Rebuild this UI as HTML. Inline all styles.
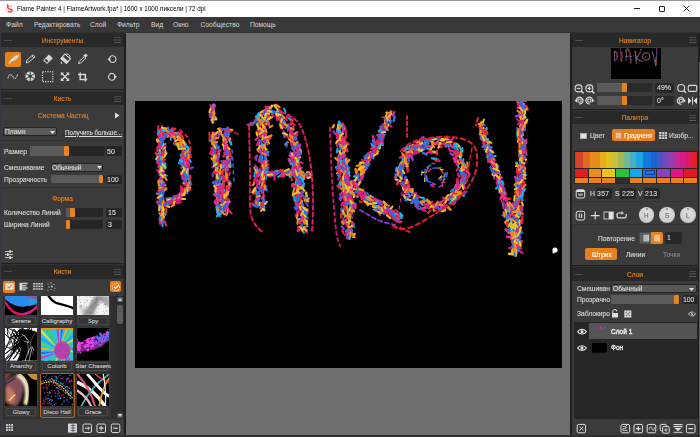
<!DOCTYPE html>
<html><head><meta charset="utf-8">
<style>
*{margin:0;padding:0;box-sizing:border-box}
html,body{width:700px;height:437px;overflow:hidden;background:#6e6e6e;font-family:"Liberation Sans",sans-serif}
.a{position:absolute}
.t{position:absolute;white-space:nowrap;line-height:1}
.hdr{position:absolute;background:#272828}
.body{position:absolute;background:#3b3b3b}
.dash{position:absolute;height:1.2px;width:8px;background:#4c4c4c}
.hamb{position:absolute;width:7.6px;height:6px;background:linear-gradient(#4a4a4a 0 1px,transparent 1px 1.8px,#404040 1.8px 2.8px,transparent 2.8px 3.2px,#404040 3.2px 4.2px,transparent 4.2px 5px,#585858 5px 6px)}
.or{color:#e8821e}
.wt{color:#d8d8d8}
.box{position:absolute;background:#262626;border-radius:2px}
.sl{position:absolute;background:#262626;border-radius:1px}
.slf{position:absolute;background:#5a5a5a;left:0;top:0;bottom:0}
.s{position:absolute;white-space:nowrap;line-height:1;font-size:7.4px;transform:scaleX(0.9);transform-origin:0 0;-webkit-text-stroke:0.15px currentColor}
.dd{position:absolute;background:#5a5a58;border:1px solid #232323;border-radius:2px}
.hd{position:absolute;top:0;bottom:0;width:4.5px;background:#e8821e;border-radius:1px}
</style></head><body>
<!-- title bar -->
<div class="a" style="left:0;top:0;width:700px;height:1px;background:#9a9a9a"></div>
<div class="a" style="left:0;top:1px;width:700px;height:16px;background:#ffffff"></div>
<!-- menu bar -->
<div class="a" style="left:0;top:17px;width:700px;height:16px;background:#383838"></div>
<div class="a" style="left:0;top:31.5px;width:700px;height:1.5px;background:#313131"></div>


<!-- title content -->
<svg class="a" style="left:5px;top:3.5px" width="9" height="9" viewBox="0 0 9 9">
<path d="M2.2 1 L3.3 2.4 C2.2 3 2.6 4.4 4 4.8 C5.6 5.3 7.4 5.4 7 6.8 C6.6 7.9 4.8 8.2 3.4 7.6" fill="none" stroke="#e03a28" stroke-width="1.4" stroke-linecap="round"/>
<path d="M5.2 2.6 C5.6 2 6.4 2 6.8 2.6" fill="none" stroke="#e86040" stroke-width="1"/>
<path d="M1.2 4.6 C0.8 7 2.4 8.8 4.2 8.6" fill="none" stroke="#f4a0a8" stroke-width="0.8"/>
</svg>
<div class="t" style="left:17px;top:5px;font-size:7.6px;transform:scaleX(0.83);transform-origin:0 0;color:#000">Flame Painter 4 | FlameArtwork.fpa* | 1600 x 1000 пиксели | 72 dpi</div>
<div class="a" style="left:634px;top:8px;width:6px;height:1px;background:#222"></div>
<div class="a" style="left:658.5px;top:5.5px;width:6px;height:6px;border:1px solid #222;border-radius:1px"></div>
<svg class="a" style="left:683px;top:5px" width="7" height="7" viewBox="0 0 7 7"><path d="M0.5 0.5 L6.5 6.5 M6.5 0.5 L0.5 6.5" stroke="#222" stroke-width="0.9"/></svg>
<!-- menu -->
<div class="t wt" style="left:6px;top:21.5px;font-size:6.8px">Файл</div>
<div class="t wt" style="left:34px;top:21.5px;font-size:6.7px">Редактировать</div>
<div class="t wt" style="left:90px;top:21.5px;font-size:6.7px">Слой</div>
<div class="t wt" style="left:117px;top:21.5px;font-size:6.7px">Фильтр</div>
<div class="t wt" style="left:151px;top:21.5px;font-size:6.7px">Вид</div>
<div class="t wt" style="left:173px;top:21.5px;font-size:6.7px">Окно</div>
<div class="t wt" style="left:200.5px;top:21.5px;font-size:6.7px">Сообщество</div>
<div class="t wt" style="left:250px;top:21.5px;font-size:6.7px">Помощь</div>

<!-- left panel -->
<div class="a" style="left:0;top:33px;width:126px;height:404px;background:#1f1f1f"></div><div class="a" style="left:0;top:33px;width:126px;height:1px;background:#2a2a2a"></div>
<div class="a" style="left:0;top:17px;width:1px;height:420px;background:#3a3540"></div>
<!-- tools -->
<div class="hdr" style="left:1px;top:34px;width:123px;height:12.5px"></div>
<div class="body" style="left:1px;top:46.5px;width:123px;height:42.5px"></div>
<div class="a" style="left:1px;top:90px;width:123px;height:2px;background:#333"></div>
<div class="hdr" style="left:1px;top:92px;width:123px;height:13px"></div>
<div class="body" style="left:1px;top:105px;width:123px;height:158px"></div>
<div class="a" style="left:1px;top:264px;width:123px;height:1px;background:#333"></div>
<div class="hdr" style="left:1px;top:265px;width:123px;height:13.5px"></div>
<div class="body" style="left:1px;top:278.5px;width:123px;height:156.5px"></div>


<!-- tools panel content -->
<div class="dash" style="left:3.5px;top:39.5px"></div>
<div class="s or" style="left:1px;width:123px;text-align:center;transform-origin:50% 0;top:36.8px">Инструменты</div>
<div class="hamb" style="left:113.5px;top:37px"></div>
<div class="a" style="left:5px;top:51.5px;width:15.7px;height:15.6px;background:#e8801c;border-radius:2px"></div>
<svg class="a" style="left:0;top:0" width="126" height="90" viewBox="0 0 126 90">
<g fill="none" stroke="#d6d6d6" stroke-width="1">
<!-- feather -->
<path d="M9 63 C11 59.5 14 56 18.6 54.8 C18.6 57.6 15.6 60.4 12.2 60.8 Z" fill="#c0dcec" stroke="#e0eef6" stroke-width="0.5"/>
<path d="M8.5 64 L13 59" stroke="#f0f8fc" stroke-width="0.8"/>
<!-- pencil -->
<path d="M26.3 63 L27 60 L33 54.8 L35 56.8 L29 62 Z M32 55.8 L34 57.8"/>
<!-- eraser -->
<path d="M43.6 60.2 L49 54.8 L52.4 58.2 L47 63.6 Z" fill="#d6d6d6" stroke="#d6d6d6" stroke-width="0.8"/>
<path d="M44.6 60.2 L46 58.8 L48.4 61.2 L47 62.6 Z" fill="#3b3b3b" stroke="none"/>
<!-- bucket -->
<g transform="rotate(40 65.6 58.6)">
<rect x="62" y="55.6" width="7.4" height="6.2" fill="none" stroke="#d6d6d6" stroke-width="1.1"/>
<rect x="62" y="58.8" width="7.4" height="3" fill="#d6d6d6" stroke="none"/>
<path d="M63 55.2 C63.5 53 67.5 53 68.4 55.2" stroke-width="0.9"/>
</g>
<path d="M61.2 61.5 C60.2 63 60.8 64 61.6 64 C62.4 64 62.8 63 61.2 61.5Z" fill="#d6d6d6" stroke="none"/>
<!-- eyedropper -->
<path d="M78.5 63.5 L79 61.8 L84.3 56.5 L85.8 58 L80.5 63.3 Z"/>
<path d="M83.5 56 L85 54.5 C86 53.6 87.6 55 86.7 56 L85.5 57.3" fill="#d6d6d6"/>
<!-- undo -->
<path d="M109.5 57.6 A3.4 3.4 0 1 1 109.6 60.8" stroke-width="1.1"/>
<path d="M107.4 59.3 L110.4 57 L110.4 61.4 Z" fill="#d6d6d6" stroke="none"/>
<!-- wave dotted -->
<path d="M8 78.5 C8.5 74 12 74 12.8 76.5 C13.5 79 16.5 79.5 17.5 74.5" stroke-width="1.2" stroke-dasharray="1.1 0.7"/>
<!-- circle segments -->
<g fill="#cfcfcf" stroke="none">
<path d="M30.2 76.2 L30.2 71.2 A5 5 0 0 1 34.5 73.7 Z"/>
<path d="M30.2 76.2 L34.5 73.7 A5 5 0 0 1 34.5 78.7 Z"/>
<path d="M30.2 76.2 L34.5 78.7 A5 5 0 0 1 30.2 81.2 Z"/>
<path d="M30.2 76.2 L30.2 81.2 A5 5 0 0 1 25.9 78.7 Z"/>
<path d="M30.2 76.2 L25.9 78.7 A5 5 0 0 1 25.9 73.7 Z"/>
<path d="M30.2 76.2 L25.9 73.7 A5 5 0 0 1 30.2 71.2 Z"/>
</g>
<g stroke="#3b3b3b" stroke-width="0.8"><path d="M30.2 76.2 L30.2 70.5 M30.2 76.2 L35.2 73.3 M30.2 76.2 L35.2 79.1 M30.2 76.2 L30.2 82 M30.2 76.2 L25.2 79.1 M30.2 76.2 L25.2 73.3"/></g>
<circle cx="30.2" cy="76.2" r="1.6" fill="#3b3b3b" stroke="none"/>
<!-- dotted square -->
<rect x="42.5" y="71.8" width="10.3" height="9.8" stroke-width="1.1" stroke-dasharray="1.3 1.1"/>
<!-- move arrows -->
<path d="M61.5 73.3 L68.5 80.3 M68.5 73.3 L61.5 80.3" stroke-width="1.4"/>
<path d="M60.8 72.6 L64 72.6 L60.8 75.8 Z M69.2 72.6 L66 72.6 L69.2 75.8 Z M60.8 81 L64 81 L60.8 77.8 Z M69.2 81 L66 81 L69.2 77.8 Z" fill="#d6d6d6" stroke="none"/>
<!-- crop -->
<path d="M80.2 72.4 L80.2 79.4 L87.2 79.4 M78 74.4 L85.4 74.4 L85.4 81.6" stroke-width="1.5"/>
<!-- redo -->
<path d="M114.8 75 A3.4 3.4 0 1 0 115 78.3" stroke-width="1.1"/>
<path d="M117 76.8 L114 74.6 L114 79 Z" fill="#d6d6d6" stroke="none"/>
</g>
</svg>


<!-- brush panel -->
<div class="dash" style="left:3.5px;top:97.5px"></div>
<div class="s or" style="left:1px;width:123px;text-align:center;transform-origin:50% 0;top:94.5px">Кисть</div>
<div class="hamb" style="left:113.5px;top:95.5px"></div>
<div class="s or" style="left:38px;top:111.5px">Система Частиц</div>
<svg class="a" style="left:114px;top:112px" width="6" height="7" viewBox="0 0 6 7"><path d="M1 0.5 L5.5 3.5 L1 6.5 Z" fill="#e0e0e0"/></svg>
<div class="dd" style="left:3px;top:127px;width:54px;height:9.3px"></div>
<div class="s wt" style="left:4.6px;top:128px">Пламя</div>
<svg class="a" style="left:50px;top:130.5px" width="5" height="3" viewBox="0 0 5 3"><path d="M0 0 L5 0 L2.5 3 Z" fill="#e8e8e8"/></svg>
<div class="s wt" style="left:65px;top:128.5px;font-size:7px;text-decoration:underline">Получить больше...</div>
<div class="a" style="left:1px;top:140px;width:123px;height:1px;background:#333"></div><div class="a" style="left:1px;top:187px;width:123px;height:1px;background:#343434"></div>

<div class="s wt" style="left:4.2px;top:147.5px">Размер</div>
<div class="sl" style="left:29.5px;top:146.3px;width:75px;height:10px"><div class="slf" style="width:34.5px"></div><div class="hd" style="left:34.4px;width:4.8px"></div></div>
<div class="box" style="left:105.7px;top:146px;width:16.3px;height:10.4px"></div>
<div class="s wt" style="left:107.3px;top:147.5px;font-size:7.8px">50</div>

<div class="s wt" style="left:4px;top:164px">Смешивание</div>
<div class="dd" style="left:50.5px;top:162.9px;width:52.7px;height:9px;background:#595957"></div>
<div class="s wt" style="left:51.8px;top:163.8px">Обычный</div>
<svg class="a" style="left:96.8px;top:166px" width="5" height="3" viewBox="0 0 5 3"><path d="M0 0 L5 0 L2.5 3 Z" fill="#e8e8e8"/></svg>

<div class="s wt" style="left:4px;top:175.8px">Прозрачность</div>
<div class="sl" style="left:50.5px;top:174.6px;width:54px;height:8.7px"><div class="slf" style="width:48.5px"></div><div class="hd" style="left:48.3px;width:4.6px"></div></div>
<div class="box" style="left:105.7px;top:174.5px;width:16.3px;height:9.5px"></div>
<div class="s wt" style="left:107px;top:175.6px;font-size:7.8px">100</div>

<div class="s or" style="left:1px;width:123px;text-align:center;transform-origin:50% 0;top:194.8px">Форма</div>

<div class="s wt" style="left:4px;top:209px">Количество Линий</div>
<div class="sl" style="left:65.9px;top:207.8px;width:37.6px;height:9.1px"><div class="slf" style="width:4.8px"></div><div class="hd" style="left:4.6px;width:4.5px"></div></div>
<div class="box" style="left:105.9px;top:207.8px;width:16.1px;height:9.6px"></div>
<div class="s wt" style="left:107.8px;top:209px;font-size:7.8px">15</div>

<div class="s wt" style="left:4px;top:221px">Ширина Линий</div>
<div class="sl" style="left:65.9px;top:219.9px;width:37.6px;height:9.1px"><div class="hd" style="left:0.5px;width:4px"></div></div>
<div class="box" style="left:105.9px;top:219.8px;width:16.1px;height:9.6px"></div>
<div class="s wt" style="left:107.8px;top:221px;font-size:7.8px">3</div>

<svg class="a" style="left:4.6px;top:250px" width="8" height="9.2" viewBox="0 0 8 9.2">
<g stroke="#d8d8d8" stroke-width="0.9"><path d="M0 1.6 H8 M0 4.6 H8 M0 7.6 H8"/></g>
<g fill="#e0e0e0"><rect x="4.4" y="0.2" width="1.6" height="2.8"/><rect x="2" y="3.2" width="1.6" height="2.8"/><rect x="4.4" y="6.2" width="1.6" height="2.8"/></g>
</svg>


<!-- brushes panel -->
<div class="dash" style="left:3.5px;top:271px"></div>
<div class="s or" style="left:1px;width:123px;text-align:center;transform-origin:50% 0;top:268px">Кисти</div>
<div class="hamb" style="left:113.5px;top:269px"></div>
<div class="a" style="left:3.4px;top:280.5px;width:12px;height:12px;background:#e8801c;border-radius:2px"></div>
<svg class="a" style="left:5px;top:283px" width="9" height="7" viewBox="0 0 9 7"><rect x="0.3" y="0.3" width="8.4" height="6.4" fill="#d8e4ec"/><path d="M2.5 3.3 L4 4.8 L6.8 1.8" stroke="#e8801c" stroke-width="1.1" fill="none"/></svg>
<svg class="a" style="left:18px;top:282px" width="42" height="9" viewBox="0 0 42 9">
<g fill="#d8d8d8"><rect x="1.5" y="0.8" width="3" height="7.6"/><rect x="4.5" y="0.8" width="5" height="1.3"/><rect x="4.5" y="3.1" width="4" height="1.3"/><rect x="4.5" y="5.3" width="5" height="1.3"/><rect x="4.5" y="7.3" width="3.5" height="1.1"/></g>
<g fill="#bdbdbd"><rect x="15" y="1" width="10" height="1.6"/><rect x="15" y="3.6" width="10" height="1.6"/><rect x="15" y="6.2" width="10" height="1.6"/></g>
<g stroke="#3b3b3b" stroke-width="0.5"><path d="M17.5 0 V9 M20 0 V9 M22.5 0 V9"/></g>
<g fill="#cfcfcf"><circle cx="30" cy="2" r="0.6"/><circle cx="33" cy="1" r="0.7"/><circle cx="36" cy="2.5" r="0.6"/><circle cx="31" cy="5" r="0.7"/><circle cx="34" cy="4.5" r="1"/><circle cx="37" cy="6" r="0.6"/><circle cx="30" cy="8" r="0.6"/><circle cx="33" cy="7.5" r="0.6"/><circle cx="36" cy="8.3" r="0.5"/></g>
</svg>
<div class="a" style="left:109.5px;top:280.6px;width:11.7px;height:11.8px;background:#e8801c;border-radius:2px"></div>
<svg class="a" style="left:110.5px;top:281.6px" width="10" height="10" viewBox="0 0 10 10"><circle cx="5" cy="5" r="3.6" stroke="#f0e8e0" stroke-width="1" fill="none" stroke-dasharray="1.2 0.9"/><path d="M3.2 5 L4.6 6.4 L7.8 3" stroke="#fff" stroke-width="1.1" fill="none"/></svg>
<div class="a" style="left:3px;top:295.5px;width:121px;height:123px;background:#2e2e2e;overflow:hidden"><svg width="0" height="0" style="position:absolute"><defs><filter id="bl1" x="-20%" y="-20%" width="140%" height="140%"><feGaussianBlur stdDeviation="0.8"/></filter><filter id="bl2" x="-20%" y="-20%" width="140%" height="140%"><feGaussianBlur stdDeviation="1.5"/></filter></defs></svg><div class="a" style="left:0.6px;top:-14.3px;width:35.2px;height:45.3px;background:#383838;border:1px solid #343434;border-radius:2px"></div><svg class="a" style="left:1.9px;top:-13.0px" width="32.3" height="32.6" viewBox="0 0 32 32" preserveAspectRatio="none"><rect width="32" height="32" fill="#000"/>
<path d="M0 0 L0 16 C6 21 12 23.5 18 23.3 C24 23 29 21 32 19.5 L32 0 Z" fill="#2a88ee"/>
<path d="M22 0 L32 0 L32 22 C30 21 27 22 24 23 Z" fill="#20a8e0" opacity="0.6"/>
<path d="M20 13 L32 13 L32 15.8 C28 16 24 15 20 13Z" fill="#8a5a9a"/>
<path d="M-1 17 C4 26 10 30.8 16 30.8 C22 30.8 28 27 33 22" stroke="#e41462" stroke-width="2.2" fill="none"/>
<path d="M16 30.8 C22 30.8 28 27 33 22" stroke="#e01890" stroke-width="2.2" fill="none"/></svg><div class="a" style="left:2.6px;top:21.3px;width:30.5px;height:8.3px;background:#333;border:1px solid #484848;border-radius:1px"></div><div class="s" style="left:-0.1px;width:36.3px;text-align:center;transform:none;font-size:6.1px;top:22.3px;color:#c8c8c8">Serene</div><div class="a" style="left:36.5px;top:-14.3px;width:35.2px;height:45.3px;background:#383838;border:1px solid #343434;border-radius:2px"></div><svg class="a" style="left:37.8px;top:-13.0px" width="32.3" height="32.6" viewBox="0 0 32 32" preserveAspectRatio="none"><rect width="32" height="32" fill="#fff"/>
<path d="M7 12 C9 15 11 18 15 19.5 C21 21.5 28 22 33 25.5" stroke="#000" stroke-width="2.3" fill="none"/></svg><div class="a" style="left:38.5px;top:21.3px;width:30.5px;height:8.3px;background:#333;border:1px solid #484848;border-radius:1px"></div><div class="s" style="left:35.8px;width:36.3px;text-align:center;transform:none;font-size:6.1px;top:22.3px;color:#c8c8c8">Calligraphy</div><div class="a" style="left:72.7px;top:-14.3px;width:35.2px;height:45.3px;background:#383838;border:1px solid #343434;border-radius:2px"></div><svg class="a" style="left:74.0px;top:-13.0px" width="32.3" height="32.6" viewBox="0 0 32 32" preserveAspectRatio="none"><rect width="32" height="32" fill="#f2f2f2"/><g filter="url(#bl1)"><path d="M6 32 C10 26 14 18 18 13 L26 13 C22 18 18 26 16 32Z" fill="#777" opacity="0.8"/><path d="M20 13 L32 13 L32 24 C28 22 24 18 20 13Z" fill="#888" opacity="0.7"/><ellipse cx="10" cy="28" rx="6" ry="4" fill="#999" opacity="0.6"/></g><rect x="14.5" y="23.6" width="0.9" height="0.9" fill="rgb(179,179,179)" opacity="0.5"/><rect x="14.5" y="29.2" width="0.9" height="0.9" fill="rgb(108,108,108)" opacity="0.5"/><rect x="5.9" y="22.7" width="0.9" height="0.9" fill="rgb(107,107,107)" opacity="0.5"/><rect x="3.0" y="18.8" width="0.9" height="0.9" fill="rgb(83,83,83)" opacity="0.5"/><rect x="17.2" y="29.9" width="0.9" height="0.9" fill="rgb(70,70,70)" opacity="0.5"/><rect x="19.1" y="20.5" width="0.9" height="0.9" fill="rgb(175,175,175)" opacity="0.5"/><rect x="20.9" y="24.7" width="0.9" height="0.9" fill="rgb(100,100,100)" opacity="0.5"/><rect x="19.9" y="28.8" width="0.9" height="0.9" fill="rgb(76,76,76)" opacity="0.5"/><rect x="1.9" y="16.6" width="0.9" height="0.9" fill="rgb(121,121,121)" opacity="0.5"/><rect x="19.2" y="27.8" width="0.9" height="0.9" fill="rgb(143,143,143)" opacity="0.5"/><rect x="14.1" y="29.0" width="0.9" height="0.9" fill="rgb(192,192,192)" opacity="0.5"/><rect x="7.5" y="18.6" width="0.9" height="0.9" fill="rgb(61,61,61)" opacity="0.5"/><rect x="21.2" y="21.7" width="0.9" height="0.9" fill="rgb(131,131,131)" opacity="0.5"/><rect x="13.0" y="23.5" width="0.9" height="0.9" fill="rgb(81,81,81)" opacity="0.5"/><rect x="22.6" y="19.0" width="0.9" height="0.9" fill="rgb(118,118,118)" opacity="0.5"/><rect x="16.4" y="13.6" width="0.9" height="0.9" fill="rgb(87,87,87)" opacity="0.5"/><rect x="12.8" y="29.1" width="0.9" height="0.9" fill="rgb(158,158,158)" opacity="0.5"/><rect x="2.1" y="13.3" width="0.9" height="0.9" fill="rgb(60,60,60)" opacity="0.5"/><rect x="6.8" y="30.6" width="0.9" height="0.9" fill="rgb(73,73,73)" opacity="0.5"/><rect x="15.0" y="31.6" width="0.9" height="0.9" fill="rgb(161,161,161)" opacity="0.5"/><rect x="13.4" y="23.8" width="0.9" height="0.9" fill="rgb(110,110,110)" opacity="0.5"/><rect x="24.9" y="18.1" width="0.9" height="0.9" fill="rgb(82,82,82)" opacity="0.5"/><rect x="10.0" y="13.3" width="0.9" height="0.9" fill="rgb(164,164,164)" opacity="0.5"/><rect x="24.3" y="15.2" width="0.9" height="0.9" fill="rgb(123,123,123)" opacity="0.5"/><rect x="22.6" y="13.2" width="0.9" height="0.9" fill="rgb(179,179,179)" opacity="0.5"/><rect x="25.5" y="16.4" width="0.9" height="0.9" fill="rgb(108,108,108)" opacity="0.5"/><rect x="14.3" y="16.6" width="0.9" height="0.9" fill="rgb(93,93,93)" opacity="0.5"/><rect x="13.4" y="20.3" width="0.9" height="0.9" fill="rgb(161,161,161)" opacity="0.5"/><rect x="13.5" y="17.0" width="0.9" height="0.9" fill="rgb(129,129,129)" opacity="0.5"/><rect x="27.7" y="31.5" width="0.9" height="0.9" fill="rgb(137,137,137)" opacity="0.5"/><rect x="31.9" y="13.4" width="0.9" height="0.9" fill="rgb(107,107,107)" opacity="0.5"/><rect x="12.6" y="29.2" width="0.9" height="0.9" fill="rgb(85,85,85)" opacity="0.5"/><rect x="1.3" y="15.8" width="0.9" height="0.9" fill="rgb(173,173,173)" opacity="0.5"/><rect x="8.3" y="27.7" width="0.9" height="0.9" fill="rgb(144,144,144)" opacity="0.5"/><rect x="26.6" y="20.3" width="0.9" height="0.9" fill="rgb(79,79,79)" opacity="0.5"/><rect x="2.9" y="24.1" width="0.9" height="0.9" fill="rgb(122,122,122)" opacity="0.5"/><rect x="0.5" y="20.0" width="0.9" height="0.9" fill="rgb(176,176,176)" opacity="0.5"/><rect x="4.1" y="24.2" width="0.9" height="0.9" fill="rgb(94,94,94)" opacity="0.5"/><rect x="27.7" y="16.5" width="0.9" height="0.9" fill="rgb(99,99,99)" opacity="0.5"/><rect x="9.9" y="17.3" width="0.9" height="0.9" fill="rgb(123,123,123)" opacity="0.5"/><rect x="23.2" y="16.0" width="0.9" height="0.9" fill="rgb(110,110,110)" opacity="0.5"/><rect x="22.0" y="20.4" width="0.9" height="0.9" fill="rgb(183,183,183)" opacity="0.5"/><rect x="19.3" y="21.0" width="0.9" height="0.9" fill="rgb(86,86,86)" opacity="0.5"/><rect x="3.5" y="22.7" width="0.9" height="0.9" fill="rgb(125,125,125)" opacity="0.5"/><rect x="7.6" y="26.4" width="0.9" height="0.9" fill="rgb(125,125,125)" opacity="0.5"/><rect x="13.5" y="30.2" width="0.9" height="0.9" fill="rgb(185,185,185)" opacity="0.5"/><rect x="9.4" y="16.3" width="0.9" height="0.9" fill="rgb(77,77,77)" opacity="0.5"/><rect x="4.0" y="22.1" width="0.9" height="0.9" fill="rgb(78,78,78)" opacity="0.5"/><rect x="9.0" y="30.4" width="0.9" height="0.9" fill="rgb(112,112,112)" opacity="0.5"/><rect x="24.0" y="14.3" width="0.9" height="0.9" fill="rgb(165,165,165)" opacity="0.5"/><rect x="14.3" y="14.1" width="0.9" height="0.9" fill="rgb(105,105,105)" opacity="0.5"/><rect x="9.0" y="23.1" width="0.9" height="0.9" fill="rgb(93,93,93)" opacity="0.5"/><rect x="3.0" y="15.6" width="0.9" height="0.9" fill="rgb(175,175,175)" opacity="0.5"/><rect x="31.4" y="25.5" width="0.9" height="0.9" fill="rgb(193,193,193)" opacity="0.5"/><rect x="18.7" y="15.7" width="0.9" height="0.9" fill="rgb(68,68,68)" opacity="0.5"/><rect x="29.6" y="22.0" width="0.9" height="0.9" fill="rgb(151,151,151)" opacity="0.5"/><rect x="22.4" y="31.3" width="0.9" height="0.9" fill="rgb(65,65,65)" opacity="0.5"/><rect x="19.1" y="14.4" width="0.9" height="0.9" fill="rgb(77,77,77)" opacity="0.5"/><rect x="23.4" y="19.1" width="0.9" height="0.9" fill="rgb(78,78,78)" opacity="0.5"/><rect x="2.4" y="23.4" width="0.9" height="0.9" fill="rgb(71,71,71)" opacity="0.5"/><rect x="28.8" y="27.0" width="0.9" height="0.9" fill="rgb(93,93,93)" opacity="0.5"/><rect x="25.4" y="30.4" width="0.9" height="0.9" fill="rgb(150,150,150)" opacity="0.5"/><rect x="2.7" y="22.0" width="0.9" height="0.9" fill="rgb(79,79,79)" opacity="0.5"/><rect x="27.9" y="20.9" width="0.9" height="0.9" fill="rgb(67,67,67)" opacity="0.5"/><rect x="27.6" y="23.9" width="0.9" height="0.9" fill="rgb(157,157,157)" opacity="0.5"/><rect x="12.1" y="13.2" width="0.9" height="0.9" fill="rgb(78,78,78)" opacity="0.5"/><rect x="2.6" y="25.1" width="0.9" height="0.9" fill="rgb(125,125,125)" opacity="0.5"/><rect x="28.2" y="26.8" width="0.9" height="0.9" fill="rgb(159,159,159)" opacity="0.5"/><rect x="29.9" y="26.2" width="0.9" height="0.9" fill="rgb(177,177,177)" opacity="0.5"/><rect x="14.1" y="28.9" width="0.9" height="0.9" fill="rgb(81,81,81)" opacity="0.5"/><rect x="16.6" y="22.8" width="0.9" height="0.9" fill="rgb(139,139,139)" opacity="0.5"/><rect x="19.2" y="22.1" width="0.9" height="0.9" fill="rgb(118,118,118)" opacity="0.5"/><rect x="30.6" y="15.1" width="0.9" height="0.9" fill="rgb(184,184,184)" opacity="0.5"/><rect x="8.2" y="13.2" width="0.9" height="0.9" fill="rgb(137,137,137)" opacity="0.5"/><rect x="4.6" y="24.6" width="0.9" height="0.9" fill="rgb(192,192,192)" opacity="0.5"/><rect x="5.4" y="30.2" width="0.9" height="0.9" fill="rgb(173,173,173)" opacity="0.5"/><rect x="15.9" y="17.6" width="0.9" height="0.9" fill="rgb(163,163,163)" opacity="0.5"/><rect x="21.3" y="16.8" width="0.9" height="0.9" fill="rgb(170,170,170)" opacity="0.5"/><rect x="25.7" y="27.3" width="0.9" height="0.9" fill="rgb(111,111,111)" opacity="0.5"/><rect x="28.2" y="20.3" width="0.9" height="0.9" fill="rgb(141,141,141)" opacity="0.5"/><rect x="6.7" y="15.6" width="0.9" height="0.9" fill="rgb(149,149,149)" opacity="0.5"/><rect x="26.8" y="29.1" width="0.9" height="0.9" fill="rgb(76,76,76)" opacity="0.5"/><rect x="30.4" y="18.3" width="0.9" height="0.9" fill="rgb(103,103,103)" opacity="0.5"/><rect x="3.6" y="22.0" width="0.9" height="0.9" fill="rgb(114,114,114)" opacity="0.5"/><rect x="26.6" y="20.3" width="0.9" height="0.9" fill="rgb(193,193,193)" opacity="0.5"/><rect x="15.8" y="19.0" width="0.9" height="0.9" fill="rgb(175,175,175)" opacity="0.5"/><rect x="10.3" y="28.7" width="0.9" height="0.9" fill="rgb(131,131,131)" opacity="0.5"/><rect x="27.9" y="13.8" width="0.9" height="0.9" fill="rgb(131,131,131)" opacity="0.5"/><rect x="18.3" y="18.9" width="0.9" height="0.9" fill="rgb(64,64,64)" opacity="0.5"/><rect x="20.5" y="20.7" width="0.9" height="0.9" fill="rgb(108,108,108)" opacity="0.5"/></svg><div class="a" style="left:74.7px;top:21.3px;width:30.5px;height:8.3px;background:#333;border:1px solid #484848;border-radius:1px"></div><div class="s" style="left:72.0px;width:36.3px;text-align:center;transform:none;font-size:6.1px;top:22.3px;color:#c8c8c8">Spy</div><div class="a" style="left:0.6px;top:31.2px;width:35.2px;height:45.3px;background:#383838;border:1px solid #343434;border-radius:2px"></div><svg class="a" style="left:1.9px;top:32.5px" width="32.3" height="32.6" viewBox="0 0 32 32" preserveAspectRatio="none"><rect width="32" height="32" fill="#fff"/><path d="M14 2 C20 0 26 2 32 4 L32 32 L12 32 C16 24 18 16 14 8Z" fill="#000"/><path d="M-4.4 29.8 Q1.5 20.1 8.8 0.9" stroke="#000" stroke-width="0.8" fill="none"/><path d="M10.7 22.5 Q21.9 6.4 29.9 35.3" stroke="#000" stroke-width="0.8" fill="none"/><path d="M-0.5 -4.5 Q5.7 8.7 17.5 25.0" stroke="#000" stroke-width="0.7" fill="none"/><path d="M12.4 16.9 Q12.6 25.3 22.7 26.8" stroke="#000" stroke-width="1.1" fill="none"/><path d="M-2.8 34.2 Q14.5 20.0 26.7 0.5" stroke="#000" stroke-width="1.1" fill="none"/><path d="M4.4 18.9 Q30.2 14.8 32.5 28.5" stroke="#000" stroke-width="0.9" fill="none"/><path d="M0.1 25.3 Q23.0 6.8 30.3 21.9" stroke="#000" stroke-width="1.1" fill="none"/><path d="M19.5 36.0 Q10.3 29.1 19.9 28.2" stroke="#000" stroke-width="1.1" fill="none"/><path d="M3.7 -1.5 Q24.6 15.6 16.3 18.1" stroke="#000" stroke-width="0.4" fill="none"/><path d="M15.2 -2.3 Q10.7 25.2 29.6 2.3" stroke="#000" stroke-width="0.5" fill="none"/><path d="M-1.3 16.7 Q22.1 30.3 26.8 30.3" stroke="#000" stroke-width="0.8" fill="none"/><path d="M18.7 -1.4 Q9.3 23.3 8.2 17.1" stroke="#000" stroke-width="0.9" fill="none"/><path d="M8.1 30.4 Q12.2 27.0 20.7 8.1" stroke="#000" stroke-width="1.1" fill="none"/><path d="M0.2 30.7 Q18.3 6.4 35.8 17.0" stroke="#000" stroke-width="0.8" fill="none"/><path d="M7.6 20.4 Q16.5 12.8 1.0 35.7" stroke="#000" stroke-width="1.0" fill="none"/><path d="M9.1 15.6 Q17.2 13.2 25.6 -2.2" stroke="#000" stroke-width="1.2" fill="none"/><path d="M18.1 6.3 Q13.9 26.1 17.5 0.3" stroke="#000" stroke-width="1.1" fill="none"/><path d="M6.9 8.3 Q29.6 4.1 7.1 21.0" stroke="#000" stroke-width="1.0" fill="none"/><path d="M-4.4 3.2 Q10.3 11.4 8.4 23.9" stroke="#000" stroke-width="0.9" fill="none"/><path d="M-2.4 25.7 Q8.0 6.3 4.5 16.4" stroke="#000" stroke-width="0.8" fill="none"/><path d="M5.9 10.8 Q5.1 6.5 15.3 17.2" stroke="#000" stroke-width="0.9" fill="none"/><path d="M11.0 17.2 Q27.4 7.4 31.5 20.7" stroke="#000" stroke-width="1.0" fill="none"/><path d="M15.3 32.9 Q29.5 7.0 11.7 8.2" stroke="#000" stroke-width="1.2" fill="none"/><path d="M17.2 0.6 Q8.3 3.1 8.9 25.5" stroke="#000" stroke-width="1.1" fill="none"/><path d="M5.5 28.2 Q21.9 0.6 4.7 11.9" stroke="#000" stroke-width="0.6" fill="none"/><path d="M12.1 33.3 Q16.2 24.3 35.8 -0.2" stroke="#000" stroke-width="0.8" fill="none"/><path d="M12.1 2.9 Q1.2 17.7 2.6 -0.5" stroke="#000" stroke-width="0.8" fill="none"/><path d="M9.2 1.2 Q26.9 31.7 6.8 3.6" stroke="#000" stroke-width="1.1" fill="none"/><path d="M-2.6 -2.4 Q24.5 10.5 35.2 14.4" stroke="#000" stroke-width="0.8" fill="none"/><path d="M7.9 13.1 Q22.4 27.0 22.2 -4.4" stroke="#000" stroke-width="0.5" fill="none"/><path d="M6.3 26.1 Q5.3 16.4 15.0 3.2" stroke="#000" stroke-width="0.4" fill="none"/><path d="M17.3 28.7 Q20.1 12.9 26.1 31.2" stroke="#000" stroke-width="0.9" fill="none"/><path d="M7.6 36.3 Q29.2 23.8 29.8 5.8" stroke="#000" stroke-width="1.0" fill="none"/><path d="M15.4 12.0 Q22.2 24.6 33.2 32.0" stroke="#000" stroke-width="1.0" fill="none"/><path d="M23.3 26.2 Q22.4 0.3 15.6 9.4" stroke="#fff" stroke-width="0.4" fill="none"/><path d="M28.7 22.3 Q26.0 10.8 19.3 34.7" stroke="#fff" stroke-width="0.6" fill="none"/><path d="M27.1 18.8 Q25.6 22.4 23.0 37.0" stroke="#fff" stroke-width="0.6" fill="none"/><path d="M36.5 -1.1 Q18.6 12.8 28.2 26.0" stroke="#fff" stroke-width="0.3" fill="none"/><path d="M18.5 12.7 Q30.3 17.6 16.3 5.5" stroke="#fff" stroke-width="0.5" fill="none"/></svg><div class="a" style="left:2.6px;top:66.8px;width:30.5px;height:8.3px;background:#333;border:1px solid #484848;border-radius:1px"></div><div class="s" style="left:-0.1px;width:36.3px;text-align:center;transform:none;font-size:6.1px;top:67.8px;color:#c8c8c8">Anarchy</div><div class="a" style="left:36.5px;top:31.2px;width:35.2px;height:45.3px;background:#383838;border:1px solid #343434;border-radius:2px"></div><svg class="a" style="left:37.8px;top:32.5px" width="32.3" height="32.6" viewBox="0 0 32 32" preserveAspectRatio="none"><rect width="32" height="32" fill="#30c0e0"/><path d="M26.0 21.0 L52.9 29.4 L51.8 33.0 L26.0 21.7Z" fill="#f0e020"/><path d="M25.8 22.3 L50.2 36.5 L48.3 39.8 L25.7 23.0Z" fill="#40d040"/><path d="M25.4 23.6 L46.0 42.9 L43.4 45.6 L25.1 24.2Z" fill="#20c0f0"/><path d="M24.7 24.7 L40.5 48.1 L37.3 50.2 L24.2 25.2Z" fill="#e030c0"/><path d="M23.7 25.7 L34.0 52.0 L30.4 53.4 L23.2 26.1Z" fill="#2070f0"/><path d="M22.6 26.4 L26.7 54.3 L22.9 54.9 L22.0 26.7Z" fill="#f0b020"/><path d="M21.3 26.8 L19.1 55.0 L15.3 54.7 L20.7 27.0Z" fill="#50e050"/><path d="M20.0 27.0 L11.6 53.9 L8.0 52.8 L19.3 27.0Z" fill="#30a0f0"/><path d="M18.7 26.8 L4.5 51.2 L1.2 49.3 L18.0 26.7Z" fill="#f0e020"/><path d="M17.4 26.4 L-1.9 47.0 L-4.6 44.4 L16.8 26.1Z" fill="#40d040"/><path d="M16.3 25.7 L-7.1 41.5 L-9.2 38.3 L15.8 25.2Z" fill="#20c0f0"/><path d="M15.3 24.7 L-11.0 35.0 L-12.4 31.4 L14.9 24.2Z" fill="#e030c0"/><path d="M14.6 23.6 L-13.3 27.7 L-13.9 23.9 L14.3 23.0Z" fill="#2070f0"/><path d="M14.2 22.3 L-14.0 20.1 L-13.7 16.3 L14.0 21.7Z" fill="#f0b020"/><path d="M14.0 21.0 L-12.9 12.6 L-11.8 9.0 L14.0 20.3Z" fill="#50e050"/><path d="M14.2 19.7 L-10.2 5.5 L-8.3 2.2 L14.3 19.0Z" fill="#30a0f0"/><path d="M14.6 18.4 L-6.0 -0.9 L-3.4 -3.6 L14.9 17.8Z" fill="#f0e020"/><path d="M15.3 17.3 L-0.5 -6.1 L2.7 -8.2 L15.8 16.8Z" fill="#40d040"/><path d="M16.3 16.3 L6.0 -10.0 L9.6 -11.4 L16.8 15.9Z" fill="#20c0f0"/><path d="M17.4 15.6 L13.3 -12.3 L17.1 -12.9 L18.0 15.3Z" fill="#e030c0"/><path d="M18.7 15.2 L20.9 -13.0 L24.7 -12.7 L19.3 15.0Z" fill="#2070f0"/><path d="M20.0 15.0 L28.4 -11.9 L32.0 -10.8 L20.7 15.0Z" fill="#f0b020"/><path d="M21.3 15.2 L35.5 -9.2 L38.8 -7.3 L22.0 15.3Z" fill="#50e050"/><path d="M22.6 15.6 L41.9 -5.0 L44.6 -2.4 L23.2 15.9Z" fill="#30a0f0"/><path d="M23.7 16.3 L47.1 0.5 L49.2 3.7 L24.2 16.8Z" fill="#f0e020"/><path d="M24.7 17.3 L51.0 7.0 L52.4 10.6 L25.1 17.8Z" fill="#40d040"/><path d="M25.4 18.4 L53.3 14.3 L53.9 18.1 L25.7 19.0Z" fill="#20c0f0"/><path d="M25.8 19.7 L54.0 21.9 L53.7 25.7 L26.0 20.3Z" fill="#e030c0"/><ellipse cx="21" cy="22" rx="8" ry="9" fill="#e02a9a" opacity="0.85"/><circle cx="21.5" cy="22.5" r="6.5" fill="none" stroke="#7040c0" stroke-width="0.9" stroke-dasharray="1 0.8"/><circle cx="21.5" cy="22.5" r="4.5" fill="none" stroke="#7040c0" stroke-width="0.9" stroke-dasharray="1 0.8"/><circle cx="21.5" cy="22.5" r="2.5" fill="none" stroke="#7040c0" stroke-width="0.9" stroke-dasharray="1 0.8"/><path d="M0 0 L32 0 L32 1.2 L0 1.2Z" fill="#f09020"/></svg><div class="a" style="left:38.5px;top:66.8px;width:30.5px;height:8.3px;background:#333;border:1px solid #484848;border-radius:1px"></div><div class="s" style="left:35.8px;width:36.3px;text-align:center;transform:none;font-size:6.1px;top:67.8px;color:#c8c8c8">Colorib</div><div class="a" style="left:72.7px;top:31.2px;width:35.2px;height:45.3px;background:#383838;border:1px solid #343434;border-radius:2px"></div><svg class="a" style="left:74.0px;top:32.5px" width="32.3" height="32.6" viewBox="0 0 32 32" preserveAspectRatio="none"><rect width="32" height="32" fill="#000"/><path d="M0 12 C6 14 12 18 18 16 C24 13 28 8 32 6 L32 12 C26 16 20 22 12 22 C6 22 2 24 0 26Z" fill="#d838d8" opacity="0.6"/><circle cx="30.9" cy="-2.4" r="1.4" fill="#6060f0"/><circle cx="2.4" cy="14.9" r="1.2" fill="#f040f0"/><circle cx="24.3" cy="16.0" r="0.9" fill="#e040e0"/><circle cx="31.0" cy="8.4" r="1.1" fill="#6060f0"/><circle cx="19.1" cy="8.5" r="1.1" fill="#4080f0"/><circle cx="19.1" cy="13.1" r="1.1" fill="#4080f0"/><circle cx="15.5" cy="12.4" r="1.2" fill="#f040f0"/><circle cx="23.9" cy="16.4" r="0.5" fill="#8050f0"/><circle cx="7.8" cy="18.3" r="1.3" fill="#f040f0"/><circle cx="12.5" cy="15.0" r="1.5" fill="#f040f0"/><circle cx="23.9" cy="18.1" r="0.6" fill="#4080f0"/><circle cx="29.0" cy="10.1" r="1.3" fill="#6060f0"/><circle cx="8.0" cy="16.5" r="0.6" fill="#f040f0"/><circle cx="25.9" cy="7.7" r="0.7" fill="#6060f0"/><circle cx="30.7" cy="6.7" r="1.2" fill="#8050f0"/><circle cx="14.6" cy="18.3" r="0.7" fill="#f040f0"/><circle cx="1.7" cy="17.7" r="1.0" fill="#f040f0"/><circle cx="21.4" cy="10.4" r="1.2" fill="#6060f0"/><circle cx="20.5" cy="9.9" r="1.5" fill="#e040e0"/><circle cx="23.5" cy="7.1" r="1.0" fill="#e040e0"/><circle cx="16.1" cy="11.7" r="0.8" fill="#4080f0"/><circle cx="19.5" cy="14.8" r="1.2" fill="#e040e0"/><circle cx="24.1" cy="10.3" r="1.5" fill="#e040e0"/><circle cx="1.3" cy="21.6" r="0.6" fill="#f040f0"/><circle cx="8.7" cy="12.5" r="0.6" fill="#f040f0"/><circle cx="17.3" cy="14.3" r="1.3" fill="#8050f0"/><circle cx="29.2" cy="8.4" r="1.0" fill="#4080f0"/><circle cx="11.3" cy="16.9" r="0.9" fill="#f040f0"/><circle cx="15.8" cy="17.1" r="1.4" fill="#f040f0"/><circle cx="14.3" cy="18.2" r="1.4" fill="#f040f0"/><circle cx="26.8" cy="8.7" r="0.9" fill="#4080f0"/><circle cx="4.8" cy="14.7" r="0.7" fill="#f040f0"/><circle cx="26.8" cy="6.2" r="1.0" fill="#e040e0"/><circle cx="11.8" cy="13.4" r="0.6" fill="#f040f0"/><circle cx="28.0" cy="8.8" r="1.4" fill="#6060f0"/><circle cx="14.8" cy="14.1" r="1.4" fill="#f040f0"/><circle cx="0.3" cy="17.4" r="1.2" fill="#f040f0"/><circle cx="22.2" cy="16.4" r="1.3" fill="#6060f0"/><circle cx="22.2" cy="9.9" r="1.2" fill="#4080f0"/><circle cx="10.5" cy="17.1" r="1.5" fill="#f040f0"/><circle cx="10.3" cy="11.7" r="1.5" fill="#f040f0"/><circle cx="22.0" cy="11.8" r="1.0" fill="#4080f0"/><circle cx="25.7" cy="7.9" r="1.6" fill="#6060f0"/><circle cx="23.4" cy="12.3" r="0.6" fill="#e040e0"/><circle cx="26.5" cy="12.9" r="1.4" fill="#6060f0"/><circle cx="23.6" cy="10.3" r="1.4" fill="#4080f0"/><circle cx="17.3" cy="14.4" r="0.6" fill="#e040e0"/><circle cx="14.5" cy="10.3" r="1.4" fill="#f040f0"/><circle cx="26.0" cy="8.8" r="1.1" fill="#e040e0"/><circle cx="30.9" cy="7.5" r="0.6" fill="#6060f0"/><circle cx="17.5" cy="12.6" r="0.8" fill="#8050f0"/><circle cx="3.4" cy="17.3" r="0.8" fill="#f040f0"/><circle cx="0.8" cy="18.9" r="1.4" fill="#f040f0"/><circle cx="13.5" cy="13.0" r="1.3" fill="#f040f0"/><circle cx="15.6" cy="15.4" r="1.0" fill="#f040f0"/><circle cx="11.2" cy="13.6" r="1.4" fill="#f040f0"/><circle cx="10.7" cy="17.6" r="1.4" fill="#f040f0"/><circle cx="2.3" cy="21.6" r="1.2" fill="#f040f0"/><circle cx="1.5" cy="19.7" r="0.9" fill="#f040f0"/><circle cx="0.1" cy="11.2" r="0.9" fill="#f040f0"/><circle cx="2.9" cy="15.1" r="0.5" fill="#f040f0"/><circle cx="11.6" cy="15.8" r="0.5" fill="#f040f0"/><circle cx="3.5" cy="24.4" r="0.8" fill="#f040f0"/><circle cx="5.2" cy="14.6" r="1.2" fill="#f040f0"/><circle cx="21.9" cy="9.1" r="0.8" fill="#4080f0"/><circle cx="28.4" cy="10.3" r="0.8" fill="#6060f0"/><circle cx="3.7" cy="15.3" r="0.7" fill="#f040f0"/><circle cx="2.0" cy="15.0" r="1.0" fill="#f040f0"/><circle cx="18.7" cy="12.5" r="0.7" fill="#8050f0"/><circle cx="11.5" cy="14.5" r="1.1" fill="#f040f0"/><circle cx="19.2" cy="8.1" r="0.7" fill="#6060f0"/><circle cx="9.0" cy="16.7" r="0.7" fill="#f040f0"/><circle cx="24.2" cy="8.0" r="1.4" fill="#6060f0"/><circle cx="15.5" cy="16.7" r="0.9" fill="#f040f0"/><circle cx="30.6" cy="3.9" r="1.0" fill="#8050f0"/><circle cx="7.1" cy="12.5" r="0.6" fill="#f040f0"/><circle cx="30.3" cy="7.7" r="1.4" fill="#4080f0"/><circle cx="1.9" cy="16.4" r="1.5" fill="#f040f0"/><circle cx="28.6" cy="12.1" r="1.4" fill="#6060f0"/><circle cx="22.8" cy="5.4" r="1.0" fill="#e040e0"/><circle cx="24.7" cy="13.2" r="1.2" fill="#e040e0"/><circle cx="31.8" cy="11.3" r="1.1" fill="#4080f0"/><circle cx="1.7" cy="17.6" r="0.7" fill="#f040f0"/><circle cx="29.3" cy="6.4" r="1.4" fill="#e040e0"/><circle cx="2.6" cy="18.3" r="0.6" fill="#f040f0"/><circle cx="15.4" cy="18.0" r="1.0" fill="#f040f0"/><circle cx="30.6" cy="1.6" r="0.5" fill="#4080f0"/><circle cx="6.0" cy="14.3" r="0.7" fill="#f040f0"/><circle cx="21.8" cy="11.1" r="1.1" fill="#8050f0"/><circle cx="16.8" cy="9.5" r="1.5" fill="#e040e0"/><circle cx="30.8" cy="5.3" r="1.6" fill="#4080f0"/><circle cx="21.3" cy="13.5" r="0.9" fill="#8050f0"/><circle cx="22.0" cy="12.7" r="1.3" fill="#6060f0"/><circle cx="25.1" cy="10.9" r="1.2" fill="#8050f0"/><circle cx="0.4" cy="16.4" r="0.8" fill="#f040f0"/><circle cx="18.1" cy="15.4" r="1.3" fill="#6060f0"/><circle cx="27.4" cy="10.7" r="0.8" fill="#e040e0"/><circle cx="12.0" cy="10.8" r="1.1" fill="#f040f0"/><circle cx="9.5" cy="14.3" r="1.2" fill="#f040f0"/><circle cx="8.2" cy="19.0" r="0.7" fill="#f040f0"/><circle cx="23.4" cy="6.3" r="1.3" fill="#6060f0"/><circle cx="10.6" cy="21.7" r="1.4" fill="#f040f0"/><circle cx="3.0" cy="19.6" r="1.2" fill="#f040f0"/><circle cx="22.7" cy="11.1" r="0.7" fill="#e040e0"/><circle cx="1.2" cy="14.9" r="0.6" fill="#f040f0"/><circle cx="1.0" cy="20.6" r="1.6" fill="#f040f0"/><circle cx="13.9" cy="14.3" r="1.4" fill="#f040f0"/><circle cx="29.7" cy="4.3" r="1.2" fill="#e040e0"/><circle cx="24.5" cy="10.5" r="1.5" fill="#4080f0"/><circle cx="19.9" cy="8.6" r="1.2" fill="#6060f0"/></svg><div class="a" style="left:74.7px;top:66.8px;width:30.5px;height:8.3px;background:#333;border:1px solid #484848;border-radius:1px"></div><div class="s" style="left:72.0px;width:36.3px;text-align:center;transform:none;font-size:6.1px;top:67.8px;color:#c8c8c8">Star Chasers</div><div class="a" style="left:0.6px;top:77.0px;width:35.2px;height:45.3px;background:#383838;border:1px solid #343434;border-radius:2px"></div><svg class="a" style="left:1.9px;top:78.3px" width="32.3" height="32.6" viewBox="0 0 32 32" preserveAspectRatio="none"><rect width="32" height="32" fill="#000"/><g filter="url(#bl2)">
<path d="M0 4 C6 0 14 0 18 4 C20 12 18 24 12 32 L0 32Z" fill="#b06878" opacity="0.75"/>
<path d="M0 14 C4 10 8 14 10 22 C10 28 6 32 2 32 L0 32Z" fill="#d88060" opacity="0.8"/><path d="M0 26 L10 32 L0 32Z" fill="#000"/>
<path d="M22 10 C30 14 32 24 26 32 L32 32 L32 10Z" fill="#000"/>
</g>
<path d="M2 6 L8 2 M0 10 L10 4" stroke="#303040" stroke-width="1.5"/>
<path d="M12 1 C20 4 24 14 20 30" stroke="#fffbe0" stroke-width="3.5" fill="none" filter="url(#bl1)"/>
<path d="M14 0 C22 4 25 14 21 30" stroke="#f8e090" stroke-width="1.2" fill="none"/>
<path d="M22 0 L32 0 L32 6 C28 6 25 4 22 0Z" fill="#c09040"/>
<path d="M0 0 L6 0 L0 5Z" fill="#804030"/>
<path d="M4 26 L10 20" stroke="#f0d080" stroke-width="1.4"/></svg><div class="a" style="left:2.6px;top:112.6px;width:30.5px;height:8.3px;background:#333;border:1px solid #484848;border-radius:1px"></div><div class="s" style="left:-0.1px;width:36.3px;text-align:center;transform:none;font-size:6.1px;top:113.6px;color:#c8c8c8">Glowy</div><div class="a" style="left:36.5px;top:77.0px;width:35.2px;height:45.3px;background:#383838;border:1px solid #b8641e;border-radius:2px"></div><svg class="a" style="left:37.8px;top:78.3px" width="32.3" height="32.6" viewBox="0 0 32 32" preserveAspectRatio="none"><rect width="32" height="32" fill="#000"/><rect x="10.2" y="25.2" width="1.3" height="1.1" fill="#3070e8"/><rect x="21.1" y="19.5" width="1.3" height="1.1" fill="#e02080"/><rect x="8.3" y="6.0" width="1.3" height="1.1" fill="#d02040"/><rect x="20.8" y="3.4" width="1.3" height="1.1" fill="#9030d0"/><rect x="6.6" y="10.6" width="1.3" height="1.1" fill="#d02040"/><rect x="26.4" y="19.6" width="1.3" height="1.1" fill="#3070e8"/><rect x="8.1" y="17.2" width="1.3" height="1.1" fill="#d02040"/><rect x="17.5" y="11.3" width="1.3" height="1.1" fill="#2090e0"/><rect x="16.4" y="18.4" width="1.3" height="1.1" fill="#3070e8"/><rect x="31.6" y="16.5" width="1.3" height="1.1" fill="#3070e8"/><rect x="18.2" y="0.9" width="1.3" height="1.1" fill="#3070e8"/><rect x="24.9" y="4.4" width="1.3" height="1.1" fill="#9030d0"/><rect x="18.4" y="22.3" width="1.3" height="1.1" fill="#d02040"/><rect x="2.9" y="27.9" width="1.3" height="1.1" fill="#d02040"/><rect x="14.8" y="4.0" width="1.3" height="1.1" fill="#3070e8"/><rect x="7.6" y="18.2" width="1.3" height="1.1" fill="#2090e0"/><rect x="17.9" y="17.9" width="1.3" height="1.1" fill="#d02040"/><rect x="5.4" y="23.9" width="1.3" height="1.1" fill="#d02040"/><rect x="19.2" y="3.9" width="1.3" height="1.1" fill="#e02080"/><rect x="9.2" y="28.7" width="1.3" height="1.1" fill="#3070e8"/><rect x="24.3" y="11.6" width="1.3" height="1.1" fill="#3070e8"/><rect x="5.9" y="17.5" width="1.3" height="1.1" fill="#e02080"/><rect x="14.5" y="12.9" width="1.3" height="1.1" fill="#3070e8"/><rect x="9.8" y="21.5" width="1.3" height="1.1" fill="#9030d0"/><rect x="19.7" y="20.5" width="1.3" height="1.1" fill="#e02080"/><rect x="5.1" y="13.2" width="1.3" height="1.1" fill="#e02080"/><rect x="4.6" y="12.4" width="1.3" height="1.1" fill="#2090e0"/><rect x="13.0" y="10.8" width="1.3" height="1.1" fill="#3070e8"/><rect x="8.4" y="18.2" width="1.3" height="1.1" fill="#d02040"/><rect x="1.7" y="25.1" width="1.3" height="1.1" fill="#3070e8"/><rect x="12.9" y="15.9" width="1.3" height="1.1" fill="#e02080"/><rect x="15.0" y="13.2" width="1.3" height="1.1" fill="#2090e0"/><rect x="29.2" y="18.1" width="1.3" height="1.1" fill="#9030d0"/><rect x="24.1" y="15.5" width="1.3" height="1.1" fill="#9030d0"/><rect x="26.8" y="27.4" width="1.3" height="1.1" fill="#9030d0"/><rect x="26.4" y="3.8" width="1.3" height="1.1" fill="#e02080"/><rect x="29.0" y="16.8" width="1.3" height="1.1" fill="#2090e0"/><rect x="16.7" y="13.5" width="1.3" height="1.1" fill="#e02080"/><rect x="10.3" y="1.7" width="1.3" height="1.1" fill="#2090e0"/><rect x="28.8" y="23.4" width="1.3" height="1.1" fill="#2090e0"/><rect x="10.3" y="25.3" width="1.3" height="1.1" fill="#2090e0"/><rect x="28.1" y="7.8" width="1.3" height="1.1" fill="#9030d0"/><rect x="7.8" y="27.9" width="1.3" height="1.1" fill="#e02080"/><rect x="15.2" y="3.4" width="1.3" height="1.1" fill="#3070e8"/><rect x="17.4" y="21.0" width="1.3" height="1.1" fill="#3070e8"/><rect x="28.2" y="32.0" width="1.3" height="1.1" fill="#d02040"/><rect x="27.7" y="13.5" width="1.3" height="1.1" fill="#3070e8"/><rect x="7.1" y="23.9" width="1.3" height="1.1" fill="#2090e0"/><rect x="3.9" y="2.3" width="1.3" height="1.1" fill="#2090e0"/><rect x="25.4" y="4.0" width="1.3" height="1.1" fill="#2090e0"/><rect x="18.4" y="14.5" width="1.3" height="1.1" fill="#d02040"/><rect x="7.8" y="9.6" width="1.3" height="1.1" fill="#d02040"/><rect x="5.5" y="14.1" width="1.3" height="1.1" fill="#9030d0"/><rect x="26.1" y="12.7" width="1.3" height="1.1" fill="#d02040"/><rect x="22.2" y="7.4" width="1.3" height="1.1" fill="#d02040"/><rect x="1.0" y="28.8" width="1.3" height="1.1" fill="#d02040"/><rect x="10.4" y="4.6" width="1.3" height="1.1" fill="#9030d0"/><rect x="28.1" y="6.5" width="1.3" height="1.1" fill="#e02080"/><rect x="6.3" y="26.8" width="1.3" height="1.1" fill="#d02040"/><rect x="28.8" y="0.5" width="1.3" height="1.1" fill="#2090e0"/><rect x="6.5" y="20.2" width="1.3" height="1.1" fill="#3070e8"/><rect x="30.4" y="31.2" width="1.3" height="1.1" fill="#e02080"/><rect x="9.8" y="26.2" width="1.3" height="1.1" fill="#d02040"/><rect x="27.8" y="22.8" width="1.3" height="1.1" fill="#3070e8"/><rect x="10.7" y="30.6" width="1.3" height="1.1" fill="#9030d0"/><rect x="13.3" y="5.4" width="1.3" height="1.1" fill="#d02040"/><rect x="3.9" y="22.1" width="1.3" height="1.1" fill="#d02040"/><rect x="5.8" y="7.5" width="1.3" height="1.1" fill="#d02040"/><rect x="25.3" y="11.9" width="1.3" height="1.1" fill="#2090e0"/><rect x="28.3" y="18.9" width="1.3" height="1.1" fill="#3070e8"/><rect x="31.3" y="28.7" width="1.3" height="1.1" fill="#3070e8"/><rect x="21.3" y="8.9" width="1.3" height="1.1" fill="#e02080"/><rect x="14.8" y="2.4" width="1.3" height="1.1" fill="#2090e0"/><rect x="2.4" y="29.0" width="1.3" height="1.1" fill="#e02080"/><rect x="19.2" y="9.1" width="1.3" height="1.1" fill="#d02040"/><rect x="13.6" y="18.2" width="1.3" height="1.1" fill="#3070e8"/><rect x="9.1" y="24.2" width="1.3" height="1.1" fill="#3070e8"/><rect x="5.7" y="23.5" width="1.3" height="1.1" fill="#e02080"/><rect x="6.0" y="28.7" width="1.3" height="1.1" fill="#e02080"/><rect x="19.9" y="29.3" width="1.3" height="1.1" fill="#2090e0"/><rect x="12.3" y="29.7" width="1.3" height="1.1" fill="#9030d0"/><rect x="1.9" y="2.0" width="1.3" height="1.1" fill="#d02040"/><rect x="10.3" y="15.5" width="1.3" height="1.1" fill="#e02080"/><rect x="16.5" y="16.2" width="1.3" height="1.1" fill="#2090e0"/><rect x="23.8" y="17.0" width="1.3" height="1.1" fill="#2090e0"/><rect x="24.9" y="5.3" width="1.3" height="1.1" fill="#2090e0"/><rect x="13.9" y="21.4" width="1.3" height="1.1" fill="#2090e0"/><rect x="24.7" y="25.2" width="1.3" height="1.1" fill="#3070e8"/><rect x="8.3" y="17.4" width="1.3" height="1.1" fill="#2090e0"/><rect x="19.3" y="8.4" width="1.3" height="1.1" fill="#3070e8"/><rect x="19.1" y="22.9" width="1.3" height="1.1" fill="#2090e0"/><rect x="14.3" y="28.2" width="1.3" height="1.1" fill="#d02040"/><rect x="4.9" y="0.6" width="1.3" height="1.1" fill="#9030d0"/><rect x="25.8" y="16.1" width="1.3" height="1.1" fill="#d02040"/><rect x="27.4" y="1.0" width="1.3" height="1.1" fill="#e02080"/><rect x="29.0" y="18.2" width="1.3" height="1.1" fill="#2090e0"/><rect x="18.5" y="23.1" width="1.3" height="1.1" fill="#2090e0"/><rect x="4.7" y="10.0" width="1.3" height="1.1" fill="#e02080"/><rect x="22.3" y="26.2" width="1.3" height="1.1" fill="#2090e0"/><rect x="25.0" y="24.5" width="1.3" height="1.1" fill="#9030d0"/><rect x="2.8" y="26.3" width="1.3" height="1.1" fill="#3070e8"/><rect x="12.1" y="7.9" width="1.3" height="1.1" fill="#9030d0"/><rect x="22.1" y="26.6" width="1.3" height="1.1" fill="#9030d0"/><rect x="2.0" y="13.1" width="1.3" height="1.1" fill="#d02040"/><rect x="22.4" y="22.5" width="1.3" height="1.1" fill="#e02080"/><rect x="4.1" y="24.2" width="1.3" height="1.1" fill="#2090e0"/><rect x="31.6" y="4.6" width="1.3" height="1.1" fill="#9030d0"/><rect x="16.7" y="31.5" width="1.3" height="1.1" fill="#e02080"/><rect x="7.7" y="28.5" width="1.3" height="1.1" fill="#3070e8"/><rect x="2.9" y="17.8" width="1.3" height="1.1" fill="#9030d0"/><rect x="13.6" y="2.4" width="1.3" height="1.1" fill="#e02080"/><rect x="21.8" y="22.9" width="1.3" height="1.1" fill="#2090e0"/><rect x="7.4" y="8.1" width="1.3" height="1.1" fill="#2090e0"/><rect x="27.4" y="13.4" width="1.3" height="1.1" fill="#e02080"/><rect x="29.8" y="11.6" width="1.3" height="1.1" fill="#d02040"/><rect x="30.3" y="29.5" width="1.3" height="1.1" fill="#3070e8"/><rect x="1.3" y="12.9" width="1.3" height="1.1" fill="#e02080"/><rect x="23.6" y="18.2" width="1.3" height="1.1" fill="#2090e0"/><rect x="29.6" y="5.7" width="1.3" height="1.1" fill="#9030d0"/><rect x="29.9" y="6.8" width="1.3" height="1.1" fill="#9030d0"/><rect x="25.0" y="6.9" width="1.3" height="1.1" fill="#d02040"/><rect x="7.9" y="25.4" width="1.3" height="1.1" fill="#3070e8"/><rect x="15.4" y="12.8" width="1.3" height="1.1" fill="#2090e0"/><rect x="15.0" y="9.9" width="1.3" height="1.1" fill="#9030d0"/><rect x="15.7" y="20.1" width="1.3" height="1.1" fill="#3070e8"/><rect x="27.6" y="6.5" width="1.3" height="1.1" fill="#9030d0"/><rect x="13.4" y="1.5" width="1.3" height="1.1" fill="#d02040"/><rect x="11.6" y="8.8" width="1.3" height="1.1" fill="#e02080"/><rect x="16.6" y="23.7" width="1.3" height="1.1" fill="#2090e0"/><rect x="12.6" y="29.6" width="1.3" height="1.1" fill="#3070e8"/><path d="M0 10 C8 6 14 7 20 12 C26 17 29 22 32 24" stroke="#e8c838" stroke-width="1.3" fill="none" stroke-dasharray="1.6 0.8"/><path d="M0 8 C8 4 15 5 21 10 C27 15 30 20 33 22" stroke="#30b8e8" stroke-width="1" fill="none" stroke-dasharray="1.2 1"/><path d="M10 4 C16 10 20 16 30 22" stroke="#f08028" stroke-width="1.1" fill="none" stroke-dasharray="1.4 1"/></svg><div class="a" style="left:38.5px;top:112.6px;width:30.5px;height:8.3px;background:#333;border:1px solid #484848;border-radius:1px"></div><div class="s" style="left:35.8px;width:36.3px;text-align:center;transform:none;font-size:6.1px;top:113.6px;color:#c8c8c8">Disco Hall</div><div class="a" style="left:72.7px;top:77.0px;width:35.2px;height:45.3px;background:#383838;border:1px solid #343434;border-radius:2px"></div><svg class="a" style="left:74.0px;top:78.3px" width="32.3" height="32.6" viewBox="0 0 32 32" preserveAspectRatio="none"><rect width="32" height="32" fill="#000"/>
<path d="M0 8 C10 12 20 20 28 32" stroke="#f4f4f4" stroke-width="3.5" fill="none"/>
<path d="M0 0 C8 8 14 18 18 32" stroke="#e85070" stroke-width="2" fill="none"/>
<path d="M4 32 C10 20 20 8 32 0" stroke="#40b8b8" stroke-width="1.6" fill="none"/>
<path d="M10 0 C18 8 24 18 32 22" stroke="#fff" stroke-width="2.8" fill="none"/>
<path d="M22 32 C24 20 27 10 32 4" stroke="#e0a030" stroke-width="1.8" fill="none"/>
<path d="M0 16 C6 20 12 26 14 32" stroke="#f0b8c0" stroke-width="2.2" fill="none"/>
<path d="M18 0 C22 4 26 6 32 8" stroke="#e04848" stroke-width="1.6" fill="none"/>
<path d="M26 0 C28 10 29 20 28 32" stroke="#f0f0f0" stroke-width="1.2" fill="none"/></svg><div class="a" style="left:74.7px;top:112.6px;width:30.5px;height:8.3px;background:#333;border:1px solid #484848;border-radius:1px"></div><div class="s" style="left:72.0px;width:36.3px;text-align:center;transform:none;font-size:6.1px;top:113.6px;color:#c8c8c8">Grace</div><div class="a" style="left:113px;top:0;width:8px;height:123px;background:#2a2a2a"></div>
<div class="a" style="left:114px;top:1.3px;width:6px;height:5.2px;background:#5a5a5a;border-radius:1px"></div>
<svg class="a" style="left:115px;top:2.3px" width="4" height="3" viewBox="0 0 4 3"><path d="M0 3 L2 0 L4 3Z" fill="#ddd"/></svg>
<div class="a" style="left:114px;top:9px;width:5.5px;height:19.5px;background:#5c5c5c;border-radius:2px"></div>
<div class="a" style="left:114px;top:117.5px;width:6px;height:5.2px;background:#5a5a5a;border-radius:1px"></div>
<svg class="a" style="left:115px;top:118.8px" width="4" height="3" viewBox="0 0 4 3"><path d="M0 0 L2 3 L4 0Z" fill="#ddd"/></svg>
</div>
<svg class="a" style="left:0;top:420px" width="126" height="15" viewBox="0 420 126 15">
<g fill="#d8d8d8">
<rect x="6" y="424" width="1.8" height="1.8"/><rect x="8.6" y="424" width="1.8" height="1.8"/><rect x="11.2" y="424" width="1.8" height="1.8"/>
<rect x="6" y="426.6" width="1.8" height="1.8"/><rect x="8.6" y="426.6" width="1.8" height="1.8"/><rect x="11.2" y="426.6" width="1.8" height="1.8"/>
<rect x="6" y="429.2" width="1.8" height="1.8"/><rect x="8.6" y="429.2" width="1.8" height="1.8"/><rect x="11.2" y="429.2" width="1.8" height="1.8"/>
</g>
<rect x="68" y="423.6" width="9" height="9" fill="#d8d8d8"/>
<path d="M70.5 425.5 H75.5 M70.5 428 H75.5 M70.5 430.5 H75.5 M73 424 V432" stroke="#3b3b3b" stroke-width="0.7"/>
<g fill="none" stroke="#d8d8d8" stroke-width="1">
<rect x="83" y="424" width="8.5" height="8.5" rx="1.5"/>
<rect x="97" y="424" width="8.5" height="8.5" rx="1.5"/>
<rect x="111.3" y="424" width="8.5" height="8.5" rx="1.5"/>
<path d="M85 428.2 H89.5 M87.8 426.6 L89.6 428.2 L87.8 429.8"/>
<path d="M101.2 426 V430.5 M99 428.2 H103.5" stroke-width="1.2"/>
<path d="M113.3 428.2 H117.8" stroke-width="1.2"/>
</g>
</svg>


<!-- canvas -->
<div class="a" style="left:135px;top:101px;width:427px;height:267px;background:#000"></div>

<!-- ART --><svg class="a" style="left:0;top:0" width="700" height="437" viewBox="0 0 700 437"><defs><clipPath id="cc"><rect x="135" y="101" width="427" height="267"/></clipPath></defs><g id="art" clip-path="url(#cc)"><g stroke-linecap="round" fill="none"><path d="M162.3 125.8L161.3 128.9M157.9 130.4L158.5 125.9M163.0 133.7L161.0 129.9M166.8 134.1L162.7 133.8M165.7 152.8L163.9 149.9M161.0 158.5L161.8 156.0M162.5 161.4L165.0 159.4M158.7 164.6L158.2 161.5M163.2 164.2L163.4 161.3M159.5 163.0L158.3 167.3M163.4 167.1L163.3 172.0M166.3 188.0L161.6 186.4M164.4 204.6L165.7 202.3M165.7 204.7L162.6 202.8M166.2 208.5L166.1 213.3M161.4 218.1L162.2 215.0M170.8 131.5L174.1 129.7M169.1 133.6L173.5 134.8M184.6 146.2L183.3 150.9M182.3 148.4L183.2 151.7M183.6 159.6L180.9 159.4M187.5 167.3L185.1 165.0M186.4 165.7L188.0 168.5M183.9 174.1L183.6 169.6M188.6 177.2L187.3 173.9M182.3 176.6L182.6 179.2M185.3 181.5L187.1 178.2M185.1 185.0L182.7 183.2M180.9 186.3L181.7 189.6M183.4 192.0L184.5 188.0M183.0 189.1L180.4 192.7M179.8 196.3L182.4 193.0M166.6 203.9L168.5 200.9M164.7 204.8L169.4 203.4M214.6 113.8L214.0 110.1M209.8 137.7L209.3 132.8M212.6 136.8L215.1 139.0M209.4 138.3L209.6 141.3M211.7 142.7L212.1 140.5M213.9 147.3L213.5 144.9M211.2 148.0L216.0 147.1M210.1 153.6L212.3 149.6M215.9 159.5L216.0 154.8M219.5 166.3L221.4 164.1M217.4 168.8L218.6 165.2M217.8 173.7L213.8 171.6M216.3 182.8L216.9 186.4M220.2 188.1L218.4 184.5M222.1 192.2L222.1 187.9M220.0 200.2L222.0 197.3M219.0 213.7L217.0 211.7M227.5 137.4L226.4 133.5M223.6 139.2L224.5 134.8M226.9 149.3L230.0 152.5M229.5 152.8L231.3 156.9M226.7 157.5L227.4 159.6M225.6 161.0L222.2 161.2M224.7 169.6L226.7 165.7M226.1 173.3L225.4 177.0M223.4 175.6L223.5 179.2M229.6 186.3L228.0 181.7M229.7 186.1L228.3 189.5M224.0 187.2L222.0 191.2M228.4 191.9L226.2 190.0M225.2 195.6L227.2 198.8M227.8 199.9L230.1 201.8M265.4 111.1L266.7 109.0M263.0 113.5L264.7 111.2M269.1 114.1L267.6 118.7M267.7 121.7L267.7 117.6M263.3 118.3L262.7 122.2M266.2 121.9L264.8 124.2M264.3 142.3L262.6 140.3M267.4 144.6L268.0 142.3M263.8 145.7L265.2 143.4M257.1 155.9L254.8 157.6M266.3 162.7L267.8 161.1M257.4 167.4L257.1 169.9M264.6 179.6L264.6 183.1M260.0 188.3L262.9 186.3M255.9 190.4L253.7 193.9M257.3 198.1L254.7 202.0M247.6 124.7L252.5 124.9M256.8 120.7L256.4 117.7M273.1 111.4L275.9 112.1M278.1 109.3L281.4 111.6M290.0 119.7L292.6 121.1M285.6 127.8L282.1 126.9M292.4 123.3L294.7 124.9M289.2 138.6L286.3 135.3M299.5 151.2L297.7 146.7M296.5 149.3L298.4 150.8M299.7 150.9L297.2 154.0M297.2 156.4L295.8 160.7M295.3 164.5L292.6 160.8M299.6 166.4L297.6 169.9M294.3 172.0L293.1 167.8M299.1 176.3L302.3 174.2M291.9 180.3L291.0 176.4M303.2 187.4L303.2 185.0M298.6 190.8L300.5 186.8M298.6 197.2L297.8 194.9M296.5 194.6L297.3 198.2M303.7 198.6L303.8 196.1M300.6 204.6L300.8 208.2M307.2 213.5L305.6 210.1M303.2 231.8L304.0 228.0M270.1 176.5L273.9 174.3M275.8 173.2L271.5 171.5M277.0 172.1L274.1 173.5M282.6 176.1L285.4 173.3M346.1 133.8L346.1 137.5M344.7 150.5L343.2 153.7M344.4 156.6L344.6 154.3M346.1 179.4L345.5 176.1M340.7 180.4L341.8 183.7M344.3 197.2L343.2 194.4M345.3 200.3L343.0 197.3M348.9 198.6L347.3 201.8M346.2 207.5L345.8 202.9M347.9 217.1L345.7 220.6M350.3 226.9L350.7 229.6M349.8 236.1L347.5 238.5M348.7 186.6L348.1 182.9M353.5 202.5L352.0 198.9M353.5 210.2L352.8 207.3M350.8 184.5L354.1 184.2M358.3 173.2L355.7 175.3M359.7 168.0L357.1 171.1M363.2 163.0L362.2 159.5M367.3 156.6L366.6 159.9M368.9 154.9L368.1 159.1M372.9 146.0L370.8 149.0M379.3 132.1L383.8 131.4M385.8 127.9L383.2 128.9M383.4 127.5L386.2 126.4M357.9 186.5L358.7 189.2M357.6 193.3L358.2 195.4M361.6 202.4L359.6 201.4M370.3 204.3L367.5 203.5M381.7 209.2L383.9 212.5M392.2 215.1L389.5 212.5M389.2 214.3L392.9 216.2M393.6 218.4L390.9 214.9M398.1 212.3L395.8 210.1M375.0 205.8L375.8 209.0M374.9 209.8L379.9 210.0M379.9 215.3L378.7 212.1M396.4 213.9L393.7 212.1M431.1 141.0L427.0 140.3M440.5 144.5L436.6 142.6M440.7 143.2L438.2 142.6M445.0 137.9L447.5 137.0M449.1 139.5L445.8 138.1M445.9 146.9L444.1 144.4M453.6 144.7L454.8 142.8M454.6 148.8L456.4 150.8M454.0 152.0L455.8 153.7M458.7 154.8L460.6 156.1M458.2 160.2L455.7 159.6M461.1 159.5L462.8 161.7M465.3 169.1L466.5 172.8M462.0 176.5L463.2 172.7M467.3 180.3L465.8 182.6M457.8 179.4L456.7 181.7M464.9 188.3L463.8 185.0M447.5 207.7L445.2 207.4M444.3 200.2L440.3 202.5M440.5 203.8L435.8 204.3M433.0 205.7L436.4 206.1M435.6 204.5L432.0 204.5M428.5 208.7L431.6 207.0M427.9 212.9L430.7 210.3M420.9 203.2L423.8 202.6M414.9 204.6L417.8 204.2M405.5 187.1L406.0 191.2M406.0 190.4L403.8 186.4M404.9 182.0L405.1 185.7M402.6 182.2L401.1 183.9M398.4 183.6L397.8 180.6M396.6 180.0L394.8 177.0M403.3 164.7L403.1 167.2M404.1 158.1L406.6 157.3M416.1 150.3L418.8 146.6M424.6 145.0L422.1 144.8M433.7 158.9L436.8 161.3M487.9 139.3L485.3 138.7M484.1 142.8L481.4 139.6M489.7 143.5L487.7 140.7M488.8 145.2L486.8 141.9M489.9 149.8L493.1 151.7M491.4 151.4L491.3 155.5M499.6 173.6L497.9 172.0M496.0 172.0L497.0 176.7M500.6 185.5L499.3 180.8M502.0 182.7L503.8 184.1M503.7 189.4L501.9 186.5M504.8 191.2L506.2 194.3M519.5 105.5L517.2 101.9M524.3 104.0L521.1 107.2M519.0 121.3L517.2 119.0M521.2 119.1L521.0 122.2M518.8 136.0L521.1 134.9M521.6 139.0L523.2 142.1M522.4 146.0L518.9 148.6M525.6 148.9L526.0 152.3M518.9 156.6L521.2 153.6M522.9 163.6L521.1 161.0M516.6 171.6L518.2 167.7M517.6 176.8L517.5 172.6M523.6 178.0L522.8 182.1M521.3 184.0L521.6 189.0M518.4 193.0L518.2 190.2M518.7 194.6L520.9 197.5M516.0 196.9L517.8 199.6M521.2 199.2L521.9 201.6M518.1 202.6L519.3 199.3M513.6 217.0L512.8 213.9M521.5 219.1L522.6 216.4M514.1 216.4L514.2 219.2M517.3 220.8L514.4 217.3M512.8 228.2L514.2 224.1M512.0 235.6L512.8 239.3M512.3 236.3L511.2 239.2M515.7 240.0L515.4 235.4M516.3 244.9L520.9 243.0M515.1 250.1L518.7 249.9M507.0 219.9L506.8 217.3M513.9 218.2L513.6 220.8M505.0 221.8L506.6 224.3M515.8 248.7L513.9 250.2" stroke="#e82a3a" stroke-width="2.0"/><path d="M163.4 128.9L165.4 130.1M161.5 160.8L161.8 157.3M161.5 176.8L160.9 180.7M163.0 177.8L161.1 182.0M161.4 186.2L160.2 191.1M160.0 195.6L159.5 199.4M169.6 130.8L172.0 130.3M185.7 158.7L186.0 154.4M182.4 155.2L180.4 159.5M189.9 168.2L192.9 167.6M182.0 174.4L182.7 179.0M210.9 119.8L212.6 117.9M215.4 145.4L216.4 143.4M212.7 148.0L212.9 150.7M217.5 158.6L216.5 162.8M216.1 164.3L212.3 167.2M212.7 176.3L212.7 173.4M218.8 173.0L219.2 177.4M217.7 178.1L219.7 179.8M220.4 190.3L222.6 193.0M222.1 203.5L223.0 199.9M222.8 201.6L220.5 205.0M227.4 148.5L227.4 146.2M228.1 152.3L224.2 153.1M228.6 167.1L227.2 169.1M226.4 177.6L227.6 174.9M266.2 117.7L266.5 113.7M262.9 128.0L265.3 126.2M263.1 128.1L263.1 125.6M264.8 133.6L263.2 135.7M256.1 160.0L256.9 155.4M268.2 168.0L267.0 170.5M266.6 186.3L265.4 188.3M258.1 192.2L259.5 196.5M251.3 122.4L248.7 125.0M256.9 117.4L254.6 121.3M259.4 116.7L259.2 119.8M268.3 112.9L263.8 113.8M283.7 124.9L280.3 121.5M284.7 123.5L286.0 125.4M290.3 139.4L291.1 142.5M293.6 141.5L293.2 144.2M292.5 141.3L291.7 145.4M300.0 144.3L299.6 148.6M299.2 159.0L298.1 161.2M292.3 167.9L292.2 170.7M296.4 182.4L295.9 177.9M296.7 190.7L296.2 193.2M298.5 196.8L297.9 192.5M307.9 205.7L305.9 202.8M303.2 206.9L303.7 210.6M299.3 222.4L299.4 219.1M281.0 171.2L278.2 171.5M287.9 173.3L285.9 171.6M294.8 174.9L290.8 173.0M296.3 171.1L300.5 171.3M338.9 129.0L337.7 124.5M336.8 129.8L336.9 132.1M333.4 131.1L335.2 134.1M342.2 133.8L342.8 131.2M342.4 154.3L339.0 151.7M343.2 155.4L343.8 152.5M338.3 179.1L340.3 174.6M347.7 178.4L346.9 175.8M345.0 182.4L347.3 181.8M342.7 182.0L345.8 185.4M343.2 191.7L344.8 189.0M348.5 202.3L347.8 199.7M345.4 203.8L344.5 200.0M344.7 207.9L344.3 204.3M344.2 207.7L345.6 210.3M350.0 213.9L352.1 217.7M344.1 229.1L341.5 226.3M347.6 233.3L346.8 237.7M367.4 168.2L365.2 169.3M367.9 161.8L366.7 163.8M372.4 152.6L375.7 150.9M375.3 145.6L374.0 147.8M380.9 140.1L378.2 144.3M382.7 124.3L383.7 128.3M387.1 118.4L389.4 117.0M355.0 193.1L351.3 192.2M362.4 199.4L360.7 195.6M424.8 149.3L421.9 150.0M420.0 143.2L421.9 141.3M424.5 144.0L427.8 142.0M449.6 142.8L451.2 146.0M461.2 161.9L460.6 158.3M463.2 163.1L462.7 166.1M453.6 197.6L451.2 199.7M444.7 209.7L441.6 210.9M437.1 207.7L432.9 206.9M415.6 206.0L418.9 209.4M413.6 193.0L417.1 196.0M409.9 196.8L405.9 197.4M401.7 194.9L406.0 194.3M405.3 186.4L401.6 183.9M406.5 156.6L405.8 153.2M484.1 130.8L480.2 130.9M482.9 136.9L483.1 140.4M487.9 161.8L489.9 159.0M496.8 164.0L498.5 166.6M494.5 178.9L493.5 174.6M502.1 189.6L499.1 192.5M521.1 115.0L521.2 117.2M523.1 122.2L522.9 124.5M523.3 134.9L521.5 130.6M520.2 137.8L520.5 135.1M520.8 145.2L519.3 141.3M523.8 158.5L521.1 161.4M523.0 171.1L523.3 174.5M520.1 178.0L520.1 175.3M520.3 179.0L519.7 176.7M521.2 193.2L519.5 188.7M516.0 193.9L514.9 197.8M522.3 206.2L521.4 210.8M515.6 250.1L515.4 254.8M506.7 209.6L505.7 205.1M502.5 215.2L506.7 214.4M516.1 219.0L514.1 215.7M517.2 238.7L516.3 240.7M511.9 241.0L512.4 243.6" stroke="#9040c4" stroke-width="2.0"/><path d="M159.6 132.7L160.5 129.0M161.6 146.7L165.4 143.8M158.1 155.4L159.6 151.5M159.2 155.1L160.7 152.4M162.7 168.5L162.1 165.6M164.7 174.5L166.6 175.8M161.3 184.9L161.7 182.1M165.5 185.3L162.3 184.0M160.0 195.0L156.7 193.6M163.3 194.0L160.6 197.7M160.0 200.4L162.0 197.1M160.2 205.2L159.7 207.7M165.4 214.8L161.9 213.4M162.1 217.2L159.3 213.1M162.8 221.0L162.3 225.5M162.0 221.4L162.6 226.2M170.3 135.2L170.8 139.6M189.9 149.3L187.7 148.1M187.5 154.6L188.0 150.6M183.8 153.2L188.1 154.6M189.5 159.8L190.7 161.9M182.8 160.1L178.9 162.9M183.5 169.2L185.4 167.7M185.4 171.5L186.7 174.9M187.2 176.5L188.0 172.8M187.0 174.6L188.5 179.2M189.6 181.7L188.6 178.1M190.4 181.8L189.3 186.4M181.0 198.2L181.4 195.3M177.4 196.7L174.2 198.6M176.3 197.7L172.7 200.6M213.9 110.6L212.5 108.3M211.9 115.1L216.0 117.7M214.2 120.1L213.5 115.4M213.1 139.8L215.5 143.8M215.8 165.4L213.4 162.2M216.0 162.5L217.9 164.9M217.2 167.9L213.7 164.3M221.3 173.7L221.0 171.4M220.6 180.2L221.7 177.0M216.3 194.4L215.0 190.3M216.2 207.0L218.4 203.3M217.4 206.7L219.0 208.8M218.5 212.2L217.0 216.5M226.9 166.3L227.3 170.7M226.1 167.2L225.9 171.1M226.6 173.9L225.4 170.9M224.3 190.0L224.5 192.8M224.2 200.3L226.1 198.8M226.9 201.6L226.6 204.8M225.5 205.1L224.7 202.3M265.5 130.1L264.2 126.8M263.8 127.3L264.6 130.9M268.7 139.6L266.0 142.5M261.6 143.8L264.2 145.9M261.9 160.2L262.3 156.1M266.5 160.2L265.1 156.5M264.5 166.9L262.3 163.5M254.8 172.7L254.5 176.6M263.1 181.3L263.5 176.9M264.4 187.2L266.7 190.3M256.0 190.5L256.4 194.7M263.4 204.5L263.8 200.1M264.5 206.6L263.7 210.0M258.9 112.9L257.3 115.4M273.0 113.0L269.1 110.1M274.3 112.2L278.2 112.6M277.2 110.7L275.9 114.9M284.2 108.6L285.6 112.2M287.8 117.5L291.4 119.9M293.4 134.8L291.0 130.7M296.1 153.7L299.1 156.6M299.0 163.7L298.1 160.4M293.0 166.6L292.5 163.3M295.3 169.3L298.9 171.3M298.7 180.9L300.6 176.8M295.9 201.1L296.0 204.6M303.5 211.0L305.6 208.3M307.6 226.5L306.2 222.9M306.3 226.5L306.9 224.1M303.8 232.6L302.4 230.8M265.7 170.9L263.9 174.9M277.2 170.5L274.7 171.5M276.7 174.3L279.1 171.6M280.5 170.4L277.6 172.4M281.8 173.9L278.2 177.1M294.4 174.3L291.0 173.4M295.3 170.8L298.5 174.2M307.7 174.1L305.7 175.6M338.4 127.0L339.9 130.9M340.0 130.6L337.1 134.6M340.4 147.6L340.6 150.0M336.9 152.5L337.6 148.7M342.2 153.4L344.5 150.4M341.2 160.6L345.3 162.8M340.4 161.8L341.5 165.4M348.7 170.4L346.2 166.2M340.3 168.2L341.0 171.3M349.6 176.0L349.0 173.2M344.0 188.1L346.6 184.2M340.3 188.0L338.9 185.5M346.0 189.4L346.4 187.0M346.5 200.2L349.6 198.7M346.6 202.8L349.4 203.4M345.9 207.1L347.9 203.6M344.4 217.3L345.3 215.3M346.5 222.2L343.2 221.4M349.0 228.6L345.7 231.4M348.1 231.5L347.7 234.7M347.1 163.2L345.8 165.9M348.2 170.7L349.2 173.5M345.8 174.3L349.5 172.4M351.7 181.0L347.5 182.7M350.8 200.6L351.3 204.9M354.4 203.2L352.2 206.3M357.1 178.4L360.5 181.1M361.1 171.7L361.7 174.4M365.0 159.6L365.7 157.4M373.5 158.3L373.5 155.7M372.2 155.3L373.7 153.7M372.5 148.8L373.7 146.5M371.4 143.7L373.6 147.6M374.8 143.3L374.2 147.3M377.3 134.8L380.5 137.2M381.7 129.5L378.7 131.0M352.0 191.6L350.1 189.9M357.8 196.8L353.7 195.9M374.2 203.6L372.2 200.5M375.5 206.6L378.1 207.1M377.4 211.3L373.5 209.4M379.9 210.3L377.9 207.8M378.0 211.3L380.7 210.9M393.2 212.8L396.1 215.5M400.0 213.0L402.6 215.9M381.6 212.2L384.0 213.7M395.1 215.2L398.1 217.2M421.2 150.3L417.0 150.4M422.3 143.8L426.6 143.1M429.0 140.3L433.3 138.9M438.2 141.5L434.6 144.0M439.6 139.4L441.7 140.9M448.5 146.5L445.8 143.7M453.3 146.7L457.8 146.2M456.5 147.5L458.2 149.9M461.0 149.3L458.6 145.5M462.3 147.9L462.4 151.7M457.6 152.2L457.8 156.5M459.9 160.2L461.1 156.0M462.7 163.2L463.4 159.1M457.5 164.4L458.8 167.6M459.7 170.2L461.3 173.3M464.6 178.9L466.7 177.7M461.7 182.9L460.5 185.3M455.9 189.9L456.9 186.3M451.8 190.3L455.5 188.3M461.0 193.9L464.0 196.1M456.3 199.0L457.1 194.7M453.0 195.7L449.4 194.8M452.5 199.3L450.7 202.2M434.8 206.8L431.5 206.4M423.7 199.5L425.9 200.9M424.2 198.2L419.8 197.3M412.7 190.8L412.2 195.2M407.4 192.5L409.7 195.7M410.9 192.1L407.9 191.0M402.2 178.3L400.6 180.2M401.1 175.7L403.2 172.8M409.2 148.2L406.7 149.5M411.4 145.4L409.2 146.2M415.2 145.7L414.6 149.2M427.0 148.5L430.7 149.5M431.7 158.2L436.4 158.8M488.9 142.3L487.8 139.1M488.2 149.5L484.6 149.6M495.7 156.1L492.6 156.6M494.7 166.8L494.6 163.2M499.4 182.0L497.4 177.8M501.6 180.9L500.1 182.8M502.8 181.8L502.7 186.5M496.0 188.6L499.1 184.9M502.0 191.2L498.4 188.4M504.5 192.7L501.0 191.8M504.6 194.0L503.9 196.3M503.5 197.4L508.0 198.6M506.6 200.8L506.1 198.0M503.0 205.1L503.4 202.7M521.0 103.5L523.5 100.4M521.5 125.2L525.0 127.9M524.6 125.2L524.8 129.9M521.4 131.5L523.2 135.4M517.4 136.9L517.3 131.9M520.8 137.3L518.9 133.7M524.5 146.6L525.9 143.0M525.9 175.1L523.8 173.2M519.0 179.7L515.2 176.8M517.7 178.2L516.7 180.5M515.0 185.5L518.5 188.1M519.4 189.6L518.2 187.6M525.0 189.0L522.9 192.1M522.7 193.3L522.0 198.1M523.1 195.0L519.3 197.1M520.1 195.9L517.8 198.8M518.1 206.4L517.5 203.1M514.2 208.8L513.9 204.1M519.7 215.9L520.6 212.5M520.2 223.6L518.8 226.7M519.3 228.2L515.9 231.8M519.3 235.4L517.7 237.2M512.3 239.6L511.8 236.9M513.5 246.0L515.1 243.5M515.9 246.2L513.1 247.1M514.5 245.9L517.0 249.6M514.2 252.9L513.1 249.0M505.9 206.9L508.0 211.0M512.7 207.8L512.5 212.8M509.3 209.3L509.7 213.3M507.9 216.3L505.5 213.5M505.2 217.0L503.9 214.8M510.5 213.5L509.7 218.4M510.3 217.7L511.3 222.6M511.3 230.2L512.8 232.3M513.1 240.4L512.8 244.0" stroke="#22aee6" stroke-width="2.0"/><path d="M160.9 128.9L161.1 132.3M159.4 143.1L161.3 140.9M164.0 148.2L165.4 145.5M160.7 163.1L162.0 159.9M161.9 175.2L163.8 171.1M158.9 194.7L162.0 192.6M161.4 209.4L162.1 213.9M173.6 136.0L177.1 135.7M178.1 136.1L178.8 139.7M186.8 165.7L186.1 161.0M187.3 168.9L187.4 171.9M185.1 182.5L184.1 177.6M182.2 190.4L181.3 186.8M186.6 191.7L183.5 195.0M180.0 199.9L182.0 195.8M173.3 200.6L174.5 196.3M174.4 202.2L171.2 201.9M213.3 122.8L211.8 120.1M215.6 135.9L214.6 139.9M214.3 142.8L212.8 145.2M211.9 148.8L212.6 152.2M218.3 157.4L217.8 162.2M216.7 183.0L217.1 178.9M219.7 185.0L222.8 183.6M218.6 188.8L220.5 184.3M221.7 192.6L221.6 196.6M228.2 139.1L226.3 135.1M227.5 136.9L230.1 139.7M228.0 147.6L226.7 145.8M227.2 150.5L226.9 154.6M223.2 178.2L223.9 180.8M225.3 181.1L225.0 178.5M223.5 192.6L228.0 194.7M224.7 194.3L224.3 198.4M224.4 201.9L227.1 203.3M227.4 206.8L226.8 209.2M213.0 135.9L214.1 132.6M266.4 110.0L263.2 112.7M258.3 124.0L260.3 127.6M265.0 158.3L265.7 155.8M261.1 162.1L264.0 160.6M259.5 160.3L261.7 161.4M263.2 166.4L264.1 163.2M259.8 169.3L260.5 172.7M257.9 174.0L258.1 176.6M256.6 180.1L258.7 183.8M262.6 187.9L262.4 191.0M251.8 203.7L255.6 205.1M269.0 107.0L265.7 106.7M277.3 119.9L277.1 116.3M290.2 133.8L290.6 130.5M290.2 135.9L291.3 131.6M292.0 132.9L293.7 134.9M295.2 138.5L296.4 136.1M293.3 140.0L292.6 137.1M295.1 147.3L297.2 149.7M298.2 149.6L297.1 153.5M292.0 160.3L291.5 155.7M298.1 174.3L297.4 178.2M292.4 184.3L294.1 187.3M296.5 189.7L297.4 192.1M298.6 212.5L300.7 208.1M307.4 209.2L307.5 211.8M296.0 216.2L297.6 211.9M303.5 214.8L303.4 218.0M297.9 230.9L300.3 228.0M306.7 232.1L306.3 229.1M261.8 177.4L264.7 173.6M268.9 172.3L271.7 174.3M271.7 172.2L275.4 174.5M282.0 173.9L283.7 171.7M287.1 171.7L282.7 172.8M345.7 132.4L345.3 128.2M337.2 134.4L337.6 138.2M339.5 141.5L341.8 139.9M342.1 143.6L340.1 141.5M343.5 143.4L340.3 146.4M337.7 186.1L340.9 183.7M348.1 195.8L345.6 192.9M344.8 201.0L344.6 204.3M341.6 205.3L342.8 202.8M349.2 229.7L347.4 232.3M346.3 169.1L342.9 171.8M346.9 181.8L344.6 177.8M347.3 181.7L347.2 184.8M347.7 188.4L349.9 191.4M349.7 195.5L351.3 197.5M350.7 199.1L350.8 201.6M353.2 180.8L352.7 184.8M361.0 177.3L362.0 173.6M370.1 157.0L368.4 161.5M374.2 140.8L372.9 136.2M382.5 138.3L381.3 142.7M384.1 131.6L382.2 136.1M350.6 190.0L348.9 187.1M361.5 195.5L364.5 196.1M363.5 199.5L365.8 200.0M372.8 200.1L370.5 201.5M374.8 198.7L378.3 200.7M380.1 212.5L377.8 209.8M385.6 208.0L382.7 207.2M385.2 212.4L382.6 212.0M418.7 147.5L416.3 148.3M421.1 145.6L425.5 143.6M419.9 140.2L422.4 137.7M449.4 141.5L453.0 138.6M457.7 162.4L457.1 164.6M464.1 163.5L465.0 166.0M463.3 168.1L465.3 170.9M459.4 176.9L458.0 173.8M457.4 181.4L456.9 179.1M455.6 186.6L458.4 183.4M459.1 186.4L457.6 190.0M417.1 201.2L419.5 202.9M416.2 193.6L412.1 193.8M405.9 182.3L408.3 181.6M405.3 178.9L405.7 183.0M398.6 175.1L398.7 170.3M404.4 159.0L406.6 161.4M408.5 153.1L409.6 157.6M410.9 151.7L407.2 153.6M415.8 150.8L413.4 153.3M413.1 145.1L411.4 147.1M483.8 132.7L484.5 135.4M485.9 137.5L484.9 142.2M491.3 152.2L488.3 148.9M496.4 171.3L495.0 173.3M505.9 200.6L507.7 202.3M506.7 204.4L508.9 207.3M522.7 103.4L524.5 105.9M523.4 121.9L522.8 124.4M524.0 125.6L526.7 122.2M520.3 130.3L520.4 134.6M521.8 139.1L520.2 135.6M519.9 149.9L522.7 147.1M525.6 147.3L521.9 150.5M523.8 165.9L524.9 168.7M522.0 165.5L520.9 169.9M515.1 177.4L516.9 180.9M520.6 180.8L518.4 182.4M518.1 186.2L516.5 181.8M517.0 205.0L518.6 208.6M515.3 212.0L517.3 209.7M519.9 222.9L521.9 220.3M516.8 228.4L517.5 224.5M517.9 226.1L517.8 229.4M518.1 232.3L517.6 234.8M512.7 238.9L515.3 242.1M515.4 248.9L513.8 253.2M516.7 253.4L515.5 250.5" stroke="#e01c84" stroke-width="2.5"/><path d="M162.8 134.0L163.4 130.2M158.0 139.2L157.5 141.4M159.9 142.9L157.1 139.6M163.0 144.3L160.7 147.6M159.5 150.1L161.5 147.3M164.1 148.9L165.6 152.2M163.6 157.3L166.2 153.4M156.4 159.1L158.1 156.4M160.6 168.2L161.2 163.7M162.1 181.6L159.8 180.3M162.4 210.7L163.4 213.1M162.4 213.1L163.6 217.9M161.8 214.3L161.8 217.7M160.9 222.3L160.9 218.4M171.0 135.1L167.5 134.7M183.6 150.2L187.8 150.8M184.0 195.1L184.8 190.5M166.9 205.9L169.0 206.8M213.9 114.6L213.1 110.0M216.1 119.2L213.9 117.7M214.7 137.8L212.8 134.5M214.1 144.4L215.6 148.0M218.8 151.5L218.7 155.0M216.5 184.5L214.5 186.0M222.1 204.2L225.2 201.7M224.1 203.8L220.7 205.3M222.6 207.7L224.8 206.2M226.4 145.0L223.7 141.6M224.8 150.0L223.8 147.4M227.8 189.8L227.4 186.7M221.3 208.9L223.5 210.9M265.2 115.4L268.6 111.9M263.8 126.7L261.5 123.3M256.6 172.0L254.6 167.7M263.8 175.7L263.9 178.6M263.8 177.2L262.4 179.4M253.3 190.9L255.4 188.0M254.3 190.1L252.7 192.3M264.2 210.1L261.2 207.2M263.3 111.1L261.2 112.3M272.0 105.7L270.1 108.5M277.4 115.7L277.9 111.4M288.8 127.3L286.9 125.2M300.4 149.9L300.5 153.4M299.8 157.1L295.0 158.4M296.4 157.1L296.4 160.3M295.1 158.1L297.7 161.7M296.5 164.2L298.6 167.1M296.4 185.4L296.7 183.0M301.1 188.4L302.2 186.4M298.8 187.4L297.3 190.5M306.7 196.1L306.1 192.7M305.5 199.4L308.0 201.2M302.5 205.8L301.4 201.9M306.9 210.5L303.4 207.4M302.1 230.0L304.3 227.2M268.3 175.2L264.5 174.4M306.4 174.4L309.0 172.5M307.4 172.3L311.2 175.0M338.9 124.3L337.7 129.0M343.5 128.8L343.4 126.4M340.2 135.7L342.9 133.7M346.3 149.1L343.3 150.5M345.9 163.9L344.4 167.6M336.3 167.3L338.7 169.6M339.4 175.0L337.3 173.2M344.7 184.4L340.9 181.2M344.1 191.8L343.3 187.9M349.8 200.2L352.6 204.0M353.2 226.4L351.9 222.0M346.8 166.0L347.1 170.7M346.4 186.9L346.9 189.4M351.0 184.3L351.0 186.6M359.0 169.5L361.1 166.6M363.2 166.1L366.0 164.4M368.6 158.1L371.5 155.5M370.7 152.2L370.6 155.1M380.3 144.3L379.5 148.4M389.7 120.7L389.2 116.5M386.3 115.4L388.2 113.9M386.6 112.7L388.2 114.5M356.4 189.2L351.7 188.9M363.1 190.9L359.4 189.1M368.0 197.2L370.5 196.0M373.4 203.3L376.5 202.7M375.9 207.2L373.1 206.6M386.1 204.5L383.6 201.8M398.7 215.1L395.6 216.7M397.4 216.6L401.1 217.9M397.0 218.2L399.9 221.9M419.1 148.1L419.2 151.5M419.5 144.3L422.0 143.0M423.1 148.8L421.3 150.8M441.5 139.5L443.8 140.5M456.4 143.8L458.9 146.2M458.4 153.1L459.9 156.9M463.9 177.6L461.5 179.9M455.7 191.9L451.3 193.8M441.9 211.0L445.0 210.3M406.1 199.2L404.3 196.2M403.0 185.9L403.6 189.7M395.8 179.4L400.2 181.1M413.8 149.2L417.0 148.4M432.5 151.7L435.8 152.3M481.7 126.9L481.2 122.9M481.3 132.1L480.4 127.6M498.9 171.4L496.4 169.3M492.7 174.4L494.7 175.5M499.0 178.7L498.5 183.3M499.7 190.8L501.9 194.0M521.4 116.8L522.4 112.5M527.1 119.8L525.1 123.4M521.5 122.6L520.4 126.4M520.0 139.0L521.4 136.3M518.3 141.9L518.8 138.3M522.3 157.3L519.5 154.4M525.8 159.6L523.6 156.3M518.7 187.0L515.3 189.3M516.7 216.5L517.5 213.2M518.3 220.8L516.6 225.3M519.5 220.5L518.9 225.4M520.5 231.5L519.3 226.9M518.0 239.7L514.5 241.6M518.7 243.3L518.0 240.2M513.2 249.0L513.5 252.0M516.0 251.4L515.7 255.7M510.0 208.7L509.0 211.2M507.5 221.1L509.5 216.8M507.4 220.3L505.8 222.6M508.5 226.5L509.6 223.7M516.3 251.2L516.7 248.5M509.0 253.7L512.7 254.2" stroke="#ecc42a" stroke-width="2.5"/><path d="M158.8 131.6L158.1 134.6M161.3 143.1L160.0 146.4M160.7 158.8L161.1 153.9M161.4 161.7L159.3 158.7M160.9 163.4L163.4 164.3M165.1 163.5L165.4 168.2M160.4 182.8L163.2 182.1M159.5 197.9L160.7 200.2M160.9 207.5L162.4 205.0M160.4 135.1L164.4 133.9M162.4 129.9L166.2 131.0M171.6 130.6L167.7 132.6M174.6 137.6L172.0 136.5M174.1 143.5L177.9 145.6M182.3 142.5L184.7 142.9M179.0 144.7L182.9 147.6M184.1 146.1L187.8 147.2M180.9 155.0L185.2 156.2M180.3 160.4L183.4 163.2M184.9 162.0L184.7 165.0M171.2 199.4L173.7 199.1M211.5 107.1L213.7 104.5M212.4 135.2L213.0 139.6M214.3 157.1L214.8 152.4M216.4 157.6L216.5 161.4M216.1 167.1L217.4 169.2M220.0 183.7L217.8 184.5M219.3 199.1L217.3 197.7M218.9 197.6L220.3 200.7M217.6 212.9L216.8 208.5M220.8 213.8L218.3 212.1M217.6 212.9L219.6 215.9M225.1 132.7L228.1 136.0M223.4 135.6L224.8 133.7M229.4 139.8L231.3 144.2M229.4 159.8L226.7 157.0M227.1 159.3L229.1 160.3M230.5 166.8L229.8 162.1M225.0 166.4L225.7 163.6M223.5 163.5L222.8 167.4M228.9 202.3L228.3 199.4M211.4 140.7L213.6 136.2M265.8 109.4L267.8 111.2M267.9 115.0L268.4 112.6M257.8 119.6L259.2 117.0M262.9 118.9L266.7 120.9M259.7 140.6L258.5 143.1M261.8 147.0L261.9 144.6M264.9 155.1L268.1 152.1M266.3 164.8L265.8 168.5M258.0 174.2L257.5 169.9M259.3 181.3L259.5 183.5M263.6 201.0L263.1 197.9M257.1 124.7L260.0 121.5M259.5 121.2L256.9 124.4M262.1 119.5L259.4 120.5M260.0 114.6L256.1 116.6M290.9 128.1L287.2 127.7M289.1 159.3L290.9 163.9M300.9 175.9L297.8 173.0M302.2 177.6L302.7 181.7M303.9 183.6L303.0 187.2M294.8 200.6L294.3 196.8M302.5 210.6L302.3 212.9M298.8 218.9L303.2 219.0M265.2 172.0L267.7 171.7M270.6 174.3L273.4 175.4M290.3 174.3L289.9 176.8M293.9 173.0L297.7 171.9M297.7 177.1L300.4 177.3M341.4 126.0L339.0 121.9M342.7 125.7L339.0 123.4M340.6 132.8L337.7 130.6M343.1 148.2L344.8 144.6M338.4 157.2L340.8 160.8M340.0 161.1L339.5 156.8M346.4 165.1L346.0 160.1M341.2 182.3L342.0 184.4M339.8 182.9L339.7 187.4M345.1 185.8L341.4 189.1M344.5 193.4L346.9 196.3M348.7 216.9L349.6 221.3M349.5 238.9L350.0 236.1M343.6 163.7L344.1 167.6M354.2 176.4L358.5 176.1M377.1 148.5L379.9 145.2M373.0 140.9L374.1 142.9M382.7 145.0L381.0 141.8M381.0 131.2L380.8 126.7M385.9 117.4L384.9 119.7M350.8 190.4L348.4 189.3M369.1 199.8L365.5 196.4M372.9 197.4L368.9 200.1M378.9 202.2L376.2 201.8M374.7 205.8L378.7 206.2M390.3 210.2L386.3 209.4M401.3 217.8L400.4 214.9M381.3 212.7L382.1 208.3M396.4 213.9L399.6 217.6M425.5 142.0L428.3 143.1M457.2 145.3L454.5 144.2M462.0 161.7L465.0 165.6M460.8 181.6L463.8 178.2M462.5 185.0L463.9 182.2M452.1 197.3L453.8 195.8M452.1 197.9L448.0 199.8M446.4 199.0L450.3 198.2M449.6 203.3L452.2 202.3M425.5 207.8L420.9 208.5M422.8 204.7L420.2 202.0M416.3 202.5L412.7 201.6M396.2 170.8L396.8 168.0M398.9 167.2L398.8 171.5M401.5 165.9L399.5 166.9M402.8 158.8L402.7 162.2M406.9 146.7L404.3 150.8M420.1 146.1L416.6 145.3M485.6 131.1L486.6 128.2M485.3 135.3L484.4 132.8M480.7 137.4L483.5 139.2M485.5 140.3L485.4 137.2M487.3 145.1L489.3 148.5M487.8 155.1L487.5 157.4M498.2 180.5L499.2 182.9M502.2 192.4L504.7 193.4M521.5 103.7L520.7 100.4M523.0 104.1L522.5 108.4M523.3 119.6L525.1 116.7M523.6 140.2L521.6 138.1M520.2 160.1L521.1 162.2M516.4 162.6L518.4 167.1M525.1 172.3L523.2 176.1M524.3 189.7L522.3 192.0M521.7 192.7L519.2 195.9M520.2 196.3L521.6 198.4M517.8 199.3L518.2 203.1M520.7 213.2L519.9 215.3M518.2 216.6L518.5 213.8M516.5 223.5L518.3 219.3M511.7 225.1L515.3 224.1M513.4 230.2L513.3 233.3M513.3 232.6L514.8 230.4M514.0 236.5L512.4 232.7M520.5 245.4L519.9 240.5M513.8 246.9L513.3 242.6M518.9 248.4L516.4 244.7M507.0 206.9L509.0 210.8M515.9 220.5L517.5 224.3M507.7 231.8L511.1 228.9M508.9 233.0L505.8 229.3M518.0 242.0L517.5 246.1" stroke="#22aee6" stroke-width="2.5"/><path d="M164.1 136.3L162.9 132.5M160.2 140.0L160.8 136.8M159.8 143.6L158.3 146.8M162.0 152.5L162.9 156.0M159.9 184.3L158.6 180.7M159.2 193.6L158.6 190.7M161.1 199.5L160.8 202.0M157.1 201.7L159.9 201.8M161.4 214.0L162.4 211.5M163.5 216.1L161.1 218.7M160.6 220.5L163.3 219.5M164.5 134.5L163.0 132.8M163.3 135.3L167.7 136.8M175.1 129.0L172.0 128.6M180.0 137.1L180.6 132.8M182.3 136.2L183.0 140.8M174.5 143.2L176.5 144.1M183.3 144.0L183.0 148.4M183.2 153.2L182.3 148.4M183.7 149.3L184.2 152.0M189.6 151.8L188.3 154.5M182.2 153.3L183.1 157.9M188.1 155.7L187.1 158.8M184.8 157.6L185.8 159.6M185.3 168.3L183.0 164.2M189.7 179.7L189.8 175.7M182.8 192.6L182.6 189.6M179.3 198.1L178.4 200.6M173.5 201.5L169.4 200.0M172.2 203.4L167.9 203.1M212.2 119.0L213.6 117.1M217.0 145.2L215.0 142.5M215.0 157.8L215.0 153.0M218.5 164.2L215.8 160.1M215.5 169.4L218.1 172.8M214.9 172.8L217.5 175.2M217.7 187.6L216.6 192.2M217.7 200.0L217.9 202.2M228.9 131.4L227.1 135.5M226.6 149.1L229.3 151.4M226.2 152.5L223.6 156.4M222.3 174.0L223.0 169.8M224.8 177.5L227.4 180.6M227.3 187.5L228.9 189.7M223.5 195.6L223.7 193.4M224.0 194.8L224.0 197.0M225.9 196.1L228.2 199.8M224.9 206.5L224.6 209.1M227.8 208.8L225.9 211.3M227.2 210.1L226.0 213.7M224.8 129.4L226.8 132.9M268.9 113.2L267.6 116.2M260.4 125.1L259.2 121.1M266.4 132.8L265.2 129.4M257.7 130.3L258.0 133.8M268.3 140.2L270.2 138.2M264.9 146.4L264.4 151.3M265.2 151.3L266.7 149.7M258.9 161.4L260.4 157.0M264.2 161.4L265.6 164.3M261.6 166.2L263.1 169.5M254.1 182.0L255.0 179.0M261.6 181.2L263.3 185.3M258.5 195.9L259.3 193.6M257.1 200.4L256.8 195.8M262.6 203.6L262.3 207.4M251.2 124.3L254.5 122.3M280.7 112.2L281.5 116.0M280.5 120.3L277.9 116.4M286.9 117.4L288.5 114.7M291.1 124.4L292.3 119.6M290.8 138.1L293.7 137.6M295.0 147.0L292.7 145.2M295.1 148.8L295.5 145.7M296.2 167.5L293.9 163.3M296.7 171.3L299.6 170.2M296.1 177.9L293.9 176.0M298.7 179.1L298.5 183.9M300.8 201.2L300.3 196.6M299.2 204.1L295.5 202.7M296.5 205.2L299.3 207.7M300.1 223.2L302.0 218.8M307.0 224.6L305.4 222.4M298.2 227.4L299.5 229.3M263.1 176.3L259.4 174.4M266.7 174.3L262.3 175.2M279.1 170.9L283.1 170.3M286.5 173.4L282.1 173.8M293.4 170.3L290.7 170.6M293.8 175.4L295.1 173.3M295.8 175.5L295.0 171.5M305.1 175.7L302.7 174.4M304.6 174.9L308.6 173.7M338.7 138.2L338.9 134.8M344.8 141.1L344.6 137.5M338.6 142.9L339.3 140.0M348.6 144.1L344.5 141.5M345.9 146.7L347.6 151.2M338.8 172.2L339.3 168.2M339.7 176.8L340.4 173.3M345.7 179.0L342.9 177.5M340.0 181.1L343.3 177.5M339.2 186.0L339.7 188.2M343.9 209.6L344.5 205.7M341.6 213.0L341.1 217.4M348.0 216.4L349.1 218.8M353.3 225.4L351.9 222.6M352.6 226.6L351.9 222.4M347.1 225.6L349.3 229.3M352.0 230.8L350.1 227.4M346.0 168.2L346.4 171.0M344.8 174.6L344.1 176.7M349.7 195.5L350.2 191.8M355.1 184.1L355.3 187.7M353.5 181.9L352.4 184.5M356.2 179.6L353.7 180.8M364.4 169.3L363.8 166.4M368.1 153.3L371.4 153.1M376.2 147.6L374.4 151.1M377.5 140.3L377.4 143.7M380.2 134.5L378.8 136.4M377.9 135.5L380.7 134.4M384.9 123.7L387.3 121.8M389.7 114.0L391.4 111.4M351.8 189.6L350.6 187.5M360.7 196.0L362.8 197.1M361.6 198.5L365.2 201.9M378.3 202.8L381.5 204.8M387.7 209.3L384.6 209.6M388.9 211.0L392.7 214.3M392.6 218.1L396.5 220.9M399.4 217.7L396.3 215.5M390.7 213.1L388.2 209.6M388.8 210.9L393.7 211.1M414.7 147.9L417.0 143.9M426.3 139.6L430.3 139.4M434.3 143.8L438.1 143.8M438.7 137.3L438.3 140.2M438.4 147.4L441.6 146.7M458.6 153.6L454.4 153.8M455.9 155.4L456.0 159.7M466.7 178.1L468.4 176.4M461.0 191.3L458.7 193.1M461.7 193.6L458.4 196.0M452.9 195.0L453.7 192.9M453.5 204.1L455.1 202.5M437.1 204.0L441.5 205.5M433.7 206.2L430.3 203.7M423.0 200.9L424.3 204.4M417.9 202.5L416.0 200.0M417.4 198.8L417.7 195.9M408.9 190.9L406.6 188.4M405.3 188.5L402.3 185.4M409.1 186.2L407.6 182.2M400.9 173.3L400.6 176.0M407.3 167.4L407.8 171.5M403.3 168.1L401.9 165.6M402.7 155.6L405.8 155.1M412.5 153.8L409.5 156.5M429.6 150.4L431.9 153.1M437.1 154.1L436.7 151.1M479.5 126.5L481.3 129.6M484.9 133.6L482.6 130.3M485.2 130.2L487.4 133.7M482.7 136.6L481.5 138.8M486.4 148.6L483.1 146.2M487.4 154.7L487.5 151.0M490.8 158.4L488.2 159.7M490.0 161.2L492.4 161.5M492.2 163.6L494.1 165.4M493.7 166.7L492.1 164.9M501.5 193.1L501.6 189.6M505.5 197.4L503.3 194.9M505.7 198.1L504.7 196.0M505.8 198.3L502.5 197.7M506.5 198.8L509.8 198.7M511.9 210.1L510.8 207.5M526.0 105.8L527.6 109.6M523.3 108.8L524.2 113.7M524.3 115.8L523.5 118.1M522.6 124.5L522.8 120.8M522.3 128.1L522.7 131.7M519.2 133.7L519.5 137.7M520.6 145.5L519.4 141.4M522.0 148.4L523.4 151.2M519.6 151.6L520.7 155.9M519.0 170.1L519.3 173.2M524.2 182.3L523.6 184.6M515.1 192.6L517.5 190.6M520.1 192.0L516.5 195.3M519.2 200.1L517.6 203.6M522.2 209.6L521.0 206.2M518.5 209.8L518.9 205.9M521.4 208.6L520.5 212.0M519.3 210.2L522.8 213.6M516.9 218.7L519.1 216.0M516.7 221.4L518.1 218.9M522.1 219.8L521.7 223.1M518.4 243.6L522.0 241.2M516.5 243.6L516.6 247.1M510.0 214.0L514.1 215.0M507.1 225.4L507.3 222.2M513.6 233.2L515.6 229.4M511.4 234.7L514.1 238.0M518.1 235.9L516.6 238.4M512.6 240.8L511.4 238.8" stroke="#e82a3a" stroke-width="2.5"/><path d="M159.4 136.8L160.1 134.0M159.7 179.6L159.3 181.8M163.5 191.0L166.2 188.8M169.9 135.4L166.5 135.6M172.5 135.7L172.4 133.4M177.4 133.6L173.5 133.3M178.4 138.8L176.8 135.8M176.7 143.5L180.9 143.3M182.2 173.8L184.7 170.4M181.2 173.8L184.7 175.0M185.2 182.3L186.3 179.2M184.2 183.1L185.5 180.2M188.7 185.8L189.4 189.0M187.0 187.6L185.9 191.3M180.3 194.3L179.5 196.8M178.1 198.3L179.7 194.2M177.8 197.2L174.9 198.6M213.2 118.4L210.9 114.8M212.4 144.0L212.6 139.6M220.4 195.6L220.2 199.8M218.7 200.1L217.0 197.9M224.8 144.0L226.5 141.9M223.3 185.2L223.4 181.8M227.9 190.4L226.5 194.0M227.4 190.7L227.0 193.3M226.3 214.7L228.2 210.3M227.6 129.7L232.0 130.0M268.5 119.6L270.4 117.0M268.4 122.5L266.6 124.0M263.0 128.7L263.0 132.9M271.4 135.6L267.6 137.1M261.1 146.1L262.0 150.3M257.6 149.4L259.0 151.5M258.0 175.6L256.8 171.6M260.1 173.4L262.0 177.5M256.5 203.4L256.5 199.9M275.8 104.9L279.4 107.0M284.1 121.6L280.7 119.6M285.6 124.7L283.2 121.3M297.2 132.3L295.1 133.7M290.0 135.3L293.5 138.5M285.6 144.4L287.4 142.3M297.1 180.3L295.4 184.5M287.0 174.8L289.1 171.5M333.9 125.2L332.8 127.3M340.4 140.2L340.2 135.2M339.9 153.9L338.0 158.5M346.3 162.8L346.4 158.4M346.9 162.3L349.2 160.0M344.7 165.7L341.8 164.6M341.7 170.4L344.6 172.5M342.8 185.7L343.5 181.1M343.3 188.3L345.0 190.1M354.0 211.1L349.8 210.9M351.4 213.5L352.0 209.7M349.7 214.8L349.7 217.0M343.2 223.7L342.1 221.6M350.1 233.4L349.9 229.5M346.3 176.1L347.8 180.6M356.5 172.9L355.6 169.1M367.1 165.7L368.6 161.5M375.6 151.9L378.2 151.3M387.0 126.1L386.4 122.7M385.4 120.8L384.9 123.7M387.7 112.9L390.1 115.2M367.7 204.9L367.1 201.7M374.5 200.0L371.2 199.3M431.5 141.8L435.4 143.5M461.3 155.6L460.9 151.4M463.2 184.8L464.8 183.1M458.8 188.4L461.0 185.6M456.5 185.0L455.6 187.3M461.0 193.4L456.7 191.5M450.4 209.7L447.2 206.2M441.9 205.0L439.0 204.4M420.8 201.8L423.8 201.7M399.8 165.7L401.7 162.2M406.2 161.6L403.9 163.1M413.1 144.8L414.3 148.6M490.8 156.3L494.1 159.6M492.7 171.2L493.8 173.7M518.7 104.1L519.6 107.8M522.6 111.1L526.8 108.9M517.1 245.4L517.1 243.2M512.3 251.8L513.6 248.7" stroke="#f08c1e" stroke-width="2.5"/><path d="M159.8 134.1L158.3 138.5M163.2 136.7L165.5 135.1M161.5 139.7L162.3 137.5M159.2 142.6L159.8 145.8M157.2 147.5L157.2 151.2M161.4 154.9L157.0 154.9M161.8 170.7L157.0 170.2M162.4 178.4L162.6 176.0M164.5 182.9L162.5 185.7M160.0 188.2L162.3 186.7M162.1 188.5L161.8 193.2M160.6 194.7L161.7 197.3M164.1 201.8L165.1 206.6M160.0 220.6L160.0 224.1M170.6 135.9L167.4 132.3M173.2 134.9L169.9 131.5M180.1 140.9L179.1 138.2M183.2 146.7L184.9 148.6M188.0 163.4L188.1 161.1M183.2 164.1L183.9 161.5M189.1 163.6L188.8 166.1M181.3 167.9L182.4 165.2M187.3 167.9L186.0 171.5M183.6 174.3L181.3 171.5M181.2 174.3L185.3 176.8M181.3 195.7L181.2 190.9M181.5 196.5L182.0 192.1M180.4 196.5L182.1 194.2M175.5 196.4L177.7 195.4M177.3 200.5L176.7 197.8M180.8 202.1L176.6 203.3M177.6 199.4L174.2 202.4M168.8 201.1L171.3 201.0M170.1 199.6L167.7 201.2M210.3 105.1L211.4 108.1M212.2 113.4L212.8 108.8M210.9 113.0L211.4 115.3M219.0 152.5L220.6 150.1M214.7 154.8L216.1 150.1M214.8 151.3L211.4 154.2M216.6 172.9L215.6 168.9M221.1 173.4L220.3 175.9M218.1 183.2L216.4 179.0M217.2 181.3L213.2 181.7M215.9 187.3L214.7 190.3M218.5 199.4L217.7 194.9M219.7 205.8L219.2 210.6M223.6 142.3L226.8 139.6M224.5 141.1L224.1 145.1M224.8 150.4L225.5 146.4M228.9 162.5L231.0 158.9M227.4 163.7L225.0 167.2M227.4 168.5L226.4 172.2M225.5 173.3L228.0 169.6M228.9 175.2L229.7 172.6M231.1 183.7L228.1 179.9M223.3 186.0L223.8 182.1M226.1 188.0L229.4 191.0M225.6 197.8L224.7 200.5M226.3 212.7L224.9 208.4M228.6 210.3L231.8 213.5M215.7 133.0L215.8 135.5M223.2 136.5L225.4 132.2M262.1 114.6L264.7 111.0M262.8 132.4L264.1 129.1M264.3 142.3L263.8 138.1M259.3 140.8L256.8 145.0M260.1 146.2L257.9 143.3M258.7 149.5L260.7 152.8M265.6 150.5L265.3 153.3M259.9 152.1L261.9 154.7M264.3 170.5L261.5 172.2M258.2 175.5L259.4 171.9M254.8 178.3L256.5 176.5M258.5 183.0L257.3 179.4M264.0 184.5L261.6 181.5M257.5 187.6L257.3 183.3M256.6 187.1L257.5 182.9M259.5 195.6L258.8 199.2M259.0 199.9L256.3 197.3M261.1 202.2L262.5 204.6M273.7 116.3L271.9 114.1M286.8 120.3L284.0 117.3M280.7 128.0L280.0 123.6M288.0 128.3L287.8 130.9M283.7 131.2L284.6 134.3M296.7 135.5L297.3 132.8M296.7 138.9L294.0 138.5M291.6 140.6L291.5 144.7M300.7 162.0L302.8 163.3M302.1 175.6L304.3 176.6M298.2 179.7L298.0 177.5M300.6 213.4L301.6 216.8M305.8 223.5L303.5 222.1M267.9 174.4L269.7 176.4M269.7 173.2L267.3 175.5M271.7 172.0L267.8 175.0M274.7 174.8L274.3 179.7M299.6 174.9L303.9 173.1M302.7 174.4L305.0 173.9M305.1 176.6L309.0 177.7M342.7 123.2L344.6 126.6M336.3 133.6L338.3 136.4M336.8 137.9L339.0 139.1M335.9 142.9L337.6 146.4M346.2 150.9L341.9 149.5M343.3 154.1L341.7 156.1M341.1 153.8L342.5 158.1M342.9 162.0L345.7 166.1M342.4 169.0L342.2 165.3M337.3 170.2L339.0 168.4M345.8 174.6L345.6 171.8M347.4 174.4L348.6 178.7M348.2 181.0L348.6 178.7M345.5 190.2L345.6 193.0M348.1 195.5L349.3 197.6M339.5 197.7L340.8 200.4M351.8 213.9L350.1 212.1M342.3 230.3L343.4 233.2M346.5 233.3L344.7 235.1M345.0 169.9L345.5 174.7M349.4 188.9L352.1 190.6M348.8 196.8L348.3 201.7M353.6 207.9L352.8 204.6M359.2 183.9L359.8 179.4M366.1 163.4L368.4 160.0M367.2 159.3L362.8 161.1M373.2 155.5L370.1 159.2M372.3 147.9L373.8 152.1M375.5 151.7L374.7 148.4M375.5 143.0L375.7 146.6M374.3 143.6L376.1 141.7M380.8 139.6L379.0 143.8M383.2 143.7L382.0 140.2M382.1 129.9L381.0 127.5M391.6 126.6L388.6 124.9M385.4 119.5L387.0 121.5M386.1 121.6L389.1 118.7M386.4 117.5L382.5 117.2M388.9 113.8L387.2 115.9M354.5 185.7L357.4 187.5M356.5 195.9L351.7 194.7M356.1 190.2L358.9 193.9M359.6 191.6L361.7 194.7M363.4 191.2L361.2 192.3M362.3 192.5L360.4 194.3M360.1 193.4L363.3 195.6M363.5 200.0L364.1 196.8M374.8 200.2L372.0 198.1M381.6 202.3L379.3 202.0M380.0 200.5L381.8 204.2M385.7 213.2L389.7 211.9M389.0 208.7L391.8 210.0M396.8 217.2L393.1 216.8M396.4 219.8L394.2 219.4M389.2 211.3L386.6 207.5M387.0 212.1L387.4 215.6M390.0 212.9L392.9 216.4M441.6 144.2L444.1 142.8M450.6 151.6L448.8 148.0M455.4 151.8L451.7 150.7M459.0 152.4L458.1 155.4M456.8 160.0L455.4 157.2M462.5 164.9L462.9 167.6M456.7 170.4L458.0 168.4M462.4 171.0L461.5 168.9M452.0 196.8L448.2 197.6M445.1 200.0L449.3 199.5M445.9 201.4L443.4 200.0M444.5 206.9L447.3 206.4M435.6 207.5L437.5 204.4M434.0 211.0L436.2 210.4M432.5 201.8L428.6 202.0M425.3 206.0L427.6 207.1M425.7 211.1L422.7 210.2M424.2 209.0L421.0 207.3M410.6 200.2L413.4 199.8M407.4 185.2L408.4 188.9M401.1 179.4L402.1 177.0M396.8 173.7L399.1 170.5M399.2 169.5L400.1 167.4M405.5 165.5L404.4 162.1M419.0 152.2L414.4 153.7M430.8 151.6L426.5 153.3M439.7 161.2L437.8 159.3M481.7 129.0L480.6 124.8M491.7 156.4L488.6 154.1M490.0 157.5L492.1 158.8M492.0 164.2L494.9 160.5M491.9 162.9L496.2 164.2M497.2 177.5L497.1 180.3M500.5 180.4L499.0 177.3M498.4 186.9L496.6 182.3M501.4 200.9L504.1 204.4M509.3 201.9L508.8 204.3M509.0 207.0L507.4 204.5M526.2 101.1L521.4 101.4M519.3 105.1L517.4 108.5M520.7 111.1L520.8 113.9M520.0 121.4L523.5 120.0M517.9 124.4L521.5 122.2M519.4 128.6L518.4 132.6M523.1 149.5L523.1 147.1M521.0 153.7L521.3 157.8M521.2 160.0L523.4 156.8M521.8 162.5L525.7 162.6M521.2 179.5L523.8 181.5M519.3 187.7L519.6 190.4M517.9 224.4L516.1 228.0M516.7 230.6L519.5 226.9M512.5 203.2L513.1 206.7M506.7 206.9L505.4 211.7M514.7 226.1L514.8 222.0M506.2 229.0L507.9 232.2M511.5 233.9L509.6 232.0M509.1 248.3L513.1 247.0M521.3 248.3L518.1 246.7M522.4 253.3L519.1 250.2" stroke="#e01c84" stroke-width="2.0"/><path d="M161.9 138.8L161.0 135.2M160.2 148.7L161.3 144.4M159.0 155.1L155.8 153.4M160.3 174.5L158.9 171.6M160.9 193.3L159.5 190.1M173.7 134.1L172.5 131.7M182.5 157.8L184.5 160.6M214.9 105.5L212.9 110.0M218.1 195.4L219.0 190.6M216.3 196.1L214.1 194.5M217.3 205.5L215.6 203.6M221.3 187.0L222.6 184.3M226.9 206.8L226.4 204.5M222.4 129.9L219.7 128.2M269.1 125.6L268.5 122.3M263.6 134.1L260.5 130.8M260.6 132.8L260.0 136.5M265.8 135.0L265.5 139.8M266.8 167.0L267.8 164.4M264.6 188.5L262.3 192.6M278.8 117.2L280.9 119.2M281.0 124.0L282.3 127.1M299.4 156.1L297.6 151.5M294.4 156.1L293.3 152.9M299.4 184.7L296.3 187.6M302.9 192.1L298.5 193.6M295.7 208.9L298.5 206.4M304.5 220.3L303.1 216.2M257.3 174.4L261.1 173.9M311.7 177.7L309.5 176.2M338.8 159.6L338.5 163.4M348.8 181.9L345.2 179.2M355.5 207.7L355.4 204.1M354.8 182.4L357.1 184.6M361.6 179.2L363.1 175.5M363.9 173.0L361.3 175.0M382.5 136.8L381.5 134.7M392.6 115.5L394.3 112.2M384.5 207.1L385.4 211.5M382.0 209.7L380.3 207.9M455.4 162.3L453.8 158.2M469.3 174.7L467.3 170.7M463.5 179.3L462.6 174.8M462.6 178.1L461.2 180.5M463.7 187.8L463.7 183.6M459.2 185.0L457.8 188.0M440.9 209.9L441.1 207.1M407.3 193.8L404.9 191.6M403.5 185.3L404.9 188.3M482.1 131.3L480.3 127.2M483.4 143.5L485.9 146.8M491.7 163.2L491.5 159.3M495.7 165.7L494.0 168.5M501.8 193.6L504.8 196.5M502.6 194.4L500.6 198.8M504.5 196.1L504.0 199.7M519.1 103.9L518.2 101.6M519.8 113.0L519.2 116.6M520.3 168.0L521.1 171.7M517.7 191.6L519.4 194.5M515.7 200.7L514.7 203.2M516.2 244.5L517.7 249.1M507.0 236.8L511.1 237.3" stroke="#e0308c" stroke-width="2.5"/><path d="M163.9 134.9L164.2 139.2M157.1 162.6L158.8 158.4M161.8 169.3L160.0 172.4M160.8 176.3L162.9 171.8M160.5 179.2L161.3 176.5M157.8 203.0L159.7 205.7M159.8 217.4L159.8 220.8M180.5 148.6L178.4 146.9M189.8 184.9L187.0 187.2M177.9 195.6L173.7 196.6M210.2 113.3L210.0 116.7M215.3 138.6L214.1 141.6M215.1 154.0L212.7 155.2M217.1 159.7L219.3 155.3M228.3 158.8L226.6 162.5M222.8 200.5L222.1 203.1M226.3 206.5L228.3 203.7M213.8 137.3L215.2 135.2M219.0 135.9L218.3 132.4M227.6 127.5L229.1 131.9M260.1 129.9L260.6 132.6M261.1 149.6L260.9 152.7M255.5 165.7L255.8 168.0M259.2 198.0L256.1 200.3M263.6 114.2L260.6 115.3M288.6 124.4L289.2 127.9M288.5 128.7L292.2 129.4M285.2 133.3L282.9 132.8M284.7 133.4L284.6 136.9M298.6 146.4L296.9 141.9M295.1 152.8L293.4 149.5M290.1 154.9L290.7 152.6M297.5 154.5L297.6 157.2M295.1 164.8L294.6 160.3M298.1 172.4L294.8 168.6M300.7 184.1L300.1 181.0M302.2 196.1L302.0 191.6M296.9 204.5L297.3 208.0M262.0 173.3L264.5 171.1M268.5 172.3L266.1 175.1M274.8 171.5L276.8 173.3M288.9 174.7L288.8 170.7M341.2 145.8L339.2 143.6M338.4 158.2L339.8 155.9M344.3 171.5L343.0 168.7M342.8 177.7L346.2 181.0M340.0 199.0L343.2 196.5M349.4 227.1L350.9 230.5M349.6 184.2L352.5 187.6M349.8 184.7L351.7 181.0M357.7 185.9L359.4 182.9M357.1 179.5L354.5 180.8M371.8 154.3L371.1 156.8M371.0 154.4L373.3 152.1M374.7 144.1L373.7 140.1M379.0 138.1L379.1 135.8M382.3 137.9L382.4 140.6M384.0 131.1L386.2 129.2M385.3 128.5L385.8 125.4M385.7 209.4L388.0 208.3M390.8 211.8L393.5 212.6M395.7 217.6L398.2 221.0M450.7 153.7L453.0 155.1M464.3 176.7L466.0 174.9M456.3 187.1L454.2 188.9M434.2 207.1L437.9 207.2M412.6 159.7L411.2 155.1M419.6 146.9L421.6 147.8M488.4 147.7L491.6 151.0M498.2 172.5L494.3 173.8M502.4 186.1L504.3 189.2M509.9 206.8L511.1 211.1M523.8 107.5L521.9 106.3M522.6 116.2L524.7 111.9M515.8 116.4L520.4 114.7M525.0 126.3L523.8 129.3M522.7 141.8L520.4 138.5M526.5 154.7L524.7 152.3M525.0 157.8L521.9 155.0M521.4 174.7L522.3 178.2M516.7 181.2L515.8 178.2M519.0 182.2L519.7 185.9M517.1 201.8L515.0 206.0M521.2 211.9L521.9 209.5M517.7 233.9L520.4 237.5M515.6 238.1L515.9 242.1M509.4 209.5L507.7 206.2M508.1 215.2L510.4 217.6M515.7 226.7L517.7 224.9" stroke="#9040c4" stroke-width="2.5"/><path d="M161.7 140.6L161.1 138.1M162.9 140.8L161.3 145.0M160.7 161.3L160.7 164.9M164.0 167.7L159.9 168.1M163.5 191.8L162.6 194.4M163.3 198.3L160.1 195.2M162.9 223.4L161.1 219.1M166.5 135.4L164.8 136.8M183.5 165.9L179.4 163.3M185.9 167.9L187.8 170.5M186.5 177.0L184.2 172.7M185.2 179.9L187.6 177.0M184.5 181.1L185.9 182.8M166.6 198.5L170.6 198.5M219.4 180.0L218.3 175.9M218.1 194.1L219.8 198.0M218.1 204.6L220.3 207.9M227.3 153.2L226.8 150.0M228.3 153.6L228.7 155.8M225.5 133.6L229.2 134.3M265.4 112.7L265.5 110.3M266.4 150.5L266.3 153.4M268.4 155.1L266.0 154.5M265.5 153.4L265.0 158.0M259.8 160.5L262.0 159.7M257.3 192.5L259.9 196.3M258.6 201.8L257.8 206.6M256.5 206.7L253.8 205.3M269.9 112.0L271.0 109.9M281.4 114.3L277.7 112.8M282.4 120.4L281.8 116.8M295.8 139.7L294.6 136.8M296.5 143.6L294.8 147.7M292.3 174.3L289.4 171.2M295.4 171.0L296.6 174.2M303.1 205.3L301.3 202.7M304.2 211.4L306.9 214.0M307.4 217.9L306.1 216.1M301.9 224.5L301.6 226.9M285.6 172.6L287.8 171.8M301.8 174.5L306.1 174.8M342.2 145.7L339.2 144.5M338.4 165.3L336.7 167.8M349.8 194.1L348.3 190.2M343.9 213.9L341.3 210.0M351.9 230.0L349.9 234.0M358.3 176.7L355.3 179.8M357.8 174.9L356.6 177.6M357.6 173.9L357.8 176.9M364.8 166.9L365.4 163.8M366.7 167.6L369.3 164.0M364.5 157.1L367.6 154.1M380.9 134.0L383.0 131.4M388.4 124.6L386.4 120.5M394.7 116.5L393.7 121.1M355.7 192.0L359.4 189.5M422.1 139.5L423.6 137.2M427.4 143.5L423.5 145.2M423.8 140.1L426.2 141.2M429.8 147.3L432.5 145.2M431.1 139.4L435.9 138.4M450.3 144.5L453.0 147.8M462.0 171.7L465.1 175.1M441.0 209.5L438.8 209.1M418.5 206.3L415.9 204.2M418.1 201.7L416.6 197.9M415.4 200.5L414.2 198.4M412.4 200.3L411.2 203.1M407.7 198.2L405.7 200.3M406.1 179.8L405.6 176.8M402.0 174.4L401.2 178.5M417.2 147.8L414.3 148.9M427.3 145.7L423.5 148.3M426.4 154.4L423.0 152.8M482.6 146.5L485.7 147.6M491.7 147.6L488.8 146.3M490.5 167.3L492.5 171.8M498.0 187.2L499.8 184.8M522.7 109.8L524.8 106.5M517.1 128.5L519.2 133.0M523.9 145.4L522.6 147.5M521.6 150.0L522.0 146.5M521.1 157.7L519.7 155.0M523.2 159.5L520.4 161.5M522.1 168.3L522.5 171.9M522.5 175.0L521.8 171.9M515.0 199.1L515.7 202.5M512.8 217.9L514.9 219.1M515.5 220.9L517.2 224.9M514.8 232.7L514.2 228.4M518.0 235.6L521.8 232.4M518.8 251.0L517.8 248.4M514.4 255.3L514.1 251.4M504.9 216.9L507.8 218.5M512.1 226.7L516.0 228.3M512.2 239.9L513.2 237.8" stroke="#2a6ee0" stroke-width="2.5"/><path d="M162.3 141.0L162.8 138.1M164.2 151.4L163.1 148.6M159.5 175.2L161.1 171.3M159.8 184.7L162.3 186.5M160.8 191.7L163.1 187.9M161.9 194.4L159.3 192.5M160.4 200.8L160.5 198.1M162.7 207.4L161.2 203.1M168.1 127.4L166.4 129.2M168.0 128.3L169.6 130.2M179.8 136.2L176.1 134.6M174.2 137.2L174.9 141.1M186.6 145.0L184.5 141.9M182.8 151.6L186.7 150.6M189.9 151.8L188.2 156.2M189.8 157.4L187.0 154.1M188.9 181.0L191.4 184.4M187.4 193.4L187.4 190.7M173.8 197.8L171.3 198.2M167.4 200.4L169.4 202.3M169.0 204.4L164.4 204.8M215.8 144.5L217.7 148.4M218.8 146.4L218.7 149.2M214.1 151.7L214.6 149.4M217.3 163.1L216.4 166.6M216.4 176.6L217.3 180.3M219.0 179.3L219.9 182.3M216.0 181.6L215.2 184.0M215.6 184.5L212.9 182.8M221.1 208.5L220.1 212.5M224.5 209.7L222.2 211.5M226.7 132.1L225.0 136.7M221.4 161.1L225.0 164.1M229.7 181.6L229.8 184.4M223.5 207.8L225.4 204.0M223.0 209.2L223.9 206.3M226.3 129.1L222.0 129.3M261.6 139.8L261.3 142.7M261.0 158.4L260.0 155.9M265.1 170.4L261.7 171.0M266.1 178.9L266.2 176.6M259.7 186.2L259.0 188.7M262.4 190.1L258.7 191.7M264.7 202.1L262.6 199.3M259.7 207.6L262.0 208.1M256.4 120.5L253.2 124.2M272.3 110.6L274.2 112.7M285.3 122.1L283.3 120.2M286.6 146.5L287.0 142.6M292.0 147.6L293.3 149.5M299.3 150.7L300.7 154.0M298.7 169.9L301.9 167.8M302.9 173.1L304.9 174.4M298.3 182.7L299.8 180.8M297.3 181.0L296.2 185.4M299.9 193.9L299.1 196.2M309.0 198.5L304.7 197.3M295.7 197.8L297.8 201.1M298.4 201.4L298.9 198.5M296.7 209.9L294.5 207.2M260.5 174.7L262.8 174.5M279.6 171.9L277.2 173.7M280.9 175.3L283.1 174.4M295.2 175.7L298.3 177.6M307.7 173.7L304.7 174.9M342.6 128.1L343.4 125.6M344.2 162.2L343.9 158.4M344.0 168.8L342.6 167.0M345.2 173.6L347.7 170.7M339.3 177.3L337.6 174.0M341.1 197.8L340.0 194.1M346.8 207.2L346.7 202.5M351.5 208.4L349.4 204.2M341.7 208.4L343.0 212.3M348.4 209.2L349.3 212.1M354.4 227.2L353.9 223.8M351.8 235.6L349.8 231.7M346.6 165.6L349.5 168.1M347.5 181.1L345.9 178.2M379.2 138.8L381.7 137.2M384.9 135.0L382.1 134.9M390.3 123.4L391.0 120.6M369.0 195.8L367.1 192.9M365.6 201.3L364.0 197.9M390.2 209.7L390.8 212.6M392.3 214.9L395.1 217.9M378.2 202.8L381.1 204.0M430.2 139.0L433.5 139.6M439.6 139.4L435.5 138.9M445.3 145.5L448.6 144.6M450.3 146.2L454.9 148.1M460.5 171.6L461.6 175.7M464.8 182.8L465.2 179.2M466.6 191.6L463.9 194.3M453.9 191.1L450.9 191.3M454.5 201.6L455.8 197.4M419.5 202.2L415.3 202.0M415.7 201.1L412.6 202.9M414.3 194.3L415.4 196.5M403.5 184.7L402.3 182.1M395.4 174.2L396.3 177.9M399.1 174.2L395.2 175.0M401.8 169.4L401.0 171.5M400.7 165.2L400.0 169.5M403.7 166.3L402.0 168.4M404.0 160.2L403.9 163.8M407.5 157.0L409.2 161.1M413.3 145.8L415.3 149.9M482.3 123.3L484.7 125.4M481.3 137.9L480.6 134.1M491.3 155.0L489.1 151.1M489.5 154.4L489.7 158.6M493.3 157.0L491.6 154.3M496.6 169.7L493.8 169.8M505.8 206.8L505.6 209.7M522.1 105.9L520.8 103.0M520.1 113.1L522.2 110.3M522.0 128.7L518.0 131.4M523.8 145.6L525.4 144.0M523.9 148.1L524.8 143.9M521.8 162.4L519.1 166.4M520.7 164.8L519.6 162.3M517.9 186.9L517.4 183.0M523.1 199.9L520.9 198.6M516.0 204.2L516.1 207.7M517.4 220.2L518.7 215.8M508.5 230.4L510.8 227.7M514.8 236.9L516.1 234.3M519.4 238.8L519.6 242.2M514.9 248.8L512.1 246.3" stroke="#2a6ee0" stroke-width="2.0"/><path d="M164.9 147.8L163.6 149.6M162.4 164.2L165.1 167.6M161.3 166.9L161.9 169.8M160.7 168.3L160.3 171.3M159.6 171.9L162.9 170.7M160.5 174.3L162.5 175.9M164.9 175.1L162.5 177.0M157.6 197.8L161.8 195.2M164.0 209.8L162.4 206.1M159.5 206.1L159.1 210.5M162.5 210.9L162.5 207.5M162.8 209.4L163.4 211.7M163.8 217.2L161.7 213.4M166.3 128.6L162.1 127.7M178.1 136.4L179.4 140.2M179.1 138.7L175.4 141.3M182.8 142.4L181.4 140.5M184.9 144.6L182.9 140.5M179.0 149.2L177.6 144.5M180.3 148.8L184.7 148.4M183.1 167.2L184.8 169.4M186.7 172.9L187.6 169.3M183.2 170.4L181.7 173.7M188.2 186.7L187.6 191.2M184.1 193.3L182.2 195.1M185.0 199.1L182.2 198.9M174.5 201.4L173.7 205.3M167.3 199.9L169.9 199.1M209.5 112.1L210.7 108.6M212.1 119.2L212.6 122.5M214.4 155.3L214.7 157.5M212.7 159.6L214.3 155.7M214.0 166.4L216.8 163.3M221.1 164.8L220.8 168.1M215.8 170.4L217.0 168.4M216.7 177.9L217.2 174.3M218.0 178.5L216.7 175.7M214.6 186.3L216.0 188.4M215.7 189.3L215.6 191.8M223.5 138.1L223.6 140.5M223.9 146.3L222.5 144.3M228.1 147.6L229.7 149.3M229.7 185.8L229.5 183.1M228.0 192.2L226.0 196.4M224.5 198.0L224.4 194.6M212.4 136.9L213.9 134.9M215.7 133.9L217.6 131.9M218.2 128.7L221.1 132.3M263.2 118.1L259.9 114.5M264.5 118.9L265.7 116.0M271.9 117.3L268.4 119.2M257.2 124.7L258.7 129.2M263.5 131.2L259.8 128.0M259.6 134.0L261.6 132.4M256.4 132.7L257.4 135.8M264.8 137.4L267.1 137.4M262.6 136.0L262.5 139.0M258.4 149.3L259.7 145.9M263.9 145.7L266.2 149.5M262.6 164.2L263.2 167.2M263.1 171.7L261.9 174.8M261.6 178.1L262.5 174.7M264.9 204.2L266.8 201.8M259.7 202.8L259.6 205.1M263.0 208.9L261.0 210.9M266.0 113.7L269.0 113.4M271.1 111.9L267.8 110.3M277.2 109.1L274.1 105.3M276.2 114.1L277.9 115.7M276.5 113.8L280.7 115.0M281.1 121.9L282.0 119.4M280.2 124.9L282.2 128.4M283.3 133.3L287.3 134.7M292.5 155.9L291.9 153.6M295.2 170.1L297.0 174.2M304.6 190.8L301.3 187.1M299.3 192.9L297.6 191.0M294.3 194.4L297.2 192.3M292.7 195.5L293.6 192.0M300.8 209.3L299.9 206.8M303.1 211.5L301.2 215.2M303.9 214.4L305.6 216.8M306.9 222.0L304.8 219.0M306.4 223.3L307.1 220.8M306.4 221.0L307.2 223.9M301.8 228.8L300.0 226.8M304.0 228.6L306.4 230.9M271.9 174.2L267.4 175.2M288.8 169.1L284.9 170.8M299.3 172.9L297.0 175.2M309.9 177.3L307.7 178.0M339.3 139.8L340.6 135.8M337.4 140.7L336.3 142.8M344.4 148.0L346.6 145.0M339.5 151.1L340.9 154.2M343.2 175.9L343.0 179.4M345.4 185.1L347.6 188.8M349.1 191.7L349.1 187.1M348.7 189.5L346.0 193.7M350.3 207.3L349.4 210.3M342.9 210.6L344.4 213.8M347.8 214.3L347.5 210.8M349.5 217.8L349.9 221.8M347.3 222.6L350.1 220.9M348.8 227.1L352.2 225.9M353.2 237.1L354.9 233.8M350.9 188.4L352.0 185.7M354.2 194.7L353.8 197.2M358.4 184.7L360.2 181.8M355.1 180.4L356.8 177.4M360.6 174.5L362.8 172.7M361.1 167.8L360.8 171.3M364.2 166.8L361.3 169.1M359.5 164.4L362.3 162.6M363.7 162.7L360.1 162.6M377.8 153.3L373.7 155.7M382.2 132.4L385.1 132.1M386.5 128.3L388.2 124.8M387.6 120.0L386.4 116.5M391.2 113.6L389.5 115.4M364.5 201.2L368.4 204.1M369.7 203.4L372.2 203.9M380.3 212.9L378.1 211.9M382.7 210.9L381.2 208.0M385.3 208.1L384.4 206.0M390.8 208.5L392.4 206.6M386.8 215.3L390.2 218.1M431.0 149.3L432.6 145.9M436.1 139.0L432.7 139.8M440.3 142.8L438.5 147.4M441.1 140.0L443.2 138.9M447.6 139.6L444.8 139.6M451.6 142.1L446.7 142.3M461.1 169.0L462.3 166.6M463.9 169.3L461.3 171.0M463.3 189.1L462.6 185.4M455.4 197.0L453.8 195.4M455.2 198.0L452.8 200.0M445.7 197.9L448.3 195.0M446.6 200.5L443.8 204.5M433.1 206.6L430.2 206.5M415.0 194.8L413.6 198.2M410.1 200.0L407.5 199.6M412.0 189.1L412.3 191.7M407.1 179.8L406.2 183.3M400.0 176.7L401.6 179.0M402.6 170.2L404.3 173.2M407.7 166.3L405.8 163.2M412.1 152.5L411.2 148.9M483.9 119.6L482.6 122.8M480.2 125.2L483.7 128.2M484.1 140.2L482.1 136.1M491.4 142.7L489.1 142.0M486.0 151.9L487.6 147.3M493.4 152.7L490.2 150.2M496.2 164.3L497.4 168.5M493.4 168.3L497.5 170.2M495.7 174.7L498.5 177.5M500.0 174.7L499.6 178.8M501.7 191.2L500.2 186.8M508.4 205.9L507.6 203.6M522.5 110.7L519.6 107.5M525.2 110.8L524.8 113.8M525.5 117.5L523.8 115.3M520.2 116.5L520.6 118.9M523.0 118.8L524.8 117.4M524.2 125.6L522.4 129.9M518.0 135.0L517.6 131.8M520.9 139.9L522.6 143.6M521.5 153.4L520.7 150.7M520.2 153.3L519.3 150.7M521.3 157.9L519.6 160.1M521.6 160.4L519.9 158.7M524.1 163.6L521.7 162.1M516.0 166.1L520.4 165.7M523.6 170.9L523.6 174.6M524.1 177.7L525.1 175.1M519.4 183.6L522.4 179.8M519.0 183.2L521.3 182.1M514.2 200.5L514.6 196.1M523.0 205.2L521.7 202.3M517.5 210.3L518.5 206.1M518.7 209.7L515.1 212.1M518.8 217.0L515.8 215.3M512.8 225.2L516.0 222.3M514.9 225.2L515.1 229.4M521.0 227.3L519.7 231.5M519.4 232.6L517.3 236.1M520.5 245.6L519.6 241.7M511.8 250.2L512.9 254.5M505.3 209.7L506.6 212.6M511.5 222.2L511.1 227.2M515.0 223.8L517.2 226.9M511.8 228.9L513.4 227.0M514.3 232.2L515.3 237.1M512.4 238.4L515.2 235.6M513.7 243.5L515.8 239.2M516.6 242.6L514.1 244.4M519.7 243.6L520.5 245.9M516.0 249.3L512.7 251.8" stroke="#ecc42a" stroke-width="2.0"/><path d="M163.8 149.7L162.9 154.3M161.7 187.8L161.5 190.3M166.0 225.3L164.9 221.5M180.5 135.8L178.2 132.1M187.0 182.8L186.3 187.3M189.8 190.6L188.9 186.8M213.1 110.0L211.7 106.5M223.2 192.0L220.8 188.9M220.6 194.9L221.8 197.6M214.5 202.2L216.1 199.7M216.5 202.3L219.8 200.8M226.4 143.8L224.5 148.3M228.2 157.1L228.4 154.6M222.3 164.5L224.6 161.7M226.4 175.8L228.1 177.6M230.8 185.4L228.9 187.6M258.0 138.0L255.5 139.9M266.2 154.8L264.8 153.0M265.3 160.4L263.5 163.6M264.7 166.3L264.5 162.9M260.7 176.8L260.1 181.2M261.4 186.7L260.2 188.9M263.0 192.4L264.1 196.6M262.0 198.3L262.7 196.2M263.4 205.5L260.9 208.4M264.9 110.3L268.1 108.6M293.6 129.8L293.3 126.5M293.0 158.0L289.4 155.7M290.2 162.3L288.5 159.4M297.9 163.8L300.2 167.9M297.6 169.1L298.6 165.1M293.8 170.1L292.7 167.1M299.4 174.6L300.3 172.3M293.3 183.8L292.1 186.7M303.5 219.6L302.3 216.3M301.8 218.4L300.8 221.3M280.7 176.5L283.9 172.7M285.3 173.2L283.9 176.4M289.3 175.0L294.2 174.6M342.8 131.2L343.5 127.9M343.1 140.4L342.7 136.8M345.3 143.9L343.4 140.3M342.7 140.6L342.9 144.7M345.0 155.6L341.5 158.3M337.6 157.2L341.6 158.6M338.5 164.3L340.2 167.1M340.6 194.2L341.9 192.3M343.5 194.7L345.4 191.3M347.0 193.7L344.7 195.8M347.8 200.3L346.3 198.6M343.3 219.0L345.0 223.4M346.2 219.6L344.8 222.2M347.5 225.9L345.4 223.1M345.6 174.9L346.8 177.7M351.7 192.5L350.8 189.3M366.2 162.1L370.2 160.0M382.1 135.1L384.1 137.3M386.9 124.2L386.6 126.6M364.3 191.7L366.2 195.7M397.6 221.8L401.4 221.7M419.2 141.1L415.1 142.0M427.2 146.5L431.1 145.9M437.1 143.6L434.5 142.8M452.4 146.9L449.6 144.7M459.7 160.1L461.9 161.2M457.7 182.0L456.2 186.5M442.7 197.6L446.9 198.6M445.1 208.4L446.4 205.4M444.0 203.6L443.4 207.5M442.2 201.9L439.2 202.8M427.9 205.6L428.5 201.8M428.8 204.7L425.9 204.3M410.3 188.6L407.7 185.6M397.0 184.3L398.3 180.2M399.9 157.6L402.3 156.8M410.2 155.3L406.0 156.8M403.5 150.9L407.1 152.0M409.0 150.2L412.9 148.9M418.5 145.1L414.3 145.5M481.3 124.6L482.2 127.1M493.0 163.5L489.1 161.9M500.0 175.0L501.8 178.0M501.2 182.9L501.0 186.2M522.5 124.4L520.3 128.1M521.2 141.1L520.3 137.6M526.6 141.7L524.1 141.8M526.4 139.3L524.4 143.6M523.6 148.3L523.7 152.8M523.5 151.8L522.3 155.4M519.9 166.1L517.1 168.5M523.1 173.2L521.2 170.9M522.0 189.9L521.7 186.7M517.8 203.0L516.4 207.7M503.4 205.3L503.6 208.3M515.4 247.4L512.9 243.1" stroke="#e0308c" stroke-width="2.0"/><path d="M162.9 156.7L161.8 159.2M166.6 179.9L164.6 176.8M159.1 186.0L158.2 182.0M162.1 187.5L159.0 188.3M162.6 204.0L163.5 200.3M162.5 216.6L161.3 220.9M168.4 131.7L165.0 129.3M173.8 136.2L174.9 138.9M179.5 137.5L181.3 139.8M182.0 141.7L178.5 139.0M182.7 147.5L180.3 143.5M184.8 153.6L186.2 151.8M188.6 158.8L188.5 154.6M187.8 185.9L189.3 182.4M187.1 188.0L190.3 187.6M171.5 206.5L173.9 204.7M214.5 116.6L213.1 112.3M213.5 136.6L212.7 132.8M215.3 138.2L218.2 138.0M212.5 142.4L217.2 142.0M215.2 159.6L216.2 156.1M214.8 161.7L211.4 158.2M216.2 168.7L217.9 171.4M219.9 173.8L220.3 169.1M218.0 210.6L217.4 207.8M221.3 211.2L224.3 214.3M225.7 139.6L223.3 136.9M229.6 141.3L230.1 138.6M228.2 156.4L227.7 158.8M229.9 167.0L228.8 165.1M226.5 175.3L226.3 173.0M226.9 179.2L226.1 175.2M222.6 136.2L220.2 132.8M260.5 121.9L257.6 118.1M261.0 123.8L264.7 120.6M272.3 125.6L269.8 127.5M264.8 127.2L266.3 131.9M267.2 139.9L269.0 143.3M263.4 148.1L265.3 144.4M265.4 154.7L262.4 152.9M265.8 165.9L265.8 161.2M263.4 165.8L264.0 170.0M252.9 185.1L254.5 183.0M262.5 182.7L261.8 185.9M265.0 189.0L264.9 185.2M257.0 196.9L259.7 195.8M284.0 118.0L282.8 115.8M290.8 128.2L293.1 129.5M288.9 139.1L292.3 141.8M297.7 142.0L294.0 144.5M295.5 145.0L294.1 142.9M296.5 164.8L296.3 162.5M304.1 175.0L303.9 179.4M297.4 185.4L299.2 188.3M292.8 193.2L294.2 188.7M308.6 198.8L304.6 200.9M301.9 200.8L299.9 203.7M297.7 214.6L296.8 218.5M297.4 223.8L297.8 219.5M303.5 220.8L304.5 223.6M291.2 172.2L288.5 175.1M302.3 172.8L299.8 169.1M300.6 171.3L303.2 172.2M302.8 175.7L299.5 173.4M339.5 128.8L341.8 125.4M343.2 148.8L340.5 144.9M345.5 149.6L343.6 153.4M337.8 160.5L335.1 158.0M343.8 174.1L345.4 171.1M345.1 197.1L346.1 200.3M347.9 210.4L346.6 206.9M343.3 213.7L345.8 216.4M349.8 219.5L346.9 215.6M349.2 222.6L348.5 225.0M350.3 236.0L350.4 232.2M352.5 233.3L354.5 237.4M352.3 191.4L353.4 194.8M351.4 186.6L351.1 182.3M361.1 172.7L364.3 171.7M360.8 170.8L365.4 169.8M356.6 165.9L360.6 165.0M385.0 126.3L387.8 129.9M390.8 111.6L389.6 113.6M351.9 193.6L349.6 191.1M359.2 189.6L363.2 189.7M370.7 199.7L366.4 198.3M372.7 203.5L373.9 206.1M388.8 205.9L384.9 204.3M378.4 206.9L381.3 207.6M416.6 141.9L419.1 142.1M434.2 147.2L432.1 143.7M459.2 163.8L457.6 161.2M461.0 162.6L462.8 164.2M467.3 162.4L467.6 166.7M466.3 167.9L462.6 165.6M455.3 195.0L459.0 194.0M447.7 199.3L445.4 198.4M435.7 205.3L437.7 201.6M433.6 210.5L433.5 207.1M427.0 201.3L430.4 203.7M430.3 202.3L427.0 199.5M409.5 190.5L413.0 189.1M407.7 188.5L405.1 192.1M397.7 175.6L397.9 170.8M408.1 163.4L406.4 166.5M406.1 158.5L404.6 162.8M404.3 161.3L404.8 158.0M404.2 156.5L402.2 153.2M407.2 152.5L411.4 151.2M482.8 124.1L481.6 121.9M478.5 124.0L480.8 123.9M479.9 134.4L480.6 130.7M485.3 136.2L480.8 134.6M487.0 139.7L488.0 143.2M491.4 161.2L493.9 164.1M509.4 205.1L509.6 209.9M520.1 112.7L517.5 110.7M523.5 126.9L522.0 129.5M518.5 133.9L518.7 129.2M519.5 147.1L519.5 143.9M522.1 155.7L522.6 158.6M516.5 163.7L518.3 165.9M524.7 170.7L524.8 167.8M518.8 170.2L521.8 167.0M523.7 176.3L525.4 178.9M514.8 184.6L517.8 182.4M522.5 188.6L525.6 184.9M516.5 191.4L518.3 195.9M515.9 210.6L512.5 212.6M517.9 210.5L521.5 213.7M513.6 232.3L510.2 233.0M511.8 235.5L512.2 233.1M512.7 250.5L515.8 247.4M512.7 206.6L509.8 203.0M503.7 212.2L504.2 216.3M514.2 221.2L510.9 219.1M512.6 234.4L511.0 232.2M514.8 234.5L516.8 233.2M515.2 248.0L514.9 244.1M514.6 248.1L514.3 251.3" stroke="#f08c1e" stroke-width="2.0"/><path d="M433.9 186.4L430.9 185.7M442.2 182.9L442.4 186.7M428.1 171.3L431.0 169.2M441.3 170.7L444.2 174.2M442.0 176.7L440.9 180.3M445.0 182.2L441.8 182.7M443.7 176.2L444.5 179.5" stroke="#e82a3a" stroke-width="1.5"/><path d="M444.2 178.6L443.1 181.4M427.0 167.6L430.2 165.4M427.8 181.5L425.9 176.9M421.7 174.9L422.1 171.1M445.6 173.1L444.7 176.3" stroke="#1ea4e4" stroke-width="1.5"/><path d="M441.6 176.0L439.4 178.3M424.8 181.2L424.6 178.5M440.3 169.5L442.9 169.8M422.7 172.5L426.6 172.1" stroke="#e8c22a" stroke-width="1.5"/><path d="M445.6 172.9L446.2 175.9M425.0 177.8L425.0 173.7M435.5 184.4L430.5 184.8M442.7 184.5L439.1 187.1M425.5 171.7L428.3 167.9M435.3 184.4L432.6 183.0M431.7 163.4L434.7 163.5" stroke="#8a3cc4" stroke-width="1.5"/><path d="M432.8 168.3L436.5 168.0M425.3 172.6L425.1 169.2M447.5 172.6L446.4 176.7M441.0 178.4L438.5 179.6M430.8 182.5L426.3 180.5" stroke="#2a64e0" stroke-width="1.5"/><path d="M427.6 178.2L426.5 175.2" stroke="#8a3cc4" stroke-width="1.0"/><path d="M437.2 168.1L441.1 167.9" stroke="#e8c22a" stroke-width="1.0"/></g><path d="M249.0 126.0 L249.1 129.4 L249.2 133.9 L249.3 139.2 L249.4 145.2 L249.6 151.5 L249.7 157.9 L249.9 164.2 L250.0 170.0 L250.1 175.8 L250.0 181.8 L249.9 188.0 L249.9 194.2 L249.9 200.1 L250.0 205.7 L250.4 210.7 L251.0 215.0 L252.0 218.6 L253.3 221.6 L254.9 224.2 L256.6 226.3 L258.2 228.1 L259.8 229.6 L261.1 230.9 L262.0 232.0" stroke="#e01c5c" stroke-width="1.9" fill="none" stroke-dasharray="4 3" stroke-linecap="round"/><path d="M282.0 112.0 L283.4 112.9 L285.4 113.8 L287.8 115.0 L290.4 116.3 L293.0 117.9 L295.6 119.9 L298.0 122.2 L300.0 125.0 L301.7 128.3 L303.2 132.1 L304.6 136.3 L305.9 140.8 L307.1 145.5 L308.2 150.4 L309.1 155.2 L310.0 160.0 L310.7 164.8 L311.3 169.8 L311.8 175.0 L312.2 180.2 L312.5 185.4 L312.7 190.4 L312.9 195.3 L313.0 200.0 L313.1 204.6 L313.0 209.3 L312.9 214.0 L312.7 218.5 L312.5 222.7 L312.3 226.4 L312.1 229.6 L312.0 232.0" stroke="#e01c5c" stroke-width="1.9" fill="none" stroke-dasharray="4 3" stroke-linecap="round"/><path d="M330.0 128.0 L330.1 132.0 L330.3 137.4 L330.5 143.8 L330.8 150.9 L331.0 158.4 L331.3 165.9 L331.6 173.2 L332.0 180.0 L332.4 186.6 L332.9 193.4 L333.4 200.4 L333.9 207.2 L334.4 213.8 L335.0 219.9 L335.5 225.4 L336.0 230.0 L336.5 233.7 L337.1 236.8 L337.7 239.2 L338.2 241.1 L338.8 242.7 L339.3 243.9 L339.7 245.0 L340.0 246.0" stroke="#d0186c" stroke-width="1.9" fill="none" stroke-dasharray="3 3.5" stroke-linecap="round"/><path d="M407.0 116.0 L407.0 118.0 L407.0 120.9 L407.0 124.3 L407.0 128.0 L407.0 131.7 L407.0 135.1 L407.0 138.0 L407.0 140.0" stroke="#e01c5c" stroke-width="1.9" fill="none" stroke-dasharray="3 3" stroke-linecap="round"/><path d="M400.5 151.0 L401.6 150.2 L402.8 149.0 L404.3 147.6 L406.1 146.2 L408.1 144.6 L410.4 143.2 L413.0 141.8 L416.0 140.8 L419.5 139.9 L423.5 139.1 L428.0 138.3 L432.8 137.6 L437.5 137.1 L442.2 136.7 L446.6 136.6 L450.5 136.8 L454.1 137.2 L457.7 137.8 L461.1 138.5 L464.3 139.5 L467.3 140.7 L469.9 142.2 L472.2 144.0 L474.0 146.0 L475.3 148.5 L476.3 151.4 L476.9 154.6 L477.1 158.1 L477.1 161.7 L476.8 165.2 L476.2 168.7 L475.5 172.0 L474.5 175.2 L473.1 178.4 L471.4 181.6 L469.5 184.8 L467.4 187.9 L465.3 190.8 L463.1 193.5 L461.0 196.0 L458.9 198.1 L456.9 200.0 L454.7 201.5 L452.6 203.0 L450.3 204.4 L447.9 205.8 L445.3 207.3 L442.6 209.0 L439.6 210.9 L436.3 213.1 L432.7 215.3 L429.1 217.6 L425.5 219.7 L422.1 221.8 L418.8 223.6 L416.0 225.0 L413.5 226.1 L411.2 227.0 L409.0 227.7 L407.1 228.2 L405.3 228.6 L403.6 228.8 L402.0 229.0 L400.5 229.0 L399.1 228.9 L397.8 228.5 L396.6 227.9 L395.6 227.2 L394.6 226.6 L393.8 225.9 L393.2 225.4 L392.6 225.0" stroke="#e01c34" stroke-width="2.0" fill="none" stroke-dasharray="4.5 3.5" stroke-linecap="round"/><path d="M402.0 192.0 L401.7 193.5 L401.3 195.6 L400.9 198.0 L400.4 200.8 L399.9 203.6 L399.5 206.5 L399.2 209.4 L399.0 212.0 L399.0 214.6 L399.2 217.5 L399.5 220.4 L399.8 223.2 L400.2 226.0 L400.5 228.4 L400.8 230.5 L401.0 232.0" stroke="#d0186c" stroke-width="1.3" fill="none" stroke-dasharray="3 4" stroke-linecap="round"/><path d="M180.0 130.0 L180.7 130.7 L181.8 131.6 L183.0 132.6 L184.4 133.8 L185.7 135.1 L187.0 136.6 L188.1 138.2 L189.0 140.0 L189.6 142.2 L190.0 144.8 L190.4 147.6 L190.6 150.6 L190.7 153.5 L190.8 156.2 L190.9 158.4 L191.0 160.0" stroke="#e01c34" stroke-width="1.9" fill="none" stroke-dasharray="3 4" stroke-linecap="round"/><path d="M228.0 131.0 L228.8 131.3 L230.0 131.6 L231.5 132.0 L233.0 132.5 L234.5 133.0 L236.0 133.4 L237.2 133.7 L238.0 134.0" stroke="#e01c34" stroke-width="1.5" fill="none" stroke-dasharray="4 3" stroke-linecap="round"/><path d="M232.0 150.0 L232.2 152.7 L232.4 156.5 L232.7 161.1 L233.0 166.0 L233.3 170.9 L233.6 175.5 L233.8 179.3 L234.0 182.0" stroke="#2a64e0" stroke-width="1.6" fill="none" stroke-dasharray="3 4" stroke-linecap="round"/><path d="M360.0 210.0 L361.4 210.8 L363.3 211.9 L365.5 213.2 L367.9 214.7 L370.5 216.2 L373.1 217.6 L375.7 218.9 L378.0 220.0 L380.3 220.9 L382.7 221.7 L385.2 222.5 L387.6 223.1 L389.9 223.7 L392.0 224.2 L393.7 224.6 L395.0 225.0" stroke="#8a3cc4" stroke-width="1.9" fill="none" stroke-dasharray="4 3" stroke-linecap="round"/><path d="M393.0 226.0 L394.4 226.5 L396.5 227.2 L398.9 228.1 L401.5 229.0 L404.1 229.9 L406.5 230.8 L408.6 231.5 L410.0 232.0" stroke="#e01c34" stroke-width="1.9" fill="none" stroke-dasharray="4 3" stroke-linecap="round"/><path d="M478.0 118.0 L477.8 118.6 L477.6 119.4 L477.3 120.4 L477.0 121.5 L476.7 122.6 L476.4 123.6 L476.2 124.4 L476.0 125.0" stroke="#e01c5c" stroke-width="2" fill="none" stroke-dasharray="4 3" stroke-linecap="round"/><path d="M472.0 148.0 L471.7 149.8 L471.2 152.5 L470.6 155.6 L470.0 159.0 L469.4 162.4 L468.8 165.5 L468.3 168.2 L468.0 170.0" stroke="#e01c34" stroke-width="1.5" fill="none" stroke-dasharray="4 3" stroke-linecap="round"/><circle cx="555" cy="250" r="2.6" fill="#fff"/><circle cx="553.5" cy="252.5" r="1" fill="#fff"/></g></svg><!-- /ART -->
<!-- right panel -->
<div class="a" style="left:570px;top:33px;width:130px;height:404px;background:#1f1f1f"></div><div class="a" style="left:570px;top:33px;width:130px;height:1px;background:#2a2a2a"></div>
<div class="hdr" style="left:572px;top:34px;width:126px;height:12.5px"></div>
<div class="body" style="left:572px;top:46.5px;width:126px;height:62px"></div>
<div class="a" style="left:572px;top:109.5px;width:126px;height:1px;background:#333"></div>
<div class="hdr" style="left:572px;top:110.5px;width:126px;height:13px"></div>
<div class="body" style="left:572px;top:123.5px;width:126px;height:141.5px"></div>
<div class="a" style="left:572px;top:266px;width:126px;height:1px;background:#333"></div>
<div class="hdr" style="left:572px;top:267px;width:126px;height:13.5px"></div>
<div class="body" style="left:572px;top:280.5px;width:126px;height:155px"></div>
<div class="a" style="left:0;top:435.4px;width:700px;height:1.6px;background:#2e2e2e"></div>

<!-- navigator -->
<div class="dash" style="left:575px;top:39.5px"></div>
<div class="s or" style="left:572px;width:126px;text-align:center;transform-origin:50% 0;top:37px">Навигатор</div>
<div class="hamb" style="left:688.8px;top:37px"></div>
<div class="a" style="left:611.2px;top:47.8px;width:49.7px;height:31px;background:#000"></div>
<svg class="a" style="left:611.2px;top:47.8px" width="50" height="31" viewBox="0 0 50 31" id="thumbsvg"><g fill="none"><path d="M3.1 3.1h0.6M2.8 5.1h0.6M3.2 6.2h0.6M3.1 6.5h0.6M3.4 10.0h0.6M3.4 11.9h0.6M3.2 13.5h0.6M4.5 3.2h0.6M5.6 4.4h0.6M5.6 5.8h0.6M6.2 6.5h0.6M6.0 9.2h0.6M5.4 10.1h0.6M5.5 10.4h0.6M9.1 2.0h0.6M9.2 4.3h0.6M9.0 4.7h0.6M9.4 6.3h0.6M9.7 7.7h0.6M9.6 8.1h0.6M9.6 9.7h0.6M10.9 5.7h0.6M10.5 6.2h0.6M10.8 6.7h0.6M10.4 7.0h0.6M11.0 9.6h0.6M10.9 10.2h0.6M10.8 10.4h0.6M10.4 10.9h0.6M10.8 11.3h0.6M15.6 1.6h0.6M15.0 4.7h0.6M15.3 5.7h0.6M15.2 7.2h0.6M14.0 9.2h0.6M18.3 2.4h0.6M18.6 7.2h0.6M19.7 9.9h0.6M20.0 14.2h0.6M16.2 8.3h0.6M17.1 8.1h0.6M17.5 8.4h0.6M18.4 8.1h0.6M18.8 8.4h0.6M24.8 4.9h0.6M24.5 6.3h0.6M24.5 9.0h0.6M24.2 13.3h0.6M25.3 14.9h0.6M24.7 8.0h0.6M24.5 8.7h0.6M25.8 9.9h0.6M26.8 7.8h0.6M29.3 3.0h0.6M29.9 1.4h0.6M26.1 10.8h0.6M26.4 11.7h0.6M30.0 13.3h0.6M28.4 12.6h0.6M29.8 12.8h0.6M35.3 5.0h0.6M38.0 6.3h0.6M37.7 6.8h0.6M38.4 8.5h0.6M38.8 9.3h0.6M37.4 11.9h0.6M34.8 12.1h0.6M32.9 12.0h0.6M31.6 10.1h0.6M32.0 9.7h0.6M31.9 7.9h0.6M32.3 6.3h0.6M33.8 5.1h0.6M34.6 5.9h0.6M40.8 3.6h0.6M41.2 4.4h0.6M43.4 10.7h0.6M43.3 11.2h0.6M45.5 1.9h0.6M45.2 2.3h0.6M45.0 4.0h0.6M45.2 5.4h0.6M45.8 5.8h0.6M45.3 9.9h0.6M44.6 10.5h0.6M44.8 13.8h0.6M44.2 15.8h0.6" stroke="#e82a3a" stroke-width="0.7"/><path d="M3.3 3.6h0.6M2.8 4.7h0.6M3.0 5.5h0.6M2.9 11.1h0.6M4.0 3.9h0.6M5.5 4.7h0.6M5.6 8.2h0.6M5.7 11.4h0.6M4.6 11.9h0.6M8.8 1.1h0.6M9.4 10.4h0.6M10.4 12.3h0.6M10.2 12.6h0.6M15.8 2.0h0.6M14.8 3.3h0.6M14.3 3.9h0.6M14.9 4.2h0.6M15.0 7.5h0.6M15.1 8.8h0.6M14.9 12.6h0.6M15.9 0.7h0.6M17.2 2.3h0.6M18.9 6.7h0.6M20.1 11.5h0.6M19.6 11.9h0.6M19.4 14.7h0.6M15.8 8.6h0.6M19.1 8.5h0.6M20.4 8.4h0.6M24.4 3.1h0.6M24.2 3.9h0.6M23.6 4.7h0.6M24.6 5.7h0.6M24.6 7.5h0.6M24.9 10.5h0.6M25.3 11.7h0.6M25.2 12.5h0.6M25.3 10.0h0.6M25.9 9.0h0.6M26.5 8.4h0.6M29.6 1.5h0.6M27.6 11.9h0.6M29.3 12.3h0.6M30.9 13.5h0.6M33.5 5.0h0.6M34.8 5.4h0.6M38.3 7.8h0.6M37.3 10.7h0.6M36.3 11.8h0.6M32.5 10.4h0.6M30.8 9.2h0.6M31.1 8.9h0.6M32.4 5.8h0.6M41.2 5.6h0.6M41.8 5.9h0.6M42.2 7.9h0.6M43.7 12.0h0.6M45.6 8.8h0.6M45.4 11.9h0.6M44.8 12.4h0.6M44.7 13.2h0.6M44.8 14.2h0.6M44.9 15.5h0.6M45.1 16.6h0.6M44.1 14.4h0.6M44.4 17.4h0.6" stroke="#ecc42a" stroke-width="0.7"/><path d="M2.9 4.0h0.6M2.9 9.3h0.6M4.4 3.9h0.6M5.6 8.5h0.6M9.1 3.9h0.6M10.0 11.2h0.6M10.8 12.9h0.6M10.1 3.9h0.6M15.1 5.3h0.6M16.7 0.6h0.6M17.4 1.8h0.6M17.7 4.9h0.6M18.7 5.0h0.6M18.9 9.4h0.6M18.6 10.4h0.6M19.0 14.0h0.6M23.2 2.9h0.6M24.0 4.3h0.6M24.2 5.3h0.6M24.7 6.9h0.6M24.5 8.3h0.6M24.4 9.6h0.6M25.0 13.5h0.6M25.0 14.3h0.6M25.5 10.7h0.6M26.7 8.0h0.6M28.3 5.9h0.6M27.9 12.1h0.6M34.9 4.8h0.6M37.9 7.1h0.6M38.0 10.0h0.6M37.9 10.6h0.6M35.3 11.9h0.6M34.4 11.8h0.6M30.8 8.4h0.6M31.1 7.3h0.6M31.6 7.1h0.6M40.8 4.0h0.6M41.9 6.6h0.6M41.9 7.2h0.6M45.0 0.6h0.6M44.6 9.6h0.6M44.4 12.8h0.6M44.4 17.2h0.6M44.3 17.3h0.6M44.2 13.8h0.6M44.6 15.4h0.6" stroke="#f08c1e" stroke-width="0.7"/><path d="M3.1 4.4h0.6M2.9 8.1h0.6M3.3 8.4h0.6M3.3 9.7h0.6M3.1 12.8h0.6M5.1 4.3h0.6M5.7 5.4h0.6M6.0 7.2h0.6M5.5 7.6h0.6M6.0 8.0h0.6M5.5 10.8h0.6M5.1 11.8h0.6M4.1 11.6h0.6M8.9 1.5h0.6M9.9 5.8h0.6M10.0 8.6h0.6M9.6 9.3h0.6M9.9 9.9h0.6M10.1 10.9h0.6M11.0 4.3h0.6M10.5 4.9h0.6M10.8 5.3h0.6M10.7 7.5h0.6M10.6 9.1h0.6M10.6 11.8h0.6M9.5 3.9h0.6M14.4 4.9h0.6M14.9 7.0h0.6M15.0 8.2h0.6M15.0 9.5h0.6M14.3 9.8h0.6M14.5 11.2h0.6M14.9 11.9h0.6M17.0 2.9h0.6M17.5 3.7h0.6M19.0 3.9h0.6M19.1 8.7h0.6M19.1 9.0h0.6M18.9 13.1h0.6M19.7 13.4h0.6M20.1 15.0h0.6M19.5 8.5h0.6M23.8 7.9h0.6M25.0 9.2h0.6M25.0 15.1h0.6M24.7 15.5h0.6M25.3 11.5h0.6M25.6 12.2h0.6M27.2 7.0h0.6M27.4 6.8h0.6M29.1 3.8h0.6M28.9 3.2h0.6M29.9 2.9h0.6M25.7 10.9h0.6M26.5 10.9h0.6M28.6 12.8h0.6M30.4 13.5h0.6M29.2 12.4h0.6M33.1 5.4h0.6M33.5 4.4h0.6M36.0 4.9h0.6M35.1 12.7h0.6M32.4 11.5h0.6M32.7 10.8h0.6M32.5 5.2h0.6M35.6 6.9h0.6M42.7 9.0h0.6M42.5 9.7h0.6M45.2 1.3h0.6M45.0 2.6h0.6M45.4 6.7h0.6M45.4 9.2h0.6M44.7 14.5h0.6M44.9 14.8h0.6M44.4 16.2h0.6M44.2 12.1h0.6" stroke="#e01c84" stroke-width="0.7"/><path d="M3.3 5.9h0.6M9.4 11.6h0.6M10.7 12.2h0.6M15.7 2.7h0.6M14.7 10.1h0.6M18.5 7.8h0.6M18.5 9.8h0.6M19.4 10.7h0.6M24.0 6.6h0.6M24.5 14.0h0.6M24.8 9.2h0.6M29.1 4.1h0.6M37.0 5.2h0.6M36.1 12.1h0.6M35.8 11.8h0.6M31.2 6.5h0.6M40.5 3.3h0.6M44.9 0.2h0.6M45.0 1.6h0.6M45.2 4.5h0.6M45.7 4.7h0.6M44.9 7.7h0.6M43.8 15.8h0.6" stroke="#e0308c" stroke-width="0.7"/><path d="M2.7 6.9h0.6M3.0 8.9h0.6M6.3 9.9h0.6M4.8 11.0h0.6M9.5 5.0h0.6M9.7 6.6h0.6M9.6 6.9h0.6M10.1 11.9h0.6M10.8 8.7h0.6M10.9 3.3h0.6M15.1 3.0h0.6M14.7 3.5h0.6M15.5 7.9h0.6M14.5 10.8h0.6M15.3 1.4h0.6M19.3 5.3h0.6M18.6 5.8h0.6M18.2 6.1h0.6M19.0 6.4h0.6M18.9 8.1h0.6M15.0 8.3h0.6M17.8 8.3h0.6M23.3 3.7h0.6M24.2 11.2h0.6M26.2 9.7h0.6M27.8 6.1h0.6M28.0 4.8h0.6M29.7 1.9h0.6M29.5 12.5h0.6M34.1 4.9h0.6M31.5 10.9h0.6M31.8 6.3h0.6M42.3 8.4h0.6M42.0 8.8h0.6M42.8 10.5h0.6M44.0 12.5h0.6M45.7 6.1h0.6M45.4 8.3h0.6" stroke="#9040c4" stroke-width="0.7"/><path d="M3.2 7.3h0.6M3.2 7.7h0.6M2.9 12.2h0.6M3.0 13.3h0.6M3.2 3.9h0.6M6.2 6.0h0.6M5.6 6.3h0.6M5.4 7.0h0.6M6.2 8.8h0.6M9.1 0.6h0.6M9.8 13.2h0.6M10.8 7.8h0.6M10.7 8.3h0.6M15.2 2.2h0.6M14.9 6.6h0.6M14.0 8.6h0.6M14.5 2.6h0.6M14.7 2.2h0.6M16.6 1.4h0.6M17.6 1.1h0.6M18.0 3.1h0.6M18.4 3.7h0.6M18.5 7.4h0.6M18.7 11.3h0.6M19.9 12.6h0.6M19.4 13.7h0.6M15.4 8.2h0.6M16.7 8.4h0.6M20.1 8.6h0.6M24.4 5.9h0.6M24.1 7.3h0.6M25.1 8.5h0.6M24.0 10.0h0.6M24.7 10.1h0.6M24.7 10.9h0.6M24.9 11.4h0.6M24.8 12.1h0.6M25.1 15.8h0.6M27.9 6.5h0.6M27.8 5.2h0.6M28.9 4.9h0.6M25.3 10.4h0.6M27.6 11.3h0.6M28.2 12.7h0.6M30.8 13.3h0.6M35.8 4.5h0.6M37.6 5.1h0.6M37.7 5.5h0.6M38.3 5.7h0.6M37.8 7.5h0.6M38.1 8.2h0.6M38.7 9.0h0.6M38.2 9.7h0.6M37.0 10.9h0.6M37.0 11.8h0.6M33.8 12.4h0.6M33.5 11.9h0.6M32.7 11.7h0.6M41.4 4.6h0.6M42.1 7.4h0.6M42.5 10.0h0.6M43.5 11.4h0.6M45.6 3.1h0.6M45.4 3.8h0.6M45.7 5.1h0.6M45.2 7.0h0.6M44.7 9.0h0.6M44.9 10.2h0.6M45.4 11.0h0.6M45.0 11.2h0.6M44.4 12.2h0.6M44.3 15.2h0.6M44.4 16.7h0.6M43.6 12.5h0.6M44.2 12.7h0.6M43.3 13.3h0.6M43.6 15.1h0.6M44.8 16.6h0.6" stroke="#22aee6" stroke-width="0.7"/><path d="M3.2 10.3h0.6M3.0 10.7h0.6M3.0 11.4h0.6M3.2 14.0h0.6M3.6 4.1h0.6M5.0 4.0h0.6M5.9 4.9h0.6M5.9 9.4h0.6M3.9 11.7h0.6M9.8 5.4h0.6M9.6 7.4h0.6M9.8 8.9h0.6M10.0 12.7h0.6M10.6 3.9h0.6M15.3 1.2h0.6M15.4 5.9h0.6M15.5 6.2h0.6M14.7 10.4h0.6M15.1 11.6h0.6M14.1 12.2h0.6M18.8 4.3h0.6M18.8 8.3h0.6M19.3 10.9h0.6M18.8 12.5h0.6M24.3 12.9h0.6M25.7 14.5h0.6M26.1 8.6h0.6M27.3 7.5h0.6M28.7 4.3h0.6M29.9 2.4h0.6M26.9 11.4h0.6M29.9 12.8h0.6M36.5 5.1h0.6M38.7 10.7h0.6M31.4 9.6h0.6M31.2 8.1h0.6M32.7 5.4h0.6M40.8 2.7h0.6M40.9 5.3h0.6M41.5 6.4h0.6M45.5 0.8h0.6M45.1 3.4h0.6M45.1 6.4h0.6M45.1 7.3h0.6M45.3 8.0h0.6M44.5 11.6h0.6M44.9 13.6h0.6M43.5 13.5h0.6M44.4 14.7h0.6M45.0 16.2h0.6M44.3 17.0h0.6" stroke="#2a6ee0" stroke-width="0.7"/><path d="M35.8 8.8h0.6M33.9 9.2h0.6M33.9 8.3h0.6" stroke="#e8c22a" stroke-width="0.7"/><path d="M34.0 8.7h0.6M34.2 8.8h0.6" stroke="#8a3cc4" stroke-width="0.7"/><path d="M34.4 9.3h0.6" stroke="#2a64e0" stroke-width="0.7"/></g></svg>
<div class="sl" style="left:597px;top:82.7px;width:54.6px;height:9.5px;background:#2a2a2a"><div class="slf" style="width:25.5px;background:#5b5b5b"></div><div class="hd" style="left:25px;width:4.9px"></div></div>
<div class="box" style="left:655.3px;top:82.5px;width:18.4px;height:10px;background:#272727"></div>
<div class="s wt" style="left:657.2px;top:83.6px;font-size:7.8px">49%</div>
<div class="sl" style="left:597px;top:96.2px;width:54.6px;height:9.2px;background:#2a2a2a"><div class="slf" style="width:25.5px;background:#5b5b5b"></div><div class="hd" style="left:25px;width:4.9px"></div></div>
<div class="box" style="left:655.3px;top:95.8px;width:18.4px;height:9.8px;background:#272727"></div>
<div class="s wt" style="left:657.3px;top:96.8px;font-size:7.8px">0°</div>
<svg class="a" style="left:572px;top:80px" width="126" height="28" viewBox="572 80 126 28">
<g fill="none" stroke="#dcdcdc" stroke-width="1.1">
<circle cx="578.6" cy="88.4" r="3.5"/><path d="M581 91 L583.6 93.4" stroke-width="1.5"/><path d="M576.8 88.4 H580.4"/>
<circle cx="589.4" cy="88.4" r="3.5"/><path d="M591.8 91 L594.4 93.4" stroke-width="1.5"/><path d="M587.6 88.4 H591.2 M589.4 86.6 V90.2"/>
<circle cx="681.2" cy="88" r="3.5"/><path d="M683.6 90.5 L686 92.8" stroke-width="1.5"/>
<rect x="688.2" y="85.4" width="8.6" height="6" rx="1.5"/>
<path d="M576.2 100.6 A3.4 3.4 0 1 1 579 103.95" stroke-width="1.2"/><rect x="578.1" y="99.1" width="3" height="3" stroke-width="0.9"/><path d="M574.5 100.8 L577.2 98.8 L577.2 102.6Z" fill="#dcdcdc" stroke="none"/>
<path d="M592.7 100.6 A3.4 3.4 0 1 0 589.9 103.95" stroke-width="1.2"/><rect x="587.8" y="99.1" width="3" height="3" stroke-width="0.9"/><path d="M594.5 100.8 L591.8 98.8 L591.8 102.6Z" fill="#dcdcdc" stroke="none"/>
<path d="M684.2 100.8 A3.4 3.4 0 1 0 681.4 104.15" stroke-width="1.2"/><rect x="679.3" y="99.3" width="3" height="3" stroke-width="0.9"/><path d="M686 101 L683.3 99 L683.3 102.8Z" fill="#dcdcdc" stroke="none"/>
</g>
<path d="M688 97.6 L691.6 100.8 L688 104 Z M697 97.6 L693.4 100.8 L697 104 Z" fill="#e4e4e4"/>
<path d="M692.5 97 V104.6" stroke="#e4e4e4" stroke-width="0.9"/>
</svg>
<div class="a" style="left:698.5px;top:62px;width:1.5px;height:373px;background:#5c5c5c"></div>



<!-- palette -->
<div class="dash" style="left:575px;top:116.8px"></div>
<div class="s or" style="left:572px;width:126px;text-align:center;transform-origin:50% 0;top:114px">Палитра</div>
<div class="hamb" style="left:688.8px;top:114.5px"></div>
<div class="a" style="left:579.8px;top:133.2px;width:7.4px;height:6.2px;background:#e6e6e6;border:0.8px solid #b0b0b0"></div>
<div class="s wt" style="left:590px;top:131.8px">Цвет</div>
<div class="a" style="left:611.8px;top:129.2px;width:43.7px;height:12px;background:#e8801c;border-radius:2px"></div>
<div class="a" style="left:614.5px;top:131.8px;width:7.5px;height:6.8px;background:#f0c8a0;border:0.8px solid #d09060"></div>
<svg class="a" style="left:614.5px;top:131.8px" width="8" height="7" viewBox="0 0 8 7"><path d="M2.6 0 V7 M5.2 0 V7" stroke="#e8a070" stroke-width="0.6"/></svg>
<div class="s" style="left:624px;top:131.8px;color:#fff">Градиент</div>
<svg class="a" style="left:658.8px;top:131.8px" width="8.5" height="7" viewBox="0 0 8.5 7"><rect x="0" y="0" width="8.5" height="7" fill="#cfcfcf"/><path d="M0 2.3 H8.5 M0 4.7 H8.5 M2.8 0 V7 M5.7 0 V7" stroke="#3b3b3b" stroke-width="0.6"/></svg>
<div class="s wt" style="left:669px;top:131.8px">Изобр...</div>
<div class="a" style="left:574px;top:150.5px;width:124px;height:33.5px;background:#262626"></div>
<div class="a" style="left:575.3px;top:152px;width:121.7px;height:15.8px;background:linear-gradient(90deg,#e82420 0.0% 0.8%,#d6422a 0.8% 6.3%,#dd6a22 6.3% 12.1%,#e68c1a 12.1% 20.3%,#e8ac18 20.3% 25.2%,#e2c020 25.2% 30.2%,#cac03c 30.2% 35.1%,#a4b858 35.1% 40.0%,#74b890 40.0% 44.9%,#44b0c0 44.9% 49.9%,#1aa6e0 49.9% 55.6%,#1278e0 55.6% 62.2%,#1f62d2 62.2% 67.1%,#4658c2 67.1% 71.2%,#6e4ab8 71.2% 76.2%,#9040b0 76.2% 81.1%,#bc2c9c 81.1% 86.0%,#d61a8c 86.0% 91.0%,#de1862 91.0% 95.9%,#e22024 95.9% 100.0%)"></div><div class="a" style="left:575px;top:168.6px;width:122px;height:14.2px;display:flex;gap:1px"><div style="flex:1;position:relative"><div style="position:absolute;left:0;right:0;top:0;height:8.4px;background:#e01c24"></div><div style="position:absolute;left:0;right:0;top:9.4px;height:4.6px;background:#e8801c"></div></div><div style="flex:1;position:relative"><div style="position:absolute;left:0;right:0;top:0;height:8.4px;background:#e8901e"></div><div style="position:absolute;left:0;right:0;top:9.4px;height:4.6px;background:#e8801c"></div></div><div style="flex:1;position:relative"><div style="position:absolute;left:0;right:0;top:0;height:8.4px;background:#e8c41c"></div><div style="position:absolute;left:0;right:0;top:9.4px;height:4.6px;background:#e8801c"></div></div><div style="flex:1;position:relative"><div style="position:absolute;left:0;right:0;top:0;height:8.4px;background:#2cc03c"></div><div style="position:absolute;left:0;right:0;top:9.4px;height:4.6px;background:#2e2e2e"></div></div><div style="flex:1;position:relative"><div style="position:absolute;left:0;right:0;top:0;height:8.4px;background:#14a8ec"></div><div style="position:absolute;left:0;right:0;top:9.4px;height:4.6px;background:#e8801c"></div></div><div style="flex:1;position:relative"><div style="position:absolute;left:0;right:0;top:0;height:8.4px;background:#1e70e0"><div style="position:absolute;left:1.5px;top:1.5px;right:1.5px;height:5.2px;border:0.7px solid #0e3c9c"></div></div><div style="position:absolute;left:0;right:0;top:9.4px;height:4.6px;background:#e8801c"></div></div><div style="flex:1;position:relative"><div style="position:absolute;left:0;right:0;top:0;height:8.4px;background:#8a3ec0"></div><div style="position:absolute;left:0;right:0;top:9.4px;height:4.6px;background:#e8801c"></div></div><div style="flex:1;position:relative"><div style="position:absolute;left:0;right:0;top:0;height:8.4px;background:#e0148c"></div><div style="position:absolute;left:0;right:0;top:9.4px;height:4.6px;background:#e8801c"></div></div><div style="flex:1;position:relative"><div style="position:absolute;left:0;right:0;top:0;height:8.4px;background:#e01828"></div><div style="position:absolute;left:0;right:0;top:9.4px;height:4.6px;background:#e8801c"></div></div></div>
<svg class="a" style="left:572px;top:185px" width="126" height="40" viewBox="572 185 126 40">
<g fill="none" stroke="#e0e0e0" stroke-width="1">
<rect x="576.2" y="189.8" width="8.5" height="8.2" rx="1.8"/>
<rect x="576.5" y="190" width="7.9" height="2" fill="#e0e0e0" stroke="none"/>
<rect x="578.2" y="193.6" width="4.6" height="2" fill="#aaa" stroke="none"/>
<rect x="576.2" y="211.3" width="8.5" height="8.7" rx="1.8"/>
<path d="M579.3 213.5 V218 M581.6 213.5 V218" stroke-width="1.1"/>
<path d="M590.8 215.6 H599.6 M595.2 211.6 V219.6" stroke-width="1.1"/>
<path d="M622 213 H618.6 A1.6 1.6 0 0 0 617 214.6 V216.2 A1.6 1.6 0 0 0 618.6 217.8 H624.6 A1.6 1.6 0 0 0 626.2 216.2 V214" stroke-width="1.2"/>
<path d="M621.5 211.6 L623.5 213 L621.5 214.4" fill="#e0e0e0" stroke-width="0.6"/>
</g>
<rect x="604" y="212" width="9.2" height="7" fill="#3b3b3b" stroke="#d0d0d0" stroke-width="0.9"/>
<rect x="608.6" y="212" width="4.6" height="7" fill="#e0e0e0"/>
</svg>
<div class="s wt" style="left:589.8px;top:190.3px;font-size:7.6px">H</div>
<div class="box" style="left:595.8px;top:188.2px;width:16.4px;height:11.3px;background:#262626"></div>
<div class="s wt" style="left:597.3px;top:190.3px;font-size:7.6px;letter-spacing:0.4px">357</div>
<div class="s wt" style="left:615.3px;top:190.3px;font-size:7.6px">S</div>
<div class="box" style="left:620.4px;top:188.2px;width:15.7px;height:11.3px;background:#262626"></div>
<div class="s wt" style="left:621.8px;top:190.3px;font-size:7.6px;letter-spacing:0.4px">225</div>
<div class="s wt" style="left:637.6px;top:190.3px;font-size:7.6px">V</div>
<div class="box" style="left:643.8px;top:188.2px;width:16.4px;height:11.3px;background:#262626"></div>
<div class="s wt" style="left:645.2px;top:190.3px;font-size:7.6px;letter-spacing:0.4px">213</div>
<div class="a" style="left:638.7px;top:207px;width:15.8px;height:15.8px;border-radius:50%;background:radial-gradient(circle at 50% 40%,#e0e0e0 0%,#cfcfcf 60%,#b0b0b0 100%)"></div><div class="a" style="left:645.6px;top:207.8px;width:2px;height:2px;border-radius:50%;background:#8a8a8a"></div><div class="s" style="left:644.4px;top:211.6px;font-size:7px;color:#606878">H</div><div class="a" style="left:659.3px;top:207px;width:15.8px;height:15.8px;border-radius:50%;background:radial-gradient(circle at 50% 40%,#e0e0e0 0%,#cfcfcf 60%,#b0b0b0 100%)"></div><div class="a" style="left:666.2px;top:207.8px;width:2px;height:2px;border-radius:50%;background:#8a8a8a"></div><div class="s" style="left:665.0px;top:211.6px;font-size:7px;color:#606878">S</div><div class="a" style="left:680.1px;top:207px;width:15.8px;height:15.8px;border-radius:50%;background:radial-gradient(circle at 50% 40%,#e0e0e0 0%,#cfcfcf 60%,#b0b0b0 100%)"></div><div class="a" style="left:687.0px;top:207.8px;width:2px;height:2px;border-radius:50%;background:#8a8a8a"></div><div class="s" style="left:685.8px;top:211.6px;font-size:7px;color:#606878">L</div>
<div class="s wt" style="left:598px;top:234.5px">Повторение</div>
<div class="a" style="left:639px;top:231.5px;width:24.4px;height:12px;background:#5e5e5e;border-radius:2px;border:1px solid #4a4a4a"></div>
<div class="a" style="left:651px;top:231.5px;width:12.4px;height:12px;background:#e8801c;border-radius:0 2px 2px 0"></div>
<svg class="a" style="left:642px;top:233.5px" width="20" height="8" viewBox="0 0 20 8"><rect x="1.5" y="0.8" width="5.5" height="6.5" fill="#c8c8c8"/><path d="M3.3 0.8 V7.3 M5.1 0.8 V7.3" stroke="#8a8a8a" stroke-width="0.5"/><rect x="12.2" y="0.8" width="6" height="6.5" fill="#f4c8a0"/><path d="M12.2 3 H18.2 M12.2 5 H18.2" stroke="#e8a060" stroke-width="0.5"/></svg>
<div class="box" style="left:665.3px;top:232px;width:16.3px;height:11.5px;background:#272727"></div>
<div class="s wt" style="left:667.3px;top:234.2px;font-size:7.6px">1</div>
<div class="a" style="left:584.9px;top:248.2px;width:32.5px;height:11.7px;background:#e8801c;border-radius:2px"></div>
<div class="s" style="left:591.5px;top:250.6px;color:#fff">Штрих</div>
<div class="s wt" style="left:625.7px;top:250.6px">Линии</div>
<div class="s" style="left:662.5px;top:250.6px;color:#858585">Точки</div>


<!-- layers -->
<div class="dash" style="left:575px;top:273.5px"></div>
<div class="s or" style="left:572px;width:126px;text-align:center;transform-origin:50% 0;top:270.5px">Слои</div>
<div class="hamb" style="left:688.8px;top:271px"></div>
<div class="s wt" style="left:577px;top:285px">Смешиван</div>
<div class="dd" style="left:611px;top:284px;width:86px;height:9.2px;background:#585856"></div>
<div class="s wt" style="left:612.5px;top:285.3px">Обычный</div>
<svg class="a" style="left:689px;top:287.5px" width="5" height="3" viewBox="0 0 5 3"><path d="M0 0 L5 0 L2.5 3 Z" fill="#e8e8e8"/></svg>
<div class="s wt" style="left:577px;top:296.3px">Прозрачно</div>
<div class="sl" style="left:611px;top:295px;width:69px;height:8.8px;background:#2a2a2a"><div class="slf" style="width:63.5px;background:#5b5b5b"></div><div class="hd" style="left:63px;width:4.7px"></div></div>
<div class="box" style="left:681.5px;top:294.8px;width:16px;height:9.2px;background:#272727"></div>
<div class="s wt" style="left:682.5px;top:296px;font-size:7.6px">100</div>
<div class="s wt" style="left:577px;top:309.5px">Заблокиро</div>
<svg class="a" style="left:610px;top:308px" width="90" height="12" viewBox="610 308 90 12">
<path d="M612.8 313 V311.5 A2 2 0 0 1 616.8 311.5" fill="none" stroke="#e4e4e4" stroke-width="1"/>
<rect x="612" y="313" width="6" height="4.5" fill="#e4e4e4"/>
<rect x="624.3" y="310.5" width="7" height="7" fill="#e0e0e0"/>
<g fill="#888"><rect x="625.5" y="311.7" width="1.6" height="1.6"/><rect x="628.5" y="311.7" width="1.6" height="1.6"/><rect x="627" y="313.2" width="1.6" height="1.6"/><rect x="625.5" y="314.7" width="1.6" height="1.6"/><rect x="628.5" y="314.7" width="1.6" height="1.6"/></g>
<path d="M688.6 314 C690 311.4 694 311.4 695.4 314 C694 316.6 690 316.6 688.6 314 Z" fill="none" stroke="#d8d8d8" stroke-width="0.9"/>
<circle cx="692" cy="314" r="1.2" fill="#d8d8d8"/>
<path d="M688.5 316.8 L695.5 311.2" stroke="#3b3b3b" stroke-width="0.8"/>
</svg>
<div class="a" style="left:574px;top:322.4px;width:124px;height:96.3px;background:#262626"></div>
<div class="a" style="left:588.6px;top:323.4px;width:108.2px;height:16.1px;background:#545454;border-radius:1px"></div>
<svg class="a" style="left:574px;top:322px" width="40" height="36" viewBox="574 322 40 36">
<g fill="none" stroke="#e8e8e8" stroke-width="1.1">
<path d="M577.6 331.7 C579.4 328.6 584.6 328.6 586.4 331.7 C584.6 334.8 579.4 334.8 577.6 331.7 Z"/>
<path d="M577.6 348 C579.4 344.9 584.6 344.9 586.4 348 C584.6 351.1 579.4 351.1 577.6 348 Z"/>
</g>
<circle cx="582" cy="331.7" r="1.5" fill="#e8e8e8"/>
<circle cx="582" cy="348" r="1.5" fill="#e8e8e8"/>
<rect x="592" y="342.9" width="14.8" height="9.8" fill="#000"/>
<g stroke-width="0.9">
<path d="M593.5 326 L593.8 330" stroke="#c03060"/><path d="M595.5 327.5 L597 330.5" stroke="#6040c0"/><path d="M598 326.5 L598.5 330" stroke="#e02050"/><path d="M600 326 L601.5 329.5" stroke="#8060c0"/><path d="M603 327 L603.5 330.5" stroke="#d03070"/><path d="M604.5 326.5 L606 329" stroke="#5070d0"/>
</g>
</svg>
<div class="s" style="left:611.2px;top:327.8px;font-size:7.6px;color:#f0f0f0;-webkit-text-stroke:0.35px #f0f0f0;transform:scaleX(0.86)">Слой 1</div>
<div class="s" style="left:611.2px;top:344px;font-size:7.6px;color:#e8e8e8;-webkit-text-stroke:0.35px #e8e8e8;transform:scaleX(0.86)">Фон</div>
<svg class="a" style="left:572px;top:420px" width="126" height="15" viewBox="572 420 126 15">
<g fill="none" stroke="#e0e0e0" stroke-width="1">
<rect x="577.2" y="424.4" width="8.4" height="8.4" rx="1.6"/>
<path d="M579.6 426.8 L583.2 430.4 M583.2 426.8 L579.6 430.4"/>
<rect x="621" y="424.4" width="8.6" height="8.4" rx="1.6"/>
<path d="M623 426.5 H626 V428.6 H623 V430.6 H627.6 M626.5 424 V426" stroke-width="0.8"/>
<rect x="634" y="424.4" width="8.6" height="8.4" rx="1.6"/>
<path d="M638.3 426.3 V430.8 M636 428.6 H640.6" stroke-width="1.2"/>
<rect x="647.2" y="424.4" width="8.6" height="8.4" rx="1.6"/>
<path d="M649 429.6 C650 426 651.5 426 652 428.6 C652.5 431 654 431 654.5 427.6" stroke-width="0.9"/>
<rect x="660.2" y="424.4" width="6.4" height="6.4" rx="1.2"/>
<rect x="662.6" y="426.6" width="6.6" height="6.6" rx="1.2" fill="#3b3b3b"/>
<path d="M665.9 428.3 V431.5 M664.3 429.9 H667.5" stroke-width="0.9"/>
<rect x="686.4" y="424.4" width="8.6" height="8.4" rx="1.6"/>
<path d="M688.4 428.6 H693" stroke-width="1.2"/>
</g>
<g fill="#d8d8d8"><rect x="673.5" y="424" width="9" height="1.2"/><rect x="673.5" y="426" width="9" height="1.2"/><path d="M674.5 428 H681.5 L678 431.3 Z"/><rect x="673.5" y="431.8" width="9" height="1"/></g>
</svg>

<div class="a" style="left:572px;top:200.8px;width:126px;height:1px;background:#343434"></div>
<div class="a" style="left:572px;top:224px;width:126px;height:1px;background:#343434"></div>
<!-- RIGHT -->
</body></html>
